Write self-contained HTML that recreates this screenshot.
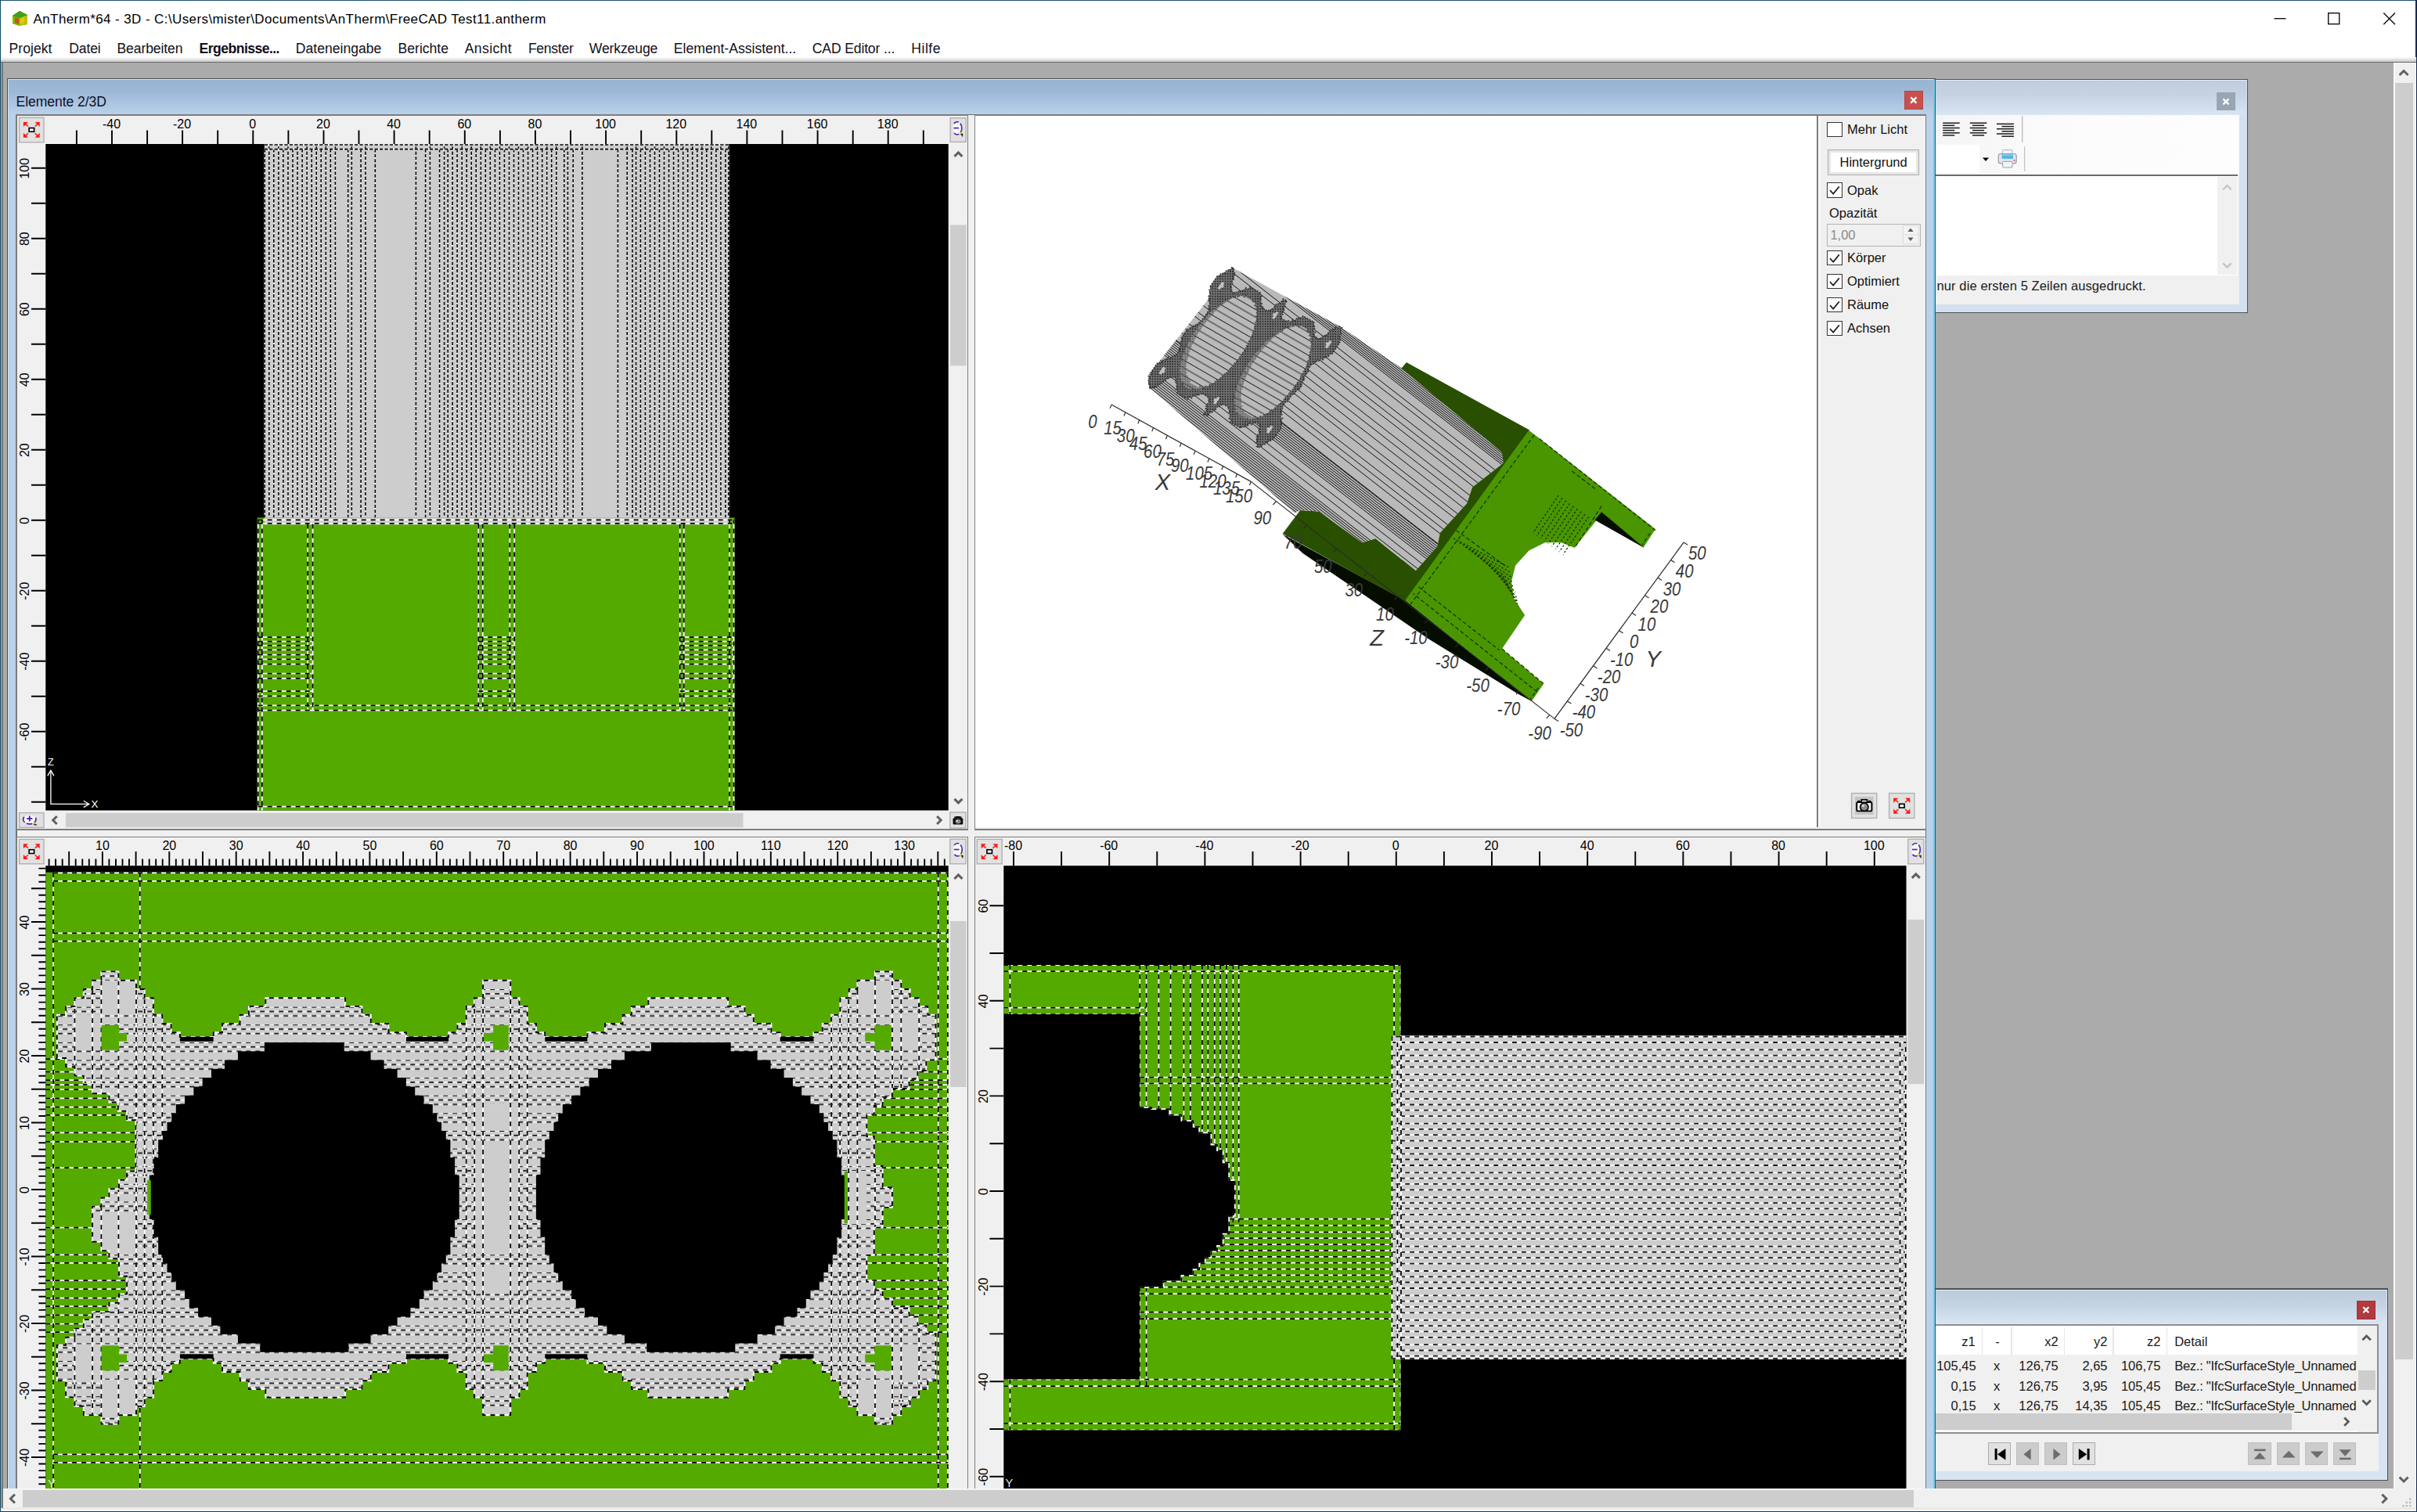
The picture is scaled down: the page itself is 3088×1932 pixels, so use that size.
<!DOCTYPE html><html><head><meta charset="utf-8"><title>AnTherm</title><style>
html,body{margin:0;padding:0;}
body{width:3088px;height:1932px;position:relative;overflow:hidden;background:#fff;font-family:"Liberation Sans",sans-serif;}
.a{position:absolute;box-sizing:border-box;}
.t{white-space:nowrap;}
svg{position:absolute;overflow:hidden;}
svg text{font-family:"Liberation Sans",sans-serif;}
.wl{stroke:#fff;stroke-width:1.6;fill:none;}
.bd{stroke:#000;stroke-width:1.6;fill:none;stroke-dasharray:4.3 2.1;}
.rl text{font-size:16px;fill:#000;text-anchor:middle;}
.tk{stroke:#000;stroke-width:1.9;fill:none;}
.ax text{font-size:23.5px;font-style:italic;fill:#3a3a3a;text-anchor:middle;}
</style></head><body>
<div class="a" style="left:0.0px;top:0.0px;width:3088.0px;height:1.0px;background:#1b5470;"></div>
<div class="a" style="left:0.0px;top:0.0px;width:1.0px;height:1932.0px;background:#0d4c6b;"></div>
<div class="a" style="left:3086.4px;top:0.0px;width:1.6px;height:1932.0px;background:#152a52;"></div>
<svg style="left:14px;top:12px" width="23" height="22" viewBox="0 0 23 22"><polygon points="2,8 11,2 21,7 21,19 11,21 2,18" fill="#4cae17"/><polygon points="2,8 11,11 11,21 2,18" fill="#7fb800"/><polygon points="11,11 21,7 21,19 11,21" fill="#b9c400"/><polygon points="5,10 10,12 10,19 5,17" fill="#c8541a"/><polygon points="12,12 17,10 17,17 12,19" fill="#e8c31a"/><polygon points="2,8 11,2 21,7 11,11" fill="#3f9e1a"/></svg>
<div class="a t ttl" style="top:13.1px;line-height:24px;font-size:17.0px;color:#000;left:42.5px;letter-spacing:0.4px;">AnTherm*64 - 3D - C:\Users\mister\Documents\AnTherm\FreeCAD Test11.antherm</div>
<svg style="left:2880px;top:0" width="208" height="46" viewBox="2880 0 208 46"><line x1="2905.5" y1="23.7" x2="2920.5" y2="23.7" stroke="#111" stroke-width="1.4"/><rect x="2974.7" y="16.7" width="14" height="14" fill="none" stroke="#111" stroke-width="1.4"/><path d="M3045.3 16.5 L3060 31.2 M3060 16.5 L3045.3 31.2" stroke="#111" stroke-width="1.5" fill="none"/></svg>
<div class="a t mn" style="top:49.8px;line-height:24px;font-size:17.6px;color:#101020;left:11.6px;letter-spacing:0px;">Projekt</div>
<div class="a t mn" style="top:49.8px;line-height:24px;font-size:17.6px;color:#101020;left:88.2px;letter-spacing:-0.14px;">Datei</div>
<div class="a t mn" style="top:49.8px;line-height:24px;font-size:17.6px;color:#101020;left:149.5px;letter-spacing:-0.12px;">Bearbeiten</div>
<div class="a t mn" style="top:49.8px;line-height:24px;font-size:17.6px;color:#101020;left:254.6px;font-weight:bold;letter-spacing:-0.55px;">Ergebnisse...</div>
<div class="a t mn" style="top:49.8px;line-height:24px;font-size:17.6px;color:#101020;left:377.8px;letter-spacing:0px;">Dateneingabe</div>
<div class="a t mn" style="top:49.8px;line-height:24px;font-size:17.6px;color:#101020;left:508.5px;letter-spacing:0px;">Berichte</div>
<div class="a t mn" style="top:49.8px;line-height:24px;font-size:17.6px;color:#101020;left:593.8px;letter-spacing:0.34px;">Ansicht</div>
<div class="a t mn" style="top:49.8px;line-height:24px;font-size:17.6px;color:#101020;left:674.9px;letter-spacing:-0.3px;">Fenster</div>
<div class="a t mn" style="top:49.8px;line-height:24px;font-size:17.6px;color:#101020;left:752.8px;letter-spacing:-0.14px;">Werkzeuge</div>
<div class="a t mn" style="top:49.8px;line-height:24px;font-size:17.6px;color:#101020;left:860.8px;letter-spacing:0px;">Element-Assistent...</div>
<div class="a t mn" style="top:49.8px;line-height:24px;font-size:17.6px;color:#101020;left:1037.8px;letter-spacing:-0.16px;">CAD Editor ...</div>
<div class="a t mn" style="top:49.8px;line-height:24px;font-size:17.6px;color:#101020;left:1164.3px;letter-spacing:0.5px;">Hilfe</div>
<div class="a" style="left:1.0px;top:73.0px;width:3086.0px;height:6.0px;background:linear-gradient(#ffffff,#c8c8c8);"></div>
<div class="a" style="left:1.0px;top:78.6px;width:3086.0px;height:1851.4px;background:#ababab;"></div>
<div class="a" style="left:1.0px;top:78.6px;width:3086.0px;height:1.8px;background:#6a6a6a;"></div>
<div class="a" style="left:2.2px;top:80.0px;width:1.6px;height:1850.0px;background:#767676;"></div>
<div class="a" style="left:1.0px;top:1928.0px;width:3086.0px;height:2.0px;background:#fdfdfd;"></div>
<div class="a" style="left:1.0px;top:1930.0px;width:3086.0px;height:2.0px;background:#3c3c3c;"></div>
<div class="a" style="left:2400.0px;top:100.6px;width:472.4px;height:299.8px;background:#505050;"></div>
<div class="a" style="left:2400.0px;top:101.8px;width:471.2px;height:297.4px;background:#d3e0ef;"></div>
<div class="a" style="left:2400.0px;top:101.8px;width:471.2px;height:1.2px;background:#e6eef7;"></div>
<div class="a" style="left:2400.0px;top:103.0px;width:470.0px;height:44.4px;background:linear-gradient(#bfcddd 0%,#c4d2e2 40%,#d9e5f2 100%);"></div>
<div class="a" style="left:2832.3px;top:117.7px;width:23.7px;height:23.6px;background:#98a5b4;"></div>
<svg style="left:2832.3px;top:117.7px" width="24" height="24" viewBox="0 0 24 24"><path d="M8.4 8.4 L15.4 15.4 M15.4 8.4 L8.4 15.4" stroke="#fff" stroke-width="2.2" fill="none"/></svg>
<div class="a" style="left:2460.0px;top:147.4px;width:400.5px;height:241.6px;background:#f0f0f0;"></div>
<div class="a" style="left:2460.0px;top:147.4px;width:400.5px;height:75.6px;background:linear-gradient(90deg,#f4f4f4 0%,#fbfbfb 40%,#fdfdfd 100%);"></div>
<div class="a" style="left:2460.0px;top:184.6px;width:69.2px;height:36.4px;background:#ffffff;"></div>
<svg style="left:2470px;top:147px" width="130" height="76" viewBox="2470 147 130 76"><line x1="2482.2" y1="157.2" x2="2503.7" y2="157.2" stroke="#1a1a1a" stroke-width="1.5"/><line x1="2482.2" y1="160.3" x2="2497.2" y2="160.3" stroke="#1a1a1a" stroke-width="1.5"/><line x1="2482.2" y1="163.5" x2="2503.7" y2="163.5" stroke="#1a1a1a" stroke-width="1.5"/><line x1="2482.2" y1="166.6" x2="2497.2" y2="166.6" stroke="#1a1a1a" stroke-width="1.5"/><line x1="2482.2" y1="169.8" x2="2503.7" y2="169.8" stroke="#1a1a1a" stroke-width="1.5"/><line x1="2482.2" y1="172.9" x2="2497.2" y2="172.9" stroke="#1a1a1a" stroke-width="1.5"/><line x1="2516.8" y1="157.2" x2="2538.3" y2="157.2" stroke="#1a1a1a" stroke-width="1.5"/><line x1="2520.0" y1="160.3" x2="2535.1" y2="160.3" stroke="#1a1a1a" stroke-width="1.5"/><line x1="2516.8" y1="163.5" x2="2538.3" y2="163.5" stroke="#1a1a1a" stroke-width="1.5"/><line x1="2520.0" y1="166.6" x2="2535.1" y2="166.6" stroke="#1a1a1a" stroke-width="1.5"/><line x1="2516.8" y1="169.8" x2="2538.3" y2="169.8" stroke="#1a1a1a" stroke-width="1.5"/><line x1="2520.0" y1="172.9" x2="2535.1" y2="172.9" stroke="#1a1a1a" stroke-width="1.5"/><line x1="2551.0" y1="158.4" x2="2572.9" y2="158.4" stroke="#1a1a1a" stroke-width="1.5"/><line x1="2557.5" y1="161.6" x2="2572.9" y2="161.6" stroke="#1a1a1a" stroke-width="1.5"/><line x1="2551.0" y1="164.7" x2="2572.9" y2="164.7" stroke="#1a1a1a" stroke-width="1.5"/><line x1="2557.5" y1="167.8" x2="2572.9" y2="167.8" stroke="#1a1a1a" stroke-width="1.5"/><line x1="2551.0" y1="171.0" x2="2572.9" y2="171.0" stroke="#1a1a1a" stroke-width="1.5"/><line x1="2557.5" y1="174.2" x2="2572.9" y2="174.2" stroke="#1a1a1a" stroke-width="1.5"/><line x1="2583.7" y1="148" x2="2583.7" y2="182" stroke="#b9b9b9" stroke-width="1.3"/><line x1="2586.6" y1="187" x2="2586.6" y2="219" stroke="#c4c4c4" stroke-width="1.3"/><polygon points="2533,201.6 2541,201.6 2537,206" fill="#000"/><rect x="2558.5" y="191.5" width="12.5" height="7" rx="1.2" fill="#f4f6f8" stroke="#a9b3bd" stroke-width="1"/><rect x="2553.2" y="196.5" width="23" height="12.5" rx="3" fill="#dfe5ea" stroke="#8e9aa6" stroke-width="1.1"/><rect x="2557.6" y="197.2" width="14.4" height="5.6" fill="#4eb4e6"/><rect x="2557.6" y="197.2" width="14.4" height="2" fill="#7fcdf0"/><rect x="2558.6" y="206.4" width="12.4" height="7.6" rx="1" fill="#f2f4f6" stroke="#9aa4ae" stroke-width="1"/><rect x="2572.6" y="204" width="2" height="1.6" fill="#e05050"/></svg>
<div class="a" style="left:2460.0px;top:222.8px;width:398.8px;height:2.2px;background:#6b6b6b;"></div>
<div class="a" style="left:2460.0px;top:225.0px;width:398.8px;height:127.0px;background:#ffffff;"></div>
<div class="a" style="left:2833.4px;top:226.4px;width:24.8px;height:124.8px;background:#f0f0f0;"></div>
<svg style="left:2833px;top:226px" width="26" height="126" viewBox="2833 226 26 126"><polyline points="2840.2000000000003,242.2 2845.4,237.0 2850.6,242.2" fill="none" stroke="#c3c3c3" stroke-width="2.2"/><polyline points="2840.2000000000003,336.4 2845.4,341.6 2850.6,336.4" fill="none" stroke="#c3c3c3" stroke-width="2.2"/></svg>
<div class="a t bw1" style="top:353.2px;line-height:24px;font-size:16.5px;color:#1a1a1a;left:2474.5px;letter-spacing:0.11px;">nur die ersten 5 Zeilen ausgedruckt.</div>
<div class="a" style="left:2400.0px;top:1646.4px;width:651.2px;height:245.6px;background:#505050;"></div>
<div class="a" style="left:2400.0px;top:1647.6px;width:650.0px;height:243.2px;background:#d9e4f2;"></div>
<div class="a" style="left:2400.0px;top:1647.6px;width:650.0px;height:1.4px;background:#e6eef7;"></div>
<div class="a" style="left:2400.0px;top:1649.0px;width:648.8px;height:43.6px;background:linear-gradient(#bccbdc 0%,#c4d2e2 40%,#dbe6f3 100%);"></div>
<div class="a" style="left:3010.5px;top:1662.4px;width:24.1px;height:24.1px;background:#b03a3e;border:1px solid #a63236;"></div>
<svg style="left:3010.5px;top:1662.4px" width="24" height="24" viewBox="0 0 24 24"><path d="M8.3 8.3 L15.3 15.3 M15.3 8.3 L8.3 15.3" stroke="#fff" stroke-width="2.2" fill="none"/></svg>
<div class="a" style="left:2460.0px;top:1692.6px;width:578.6px;height:187.0px;background:#f0f0f0;"></div>
<div class="a" style="left:2460.0px;top:1692.4px;width:578.6px;height:139.2px;background:#8f8f8f;"></div>
<div class="a" style="left:2460.0px;top:1693.8px;width:577.4px;height:136.6px;background:#ffffff;"></div>
<div class="a" style="left:2460.0px;top:1731.4px;width:551.8px;height:73.2px;background:#f0f0f0;"></div>
<div class="a" style="left:2531.7px;top:1696.0px;width:1.6px;height:34.6px;background:#e6e6e6;"></div>
<div class="a" style="left:2569.2px;top:1696.0px;width:1.6px;height:34.6px;background:#e6e6e6;"></div>
<div class="a" style="left:2636.8px;top:1696.0px;width:1.6px;height:34.6px;background:#e6e6e6;"></div>
<div class="a" style="left:2699.2px;top:1696.0px;width:1.6px;height:34.6px;background:#e6e6e6;"></div>
<div class="a" style="left:2767.6px;top:1696.0px;width:1.6px;height:34.6px;background:#e6e6e6;"></div>
<div class="a t bw2" style="top:1701.8px;line-height:24px;font-size:16.5px;color:#1a1a1a;left:1923.6px;width:600px;text-align:right;">z1</div>
<div class="a t bw2" style="top:1701.8px;line-height:24px;font-size:16.5px;color:#1a1a1a;left:2252.0px;width:600px;text-align:center;">-</div>
<div class="a t bw2" style="top:1701.8px;line-height:24px;font-size:16.5px;color:#1a1a1a;left:2029.8px;width:600px;text-align:right;">x2</div>
<div class="a t bw2" style="top:1701.8px;line-height:24px;font-size:16.5px;color:#1a1a1a;left:2092.5px;width:600px;text-align:right;">y2</div>
<div class="a t bw2" style="top:1701.8px;line-height:24px;font-size:16.5px;color:#1a1a1a;left:2160.4px;width:600px;text-align:right;">z2</div>
<div class="a t bw2" style="top:1701.8px;line-height:24px;font-size:16.5px;color:#1a1a1a;left:2778.2px;">Detail</div>
<div class="a t bw2" style="top:1733.4px;line-height:24px;font-size:16.5px;color:#1a1a1a;left:1924.6px;width:600px;text-align:right;">105,45</div>
<div class="a t bw2" style="top:1733.4px;line-height:24px;font-size:16.5px;color:#1a1a1a;left:2251.2px;width:600px;text-align:center;">x</div>
<div class="a t bw2" style="top:1733.4px;line-height:24px;font-size:16.5px;color:#1a1a1a;left:2029.8px;width:600px;text-align:right;">126,75</div>
<div class="a t bw2" style="top:1733.4px;line-height:24px;font-size:16.5px;color:#1a1a1a;left:2092.5px;width:600px;text-align:right;">2,65</div>
<div class="a t bw2" style="top:1733.4px;line-height:24px;font-size:16.5px;color:#1a1a1a;left:2160.4px;width:600px;text-align:right;">106,75</div>
<div class="a t bw2" style="top:1733.4px;line-height:24px;font-size:16.5px;color:#1a1a1a;left:2778.2px;letter-spacing:-0.25px;">Bez.: "IfcSurfaceStyle_Unnamed</div>
<div class="a t bw2" style="top:1758.6px;line-height:24px;font-size:16.5px;color:#1a1a1a;left:1924.6px;width:600px;text-align:right;">0,15</div>
<div class="a t bw2" style="top:1758.6px;line-height:24px;font-size:16.5px;color:#1a1a1a;left:2251.2px;width:600px;text-align:center;">x</div>
<div class="a t bw2" style="top:1758.6px;line-height:24px;font-size:16.5px;color:#1a1a1a;left:2029.8px;width:600px;text-align:right;">126,75</div>
<div class="a t bw2" style="top:1758.6px;line-height:24px;font-size:16.5px;color:#1a1a1a;left:2092.5px;width:600px;text-align:right;">3,95</div>
<div class="a t bw2" style="top:1758.6px;line-height:24px;font-size:16.5px;color:#1a1a1a;left:2160.4px;width:600px;text-align:right;">105,45</div>
<div class="a t bw2" style="top:1758.6px;line-height:24px;font-size:16.5px;color:#1a1a1a;left:2778.2px;letter-spacing:-0.25px;">Bez.: "IfcSurfaceStyle_Unnamed</div>
<div class="a t bw2" style="top:1783.9px;line-height:24px;font-size:16.5px;color:#1a1a1a;left:1924.6px;width:600px;text-align:right;">0,15</div>
<div class="a t bw2" style="top:1783.9px;line-height:24px;font-size:16.5px;color:#1a1a1a;left:2251.2px;width:600px;text-align:center;">x</div>
<div class="a t bw2" style="top:1783.9px;line-height:24px;font-size:16.5px;color:#1a1a1a;left:2029.8px;width:600px;text-align:right;">126,75</div>
<div class="a t bw2" style="top:1783.9px;line-height:24px;font-size:16.5px;color:#1a1a1a;left:2092.5px;width:600px;text-align:right;">14,35</div>
<div class="a t bw2" style="top:1783.9px;line-height:24px;font-size:16.5px;color:#1a1a1a;left:2160.4px;width:600px;text-align:right;">105,45</div>
<div class="a t bw2" style="top:1783.9px;line-height:24px;font-size:16.5px;color:#1a1a1a;left:2778.2px;letter-spacing:-0.25px;">Bez.: "IfcSurfaceStyle_Unnamed</div>
<div class="a" style="left:2460.0px;top:1804.6px;width:551.8px;height:23.6px;background:#f0f0f0;"></div>
<div class="a" style="left:2460.0px;top:1806.0px;width:468.0px;height:20.8px;background:#cdcdcd;"></div>
<div class="a" style="left:3011.8px;top:1693.8px;width:25.6px;height:136.6px;background:#f0f0f0;"></div>
<div class="a" style="left:3012.6px;top:1751.4px;width:22.8px;height:25.0px;background:#cdcdcd;"></div>
<svg style="left:2980px;top:1693px" width="60" height="140" viewBox="2980 1693 60 140"><polyline points="3018.4,1712.1999999999998 3023.6,1707.0 3028.7999999999997,1712.1999999999998" fill="none" stroke="#5a5a5a" stroke-width="2.8"/><polyline points="3018.4,1789.2 3023.6,1794.3999999999999 3028.7999999999997,1789.2" fill="none" stroke="#5a5a5a" stroke-width="2.8"/><polyline points="2995.2000000000003,1811.3999999999999 3000.4,1816.6 2995.2000000000003,1821.8" fill="none" stroke="#5a5a5a" stroke-width="2.8"/></svg>
<div class="a" style="left:2539.7px;top:1842.6px;width:29.6px;height:29.6px;background:#e1e1e1;border:1px solid #adadad;"></div>
<svg style="left:2539.7px;top:1842.6px" width="30" height="30" viewBox="0 0 30 30"><rect x="8.6" y="8" width="3" height="14.4" fill="#000"/><polygon points="22.4,8 22.4,22.4 12,15.2" fill="#000"/></svg>
<div class="a" style="left:2575.5px;top:1842.6px;width:29.6px;height:29.6px;background:#cccccc;border:1px solid #bfbfbf;"></div>
<svg style="left:2575.5px;top:1842.6px" width="30" height="30" viewBox="0 0 30 30"><polygon points="18.6,8 18.6,22.4 9.4,15.2" fill="#6d6d6d"/></svg>
<div class="a" style="left:2611.5px;top:1842.6px;width:29.6px;height:29.6px;background:#cccccc;border:1px solid #bfbfbf;"></div>
<svg style="left:2611.5px;top:1842.6px" width="30" height="30" viewBox="0 0 30 30"><polygon points="11.4,8 11.4,22.4 20.6,15.2" fill="#6d6d6d"/></svg>
<div class="a" style="left:2647.7px;top:1842.6px;width:29.6px;height:29.6px;background:#e1e1e1;border:1px solid #adadad;"></div>
<svg style="left:2647.7px;top:1842.6px" width="30" height="30" viewBox="0 0 30 30"><rect x="18.6" y="8" width="3" height="14.4" fill="#000"/><polygon points="7.8,8 7.8,22.4 18.2,15.2" fill="#000"/></svg>
<div class="a" style="left:2872.4px;top:1842.6px;width:29.6px;height:29.6px;background:#cccccc;border:1px solid #bfbfbf;"></div>
<svg style="left:2872.4px;top:1842.6px" width="30" height="30" viewBox="0 0 30 30"><rect x="8" y="8.6" width="14.6" height="2.6" fill="#6d6d6d"/><polygon points="7.6,21.6 22.8,21.6 15.2,13" fill="#6d6d6d"/></svg>
<div class="a" style="left:2908.6px;top:1842.6px;width:29.6px;height:29.6px;background:#cccccc;border:1px solid #bfbfbf;"></div>
<svg style="left:2908.6px;top:1842.6px" width="30" height="30" viewBox="0 0 30 30"><polygon points="6.8,19.4 23.6,19.4 15.2,10.8" fill="#6d6d6d"/></svg>
<div class="a" style="left:2944.6px;top:1842.6px;width:29.6px;height:29.6px;background:#cccccc;border:1px solid #bfbfbf;"></div>
<svg style="left:2944.6px;top:1842.6px" width="30" height="30" viewBox="0 0 30 30"><polygon points="6.8,11.4 23.6,11.4 15.2,20" fill="#6d6d6d"/></svg>
<div class="a" style="left:2980.6px;top:1842.6px;width:29.6px;height:29.6px;background:#cccccc;border:1px solid #bfbfbf;"></div>
<svg style="left:2980.6px;top:1842.6px" width="30" height="30" viewBox="0 0 30 30"><rect x="8" y="19.6" width="14.6" height="2.6" fill="#6d6d6d"/><polygon points="7.6,9.2 22.8,9.2 15.2,17.8" fill="#6d6d6d"/></svg>
<div class="a" style="left:8.6px;top:100.0px;width:2464.4px;height:1803.0px;background:#4d4d4d;"></div>
<div class="a" style="left:9.8px;top:101.2px;width:2461.8px;height:1801.8px;background:#b9d1ea;"></div>
<div class="a" style="left:9.8px;top:101.2px;width:2461.8px;height:1.4px;background:#dbe6f3;"></div>
<div class="a" style="left:9.8px;top:101.2px;width:1.2px;height:1801.8px;background:#d5e2f1;"></div>
<div class="a" style="left:2469.6px;top:101.2px;width:2.0px;height:1801.8px;background:#6ccfe9;"></div>
<div class="a" style="left:11.0px;top:102.4px;width:2458.6px;height:44.0px;background:linear-gradient(#99b4d3 0%,#9db8d7 35%,#b9d1ea 100%);"></div>
<div class="a t et" style="top:117.5px;line-height:24px;font-size:17.6px;color:#101028;left:20.6px;letter-spacing:-0.09px;">Elemente 2/3D</div>
<div class="a" style="left:2433.0px;top:115.6px;width:24.0px;height:24.0px;background:#c7504f;border:1px solid #b84544;"></div>
<svg style="left:2433px;top:115.6px" width="24" height="24" viewBox="0 0 24 24"><path d="M8.2 8.4 L15.4 15.6 M15.4 8.4 L8.2 15.6" stroke="#fff" stroke-width="2.2" fill="none"/></svg>
<div class="a" style="left:20.4px;top:146.2px;width:2440.8px;height:1756.8px;background:#6f6f6f;"></div>
<div class="a" style="left:21.6px;top:147.4px;width:2438.6px;height:1755.6px;background:#f0f0f0;"></div>
<div class="a" style="left:20.4px;top:146.2px;width:1216.8px;height:914.6px;background:#7d7d7d;"></div>
<div class="a" style="left:21.8px;top:147.6px;width:1214.0px;height:911.8px;background:#f0f0f0;"></div>
<svg style="left:21.8px;top:147.6px" width="1214.0" height="911.8000000000001" viewBox="21.8 147.6 1214.0 911.8000000000001"><rect x="58.1" y="183.6" width="1153.4" height="851.4999999999999" fill="#000"/><rect x="337.6" y="183.6" width="593.4" height="482.4" fill="#cdcdcd"/><defs><path id="dp1" d="M338.0 190.0L338.0 664.0M343.6 186.8L343.6 664.0M349.6 190.0L349.6 664.0M355.7 186.8L355.7 664.0M361.7 190.0L361.7 664.0M367.8 186.8L367.8 664.0M373.8 190.0L373.8 664.0M379.8 186.8L379.8 664.0M385.9 190.0L385.9 664.0M391.9 186.8L391.9 664.0M398.0 190.0L398.0 664.0M404.0 186.8L404.0 664.0M410.0 190.0L410.0 664.0M416.1 186.8L416.1 664.0M422.1 190.0L422.1 664.0M428.2 186.8L428.2 664.0M444.5 190.0L444.5 664.0M449.1 186.8L449.1 664.0M460.9 190.0L460.9 664.0M466.8 186.8L466.8 664.0M479.1 190.0L479.1 664.0M531.2 186.8L531.2 664.0M543.4 190.0L543.4 664.0M549.2 186.8L549.2 664.0M561.4 190.0L561.4 664.0M567.4 186.8L567.4 664.0M572.0 190.0L572.0 664.0M577.9 186.8L577.9 664.0M583.9 190.0L583.9 664.0M590.0 186.8L590.0 664.0M596.0 190.0L596.0 664.0M602.0 186.8L602.0 664.0M608.0 190.0L608.0 664.0M614.1 186.8L614.1 664.0M620.1 190.0L620.1 664.0M626.1 186.8L626.1 664.0M632.2 190.0L632.2 664.0M638.2 186.8L638.2 664.0M644.2 190.0L644.2 664.0M650.3 186.8L650.3 664.0M656.3 190.0L656.3 664.0M662.3 186.8L662.3 664.0M668.3 190.0L668.3 664.0M674.4 186.8L674.4 664.0M680.4 190.0L680.4 664.0M686.4 186.8L686.4 664.0M692.5 190.0L692.5 664.0M698.5 186.8L698.5 664.0M704.5 190.0L704.5 664.0M710.6 186.8L710.6 664.0M720.6 190.0L720.6 664.0M725.2 186.8L725.2 664.0M732.0 190.0L732.0 664.0M743.7 186.8L743.7 664.0M789.2 190.0L789.2 664.0M801.0 186.8L801.0 664.0M807.8 190.0L807.8 664.0M812.4 186.8L812.4 664.0M818.2 190.0L818.2 664.0M824.2 186.8L824.2 664.0M830.3 190.0L830.3 664.0M836.3 186.8L836.3 664.0M842.3 190.0L842.3 664.0M848.3 186.8L848.3 664.0M854.4 190.0L854.4 664.0M860.4 186.8L860.4 664.0M866.4 190.0L866.4 664.0M872.5 186.8L872.5 664.0M878.5 190.0L878.5 664.0M884.5 186.8L884.5 664.0M890.6 190.0L890.6 664.0M896.6 186.8L896.6 664.0M902.6 190.0L902.6 664.0M908.6 186.8L908.6 664.0M914.7 190.0L914.7 664.0M920.7 186.8L920.7 664.0M926.7 190.0L926.7 664.0M930.6 186.8L930.6 664.0"/></defs><use href="#dp1" stroke="#fff" stroke-width="1.6" fill="none"/><use href="#dp1" stroke="#000" stroke-width="1.6" fill="none" stroke-dasharray="4.3 2.1"/><defs><path id="dp2" d="M337.6 184.6L931.0 184.6M337.6 190.2L931.0 190.2"/></defs><use href="#dp2" stroke="#fff" stroke-width="1.6" fill="none"/><use href="#dp2" stroke="#000" stroke-width="1.6" fill="none" stroke-dasharray="4.3 2.1"/><rect x="328.5" y="661" width="609.8" height="374.0999999999999" fill="#55aa00"/><rect x="337.6" y="661" width="593.4" height="9" fill="#cdcdcd"/><defs><path id="dp3" d="M329.5 813.7L399.4 813.7M329.5 819.2L399.4 819.2M329.5 824.6L399.4 824.6M329.5 830.1L399.4 830.1M329.5 836.3L399.4 836.3M329.5 842.1L399.4 842.1M329.5 848.3L399.4 848.3M329.5 860.3L399.4 860.3M329.5 866.5L399.4 866.5M329.5 882.8L399.4 882.8M329.5 889.0L399.4 889.0M611.1 813.7L657.0 813.7M611.1 819.2L657.0 819.2M611.1 824.6L657.0 824.6M611.1 830.1L657.0 830.1M611.1 836.3L657.0 836.3M611.1 842.1L657.0 842.1M611.1 848.3L657.0 848.3M611.1 860.3L657.0 860.3M611.1 866.5L657.0 866.5M611.1 882.8L657.0 882.8M611.1 889.0L657.0 889.0M868.5 813.7L937.3 813.7M868.5 819.2L937.3 819.2M868.5 824.6L937.3 824.6M868.5 830.1L937.3 830.1M868.5 836.3L937.3 836.3M868.5 842.1L937.3 842.1M868.5 848.3L937.3 848.3M868.5 860.3L937.3 860.3M868.5 866.5L937.3 866.5M868.5 882.8L937.3 882.8M868.5 889.0L937.3 889.0M329.5 901.0L937.3 901.0M329.5 907.2L937.3 907.2M329.5 1030.2L937.3 1030.2M329.5 663.9L937.3 663.9M329.5 668.6L937.3 668.6M329.5 663.0L329.5 1035.0M334.7 663.0L334.7 1035.0M931.8 663.0L931.8 1035.0M937.3 663.0L937.3 1035.0M392.9 669.0L392.9 907.0M399.4 669.0L399.4 907.0M611.1 669.0L611.1 907.0M616.6 669.0L616.6 907.0M651.1 669.0L651.1 907.0M657.0 669.0L657.0 907.0M868.5 669.0L868.5 907.0M873.6 669.0L873.6 907.0"/></defs><use href="#dp3" stroke="#fff" stroke-width="1.75" fill="none"/><use href="#dp3" stroke="#000" stroke-width="1.75" fill="none" stroke-dasharray="6 6"/><g stroke="#fff" stroke-width="1.3" fill="none"><path d="M64.7 985 V1027 H113"/><path d="M60.6 991 L64.7 984 L68.8 991 M106.6 1022.8 L113.6 1027 L106.6 1031.2"/></g><text x="64.6" y="977.6" font-size="12.5" fill="#fff" text-anchor="middle">Z</text><text x="120.8" y="1031.2" font-size="13.5" fill="#fff" text-anchor="middle">X</text><path class="tk" d="M97.7 166V183.6M142.8 166V183.6M187.9 166V183.6M232.9 166V183.6M278.0 166V183.6M323.1 166V183.6M368.2 166V183.6M413.3 166V183.6M458.3 166V183.6M503.4 166V183.6M548.5 166V183.6M593.6 166V183.6M638.7 166V183.6M683.7 166V183.6M728.8 166V183.6M773.9 166V183.6M819.0 166V183.6M864.1 166V183.6M909.1 166V183.6M954.2 166V183.6M999.3 166V183.6M1044.4 166V183.6M1089.5 166V183.6M1134.5 166V183.6M1179.6 166V183.6M39.8 214.3H58.1M39.8 259.3H58.1M39.8 304.3H58.1M39.8 349.3H58.1M39.8 394.3H58.1M39.8 439.3H58.1M39.8 484.3H58.1M39.8 529.3H58.1M39.8 574.3H58.1M39.8 619.3H58.1M39.8 664.3H58.1M39.8 709.3H58.1M39.8 754.3H58.1M39.8 799.3H58.1M39.8 844.3H58.1M39.8 889.3H58.1M39.8 934.3H58.1M39.8 979.3H58.1M39.8 1024.3H58.1"/><g class="rl"><text x="142.3" y="164">-40</text><text x="232.4" y="164">-20</text><text x="322.6" y="164">0</text><text x="412.8" y="164">20</text><text x="502.9" y="164">40</text><text x="593.1" y="164">60</text><text x="683.2" y="164">80</text><text x="773.4" y="164">100</text><text x="863.6" y="164">120</text><text x="953.7" y="164">140</text><text x="1043.9" y="164">160</text><text x="1134.0" y="164">180</text><text transform="translate(36.9,214.8) rotate(-90)">100</text><text transform="translate(36.9,304.8) rotate(-90)">80</text><text transform="translate(36.9,394.8) rotate(-90)">60</text><text transform="translate(36.9,484.8) rotate(-90)">40</text><text transform="translate(36.9,574.8) rotate(-90)">20</text><text transform="translate(36.9,664.8) rotate(-90)">0</text><text transform="translate(36.9,754.8) rotate(-90)">-20</text><text transform="translate(36.9,844.8) rotate(-90)">-40</text><text transform="translate(36.9,934.8) rotate(-90)">-60</text></g><rect x="24.4" y="149.8" width="31.4" height="31.599999999999994" fill="#e1e1e1" stroke="#adadad" stroke-width="1.3"/><g transform="translate(24.4,149.8) scale(0.98125)"><g stroke="#ff1a1a" stroke-width="1.6" fill="#ff1a1a"><line x1="11.5" y1="11.5" x2="6" y2="6.5"/><polygon points="5.4,5.9 11.6,5.9 5.4,12.1" stroke="none"/><line x1="20.5" y1="11.5" x2="26" y2="6.5"/><polygon points="26.6,5.9 20.4,5.9 26.6,12.1" stroke="none"/><line x1="11.5" y1="20.5" x2="6" y2="25.5"/><polygon points="5.4,26.1 11.6,26.1 5.4,19.9" stroke="none"/><line x1="20.5" y1="20.5" x2="26" y2="25.5"/><polygon points="26.6,26.1 20.4,26.1 26.6,19.9" stroke="none"/></g><rect x="12.8" y="13.6" width="6.6" height="4.8" fill="#fff" stroke="#000" stroke-width="1.7"/></g><rect x="1214" y="150.4" width="20" height="30.599999999999994" fill="#e1e1e1" stroke="#adadad" stroke-width="1.3"/><g transform="translate(1222.7,163.4)"><ellipse cx="0" cy="0" rx="5.6" ry="7.9" fill="#fbfbfb"/><ellipse cx="0" cy="0" rx="5.9" ry="8.2" fill="none" stroke="#5326ad" stroke-width="1.7" stroke-dasharray="6 2.5 7 12.5 7 2.5 8"/><line x1="-4.6" y1="-0.2" x2="2.2" y2="-0.2" stroke="#5326ad" stroke-width="1.7"/><polygon points="3.4,6.2 7.4,7.2 7.0,11.4" fill="#222"/><rect x="3.4" y="5.2" width="2" height="2" fill="#e8d800"/></g><rect x="1213.9" y="287" width="20.5" height="180" fill="#cdcdcd"/><polyline points="1219.2,199.5 1224.2,194.5 1229.2,199.5" fill="none" stroke="#606060" stroke-width="3.0"/><polyline points="1219.2,1020.5 1224.2,1025.5 1229.2,1020.5" fill="none" stroke="#606060" stroke-width="3.0"/><rect x="83.7" y="1038.5" width="865.6" height="18.3" fill="#cdcdcd"/><polyline points="72.5,1042.6 67.5,1047.6 72.5,1052.6" fill="none" stroke="#606060" stroke-width="3.0"/><polyline points="1196.9,1042.6 1201.9,1047.6 1196.9,1052.6" fill="none" stroke="#606060" stroke-width="3.0"/><rect x="24.4" y="1038.2" width="31.4" height="18.799999999999955" fill="#e1e1e1" stroke="#adadad" stroke-width="1.3"/><g transform="translate(37.6,1046.6)"><ellipse cx="0" cy="0" rx="7.9" ry="5.6" fill="#fbfbfb"/><ellipse cx="0" cy="0" rx="8.2" ry="5.9" fill="none" stroke="#5326ad" stroke-width="1.8" stroke-dasharray="5 2.5 7.5 2.5 8.1 16.2 3.1 0"/><line x1="-3.6" y1="-1" x2="3.6" y2="-1" stroke="#4a1fa8" stroke-width="1.8"/><line x1="0" y1="-4.6" x2="0" y2="2.6" stroke="#4a1fa8" stroke-width="1.8"/><polygon points="5.2,4.4 10.4,7.2 5.6,7.6" fill="#222"/><rect x="5.2" y="3.6" width="2.2" height="2" fill="#e8d800"/></g><rect x="1213.6" y="1037.6" width="20.200000000000045" height="20.0" fill="#e1e1e1" stroke="#adadad" stroke-width="1.3"/><g transform="translate(1223.7,1048.6)"><rect x="-6.4" y="-3.6" width="12.8" height="8" rx="0.8" fill="#0a0a0a"/><rect x="-4.6" y="-5.6" width="2.6" height="2.4" fill="#0a0a0a"/><rect x="2" y="-5.6" width="2.6" height="2.4" fill="#0a0a0a"/><rect x="-2.4" y="-6" width="4.8" height="2.6" fill="#0a0a0a"/><ellipse cx="0.2" cy="0.6" rx="3.6" ry="2.9" fill="#8a8a8a"/><circle cx="-1.2" cy="-0.2" r="1" fill="#e8e8e8"/></g></svg>
<div class="a" style="left:1244.8px;top:146.2px;width:1216.4px;height:914.6px;background:#7d7d7d;"></div>
<div class="a" style="left:1246.2px;top:147.6px;width:1214.0px;height:911.8px;background:#f0f0f0;"></div>
<div class="a" style="left:1246.2px;top:147.6px;width:1074.4px;height:909.8px;background:#ffffff;"></div>
<div class="a" style="left:2320.6px;top:147.6px;width:2.4px;height:909.8px;background:#7d7d7d;"></div>
<div class="a" style="left:2323.0px;top:147.6px;width:1.6px;height:909.8px;background:#fafafa;"></div>
<div class="a" style="left:2334.2px;top:155.8px;width:19.4px;height:19.6px;background:#fff;border:1.5px solid #333;"></div>
<div class="a t sd" style="top:153.4px;line-height:24px;font-size:16.5px;color:#111;left:2360.0px;">Mehr Licht</div>
<div class="a" style="left:2335.0px;top:191.0px;width:117.2px;height:32.6px;background:#e6e6e6;border:1.3px solid #adadad;"></div>
<div class="a" style="left:2339.0px;top:195.0px;width:109.2px;height:24.6px;background:#ffffff;"></div>
<div class="a t sd" style="top:195.2px;line-height:24px;font-size:16.5px;color:#111;left:2093.6px;width:600px;text-align:center;">Hintergrund</div>
<div class="a" style="left:2334.2px;top:233.0px;width:19.4px;height:19.6px;background:#fff;border:1.5px solid #333;"></div>
<svg style="left:2334.2px;top:233.0px" width="20" height="20" viewBox="0 0 20 20"><path d="M4 10.2 L8.2 14.6 L15.8 5.4" fill="none" stroke="#222" stroke-width="1.7"/></svg>
<div class="a t sd" style="top:230.6px;line-height:24px;font-size:16.5px;color:#111;left:2360.0px;">Opak</div>
<div class="a t sd" style="top:259.8px;line-height:24px;font-size:16.5px;color:#111;left:2337.0px;">Opazität</div>
<div class="a" style="left:2334.0px;top:285.6px;width:120.0px;height:29.2px;background:#f0f0f0;border:1.3px solid #b4b4b4;"></div>
<div class="a t sd" style="top:287.6px;line-height:24px;font-size:16.5px;color:#8a8a8a;left:2338.4px;">1,00</div>
<div class="a" style="left:2430.6px;top:288.0px;width:21.0px;height:24.4px;background:#f3f3f3;border:1px solid #dcdcdc;"></div>
<svg style="left:2430px;top:286px" width="24" height="28" viewBox="2430 286 24 28"><polygon points="2437.4,296 2444.6,296 2441,291.6" fill="#5a5a5a"/><polygon points="2437.4,303.6 2444.6,303.6 2441,308" fill="#5a5a5a"/><line x1="2431" y1="300" x2="2451" y2="300" stroke="#dcdcdc"/></svg>
<div class="a" style="left:2334.2px;top:319.8px;width:19.4px;height:19.6px;background:#fff;border:1.5px solid #333;"></div>
<svg style="left:2334.2px;top:319.8px" width="20" height="20" viewBox="0 0 20 20"><path d="M4 10.2 L8.2 14.6 L15.8 5.4" fill="none" stroke="#222" stroke-width="1.7"/></svg>
<div class="a t sd" style="top:317.4px;line-height:24px;font-size:16.5px;color:#111;left:2360.0px;">Körper</div>
<div class="a" style="left:2334.2px;top:349.8px;width:19.4px;height:19.6px;background:#fff;border:1.5px solid #333;"></div>
<svg style="left:2334.2px;top:349.8px" width="20" height="20" viewBox="0 0 20 20"><path d="M4 10.2 L8.2 14.6 L15.8 5.4" fill="none" stroke="#222" stroke-width="1.7"/></svg>
<div class="a t sd" style="top:347.4px;line-height:24px;font-size:16.5px;color:#111;left:2360.0px;">Optimiert</div>
<div class="a" style="left:2334.2px;top:379.8px;width:19.4px;height:19.6px;background:#fff;border:1.5px solid #333;"></div>
<svg style="left:2334.2px;top:379.8px" width="20" height="20" viewBox="0 0 20 20"><path d="M4 10.2 L8.2 14.6 L15.8 5.4" fill="none" stroke="#222" stroke-width="1.7"/></svg>
<div class="a t sd" style="top:377.4px;line-height:24px;font-size:16.5px;color:#111;left:2360.0px;">Räume</div>
<div class="a" style="left:2334.2px;top:409.6px;width:19.4px;height:19.6px;background:#fff;border:1.5px solid #333;"></div>
<svg style="left:2334.2px;top:409.59999999999997px" width="20" height="20" viewBox="0 0 20 20"><path d="M4 10.2 L8.2 14.6 L15.8 5.4" fill="none" stroke="#222" stroke-width="1.7"/></svg>
<div class="a t sd" style="top:407.2px;line-height:24px;font-size:16.5px;color:#111;left:2360.0px;">Achsen</div>
<svg style="left:2360px;top:1008px" width="96" height="44" viewBox="2360 1008 96 44"><rect x="2365.6" y="1013.6" width="32.20000000000027" height="31.800000000000068" fill="#e1e1e1" stroke="#adadad" stroke-width="1.3"/><rect x="2370" y="1018" width="23.4" height="23" fill="#c4c4c4"/><g transform="translate(2381.8,1030.4) scale(1.0)"><rect x="-9.6" y="-5.4" width="19.2" height="11.4" rx="1.6" fill="#f4f4f4" stroke="#000" stroke-width="1.9"/><rect x="-3.6" y="-8.6" width="7.2" height="3.6" fill="#ddd" stroke="#000" stroke-width="1.6"/><rect x="-8.4" y="-7.6" width="3" height="2.4" fill="#000"/><rect x="5.4" y="-7.6" width="3" height="2.4" fill="#000"/><circle cx="0" cy="0.8" r="5.2" fill="#8c8c8c" stroke="#000" stroke-width="1.6"/><circle cx="-1.4" cy="-0.8" r="1.7" fill="#d8d8d8"/></g><rect x="2413.6" y="1013.6" width="32.20000000000027" height="31.800000000000068" fill="#e1e1e1" stroke="#adadad" stroke-width="1.3"/><g transform="translate(2413.8,1013.8) scale(0.99375)"><g stroke="#ff1a1a" stroke-width="1.6" fill="#ff1a1a"><line x1="11.5" y1="11.5" x2="6" y2="6.5"/><polygon points="5.4,5.9 11.6,5.9 5.4,12.1" stroke="none"/><line x1="20.5" y1="11.5" x2="26" y2="6.5"/><polygon points="26.6,5.9 20.4,5.9 26.6,12.1" stroke="none"/><line x1="11.5" y1="20.5" x2="6" y2="25.5"/><polygon points="5.4,26.1 11.6,26.1 5.4,19.9" stroke="none"/><line x1="20.5" y1="20.5" x2="26" y2="25.5"/><polygon points="26.6,26.1 20.4,26.1 26.6,19.9" stroke="none"/></g><rect x="12.8" y="13.6" width="6.6" height="4.8" fill="#fff" stroke="#000" stroke-width="1.7"/></g></svg>
<svg style="left:1246.2px;top:147.6px" width="1074.3999999999999" height="909.8000000000001" viewBox="1246.2 147.6 1074.3999999999999 909.8000000000001"><defs><pattern id="zl" patternUnits="userSpaceOnUse" width="120" height="118" patternTransform="translate(1500 400) rotate(37.42)"><rect width="120" height="118" fill="#b9b9b9"/><path d="M0 2H120M0 11H120M0 20H120M0 24H120M0 33H120M0 42H120M0 45.5H120M0 49H120M0 58H120M0 67.5H120M0 77H120M0 81H120M0 90H120M0 99H120M0 102.5H120M0 106H120M0 114H120" stroke="#1c1c1c" stroke-width="0.95"/></pattern><pattern id="zl2" patternUnits="userSpaceOnUse" width="60" height="34" patternTransform="translate(1500 400) rotate(30)"><rect width="60" height="34" fill="#b9b9b9"/><path d="M0 3H60M0 11.5H60M0 20H60M0 28.5H60" stroke="#1c1c1c" stroke-width="0.95"/></pattern><pattern id="dots" patternUnits="userSpaceOnUse" width="3.2" height="3.2"><rect width="3.2" height="3.2" fill="#707070"/><rect width="1.6" height="1.6" fill="#202020"/></pattern><pattern id="dotsL" patternUnits="userSpaceOnUse" width="20" height="20" patternTransform="scale(5)"><rect width="20" height="20" fill="#7a7a7a"/></pattern></defs><polygon points="1638.9,682.4 1795.4,766.7 1957.0,895.6 1939.8,886.4 1826.3,816.5 1664.7,706.5" fill="#050c00" /><polygon points="1638.9,681.7 1661.3,651.5 1685.3,653.2 1740.4,692.8 1757.6,687.6 1809.1,728.9 1840.1,701.3 1860.7,677.3 1795.4,767.4" fill="#294f00" /><polygon points="1790.2,470.9 1797.1,462.7 1954.3,549.0 1795.4,767.4 1785.1,725.4 1895.1,577.6" fill="#294f00" /><polygon points="1575.5,342.2 1713.0,417.4 1790.2,469.5 1919.2,577.6 1920.9,591.3 1881.3,622.3 1874.5,642.9 1840.1,680.7 1836.6,697.9 1809.1,728.9 1757.6,687.6 1740.4,692.8 1685.3,653.2 1661.3,651.5 1654.4,655.0 1469.6,495.7 1466.5,480.0" fill="#b9b9b9" /><path d="M1644.0 394.9L1647.0 396.6L1645.0 399.6L1648.1 401.3L1646.0 404.3L1647.5 405.1L1645.5 408.1L1647.0 409.0L1643.1 414.7L1644.7 415.5L1642.6 418.5L1644.2 419.4L1642.1 422.4L1643.7 423.2L1642.6 424.8L1648.6 428.0L1649.6 426.5L1651.2 427.4L1653.3 424.4L1656.4 426.1L1658.5 423.1L1660.1 423.9L1662.0 421.1L1665.0 422.7L1667.0 419.9L1681.1 427.6L1679.2 430.4L1682.1 432.1L1680.2 434.9L1681.7 435.8L1679.7 438.8L1682.8 440.5L1680.7 443.5L1683.9 445.2L1682.8 446.8L1690.4 450.9L1691.4 449.3L1693.0 450.2L1695.1 447.2L1696.6 448.1L1700.7 442.2L1702.1 443.0L1704.0 440.1L1705.6 441.0L1709.7 435.0L1714.6 437.7L1710.5 443.7L1712.1 444.5L1710.1 447.4L1711.5 448.1L1707.5 454.0L1709.0 454.9L1707.0 457.9L1708.6 458.7L1707.5 460.3L1715.0 464.4L1716.1 462.8L1719.2 464.5L1721.3 461.5L1724.4 463.3L1726.5 460.3L1728.1 461.1L1730.1 458.3L1733.0 459.9L1735.0 457.1L1749.1 464.8L1747.2 467.6L1750.2 469.3L1748.2 472.1L1749.8 473.0L1747.7 476.0L1750.8 477.7L1748.8 480.7L1750.3 481.6L1749.3 483.1L1755.2 486.4L1756.3 484.8L1757.9 485.7L1759.9 482.7L1761.5 483.5L1763.6 480.5L1765.1 481.4L1769.1 475.7L1770.6 476.6L1772.7 473.6L1774.2 474.4L1776.3 471.4L1779.4 473.1L1781.5 470.1L1784.5 471.8L1782.5 474.8L1784.0 475.6L1782.0 478.6L1783.5 479.5L1781.5 482.5L1783.1 483.4L1781.1 486.2L1782.7 487.0L1780.7 489.9L1782.1 490.7L1771.6 506.0L1769.9 505.1L1767.4 508.7L1765.9 507.9L1763.9 510.7L1762.4 509.9L1760.1 513.1L1757.1 511.5L1755.1 514.4L1753.4 513.5L1751.4 516.3L1749.9 515.5L1747.9 518.4L1746.6 517.7L1741.4 525.2L1742.7 525.9L1735.8 536.0L1737.3 536.8L1732.3 544.0L1734.0 545.0L1729.3 551.8L1727.6 550.9L1722.9 557.7L1721.4 556.9L1714.9 566.3L1713.6 565.5L1707.4 574.5L1708.7 575.3L1706.7 578.1L1708.2 579.0L1706.2 581.8L1707.9 582.8L1705.7 586.0L1708.7 587.7L1706.7 590.5L1708.3 591.4L1706.3 594.2L1707.8 595.1L1705.8 597.9L1707.5 598.9L1696.5 614.8L1695.1 614.1L1693.1 616.9L1691.5 616.1L1689.6 618.9L1688.0 618.0L1685.9 621.0L1684.3 620.1L1682.3 623.1L1680.7 622.3L1678.6 625.3L1675.6 623.6L1677.6 620.6L1674.5 618.9L1676.6 615.9L1675.1 615.1L1677.2 612.1L1675.6 611.2L1679.5 605.5L1677.9 604.7L1680.0 601.7L1678.4 600.8L1680.5 597.8L1678.9 597.0L1680.0 595.4L1674.0 592.2L1673.0 593.7L1671.4 592.8L1669.3 595.8L1666.2 594.1L1664.1 597.1L1662.5 596.3L1660.6 599.1L1657.6 597.5L1655.6 600.3L1641.5 592.6L1643.4 589.8L1640.5 588.1L1642.4 585.3L1640.9 584.4L1642.9 581.4L1639.8 579.7L1641.9 576.7L1638.7 575.0L1639.8 573.4L1632.3 569.3L1631.2 570.9L1629.6 570.0L1627.5 573.0L1626.0 572.1L1621.9 578.0L1620.5 577.2L1618.6 580.0L1617.0 579.2L1612.9 585.2L1608.0 582.5L1612.1 576.5L1610.5 575.7L1612.5 572.8L1611.1 572.1L1615.1 566.2L1613.6 565.3L1615.6 562.3L1614.1 561.5L1615.1 559.9L1607.6 555.8L1606.5 557.4L1603.4 555.6L1601.3 558.6L1598.2 556.9L1596.1 559.9L1594.5 559.1L1592.6 561.9L1589.6 560.3L1587.6 563.1L1573.5 555.4L1575.4 552.6L1572.4 550.9L1574.4 548.1L1572.8 547.2L1574.9 544.2L1571.8 542.5L1573.8 539.5L1572.3 538.6L1573.3 537.1L1567.4 533.8L1566.3 535.4L1564.7 534.5L1562.7 537.5L1561.1 536.7L1559.0 539.7L1557.5 538.8L1553.5 544.5L1552.0 543.6L1549.9 546.6L1548.4 545.8L1546.3 548.8L1543.2 547.1L1541.1 550.1L1538.1 548.4L1538.1 548.4L1540.2 545.4L1537.0 543.6L1539.1 540.6L1537.5 539.7L1539.6 536.7L1538.0 535.9L1541.9 530.2L1540.4 529.4L1548.7 517.3L1550.2 518.2L1552.1 515.5L1553.6 516.4L1555.7 513.4L1557.3 514.2L1559.4 511.2L1560.9 512.1L1562.8 509.5L1565.7 511.1L1567.8 508.1L1569.6 509.0L1571.6 506.0L1573.0 506.8L1577.2 500.8L1575.8 500.0L1579.9 494.0L1578.2 493.0L1580.0 490.4L1578.6 489.6L1580.7 486.6L1579.1 485.7L1587.4 473.7L1588.9 474.7L1591.0 471.7L1592.4 472.4L1594.5 469.4L1596.3 470.4L1598.3 467.4L1599.7 468.1L1601.8 465.1L1603.4 466.0L1615.3 448.6L1613.8 447.8L1615.8 444.8L1614.3 443.9L1616.3 440.9L1614.8 440.0L1616.8 437.0L1613.9 435.4L1615.9 432.4L1614.4 431.6L1616.4 428.6L1614.8 427.7L1616.9 424.7L1615.3 423.8L1617.4 420.8L1615.8 420.0L1626.0 405.3L1627.5 406.1L1629.5 403.3L1631.1 404.1L1633.0 401.3L1634.6 402.2L1636.7 399.2L1638.3 400.1L1640.3 397.1L1641.9 397.9L1644.0 394.9Z" fill="#b9b9b9"/><path d="M1619.0 375.8L1622.0 377.5L1620.0 380.5L1623.1 382.2L1621.0 385.2L1622.5 386.0L1620.5 389.0L1622.0 389.9L1618.1 395.5L1619.7 396.4L1617.6 399.4L1619.2 400.3L1617.1 403.3L1618.7 404.1L1617.6 405.7L1623.6 408.9L1624.6 407.4L1626.2 408.2L1628.3 405.2L1631.4 406.9L1633.5 403.9L1635.1 404.8L1637.0 401.9L1640.0 403.6L1642.0 400.8L1656.1 408.5L1654.2 411.3L1657.1 412.9L1655.2 415.8L1656.7 416.7L1654.7 419.7L1657.8 421.4L1655.7 424.4L1658.9 426.1L1657.8 427.6L1665.4 431.8L1666.4 430.2L1668.0 431.1L1670.1 428.1L1671.6 428.9L1675.7 423.1L1677.1 423.8L1679.0 421.0L1680.6 421.9L1684.7 415.9L1689.6 418.6L1685.5 424.6L1687.1 425.4L1685.1 428.2L1686.5 429.0L1682.5 434.9L1684.0 435.7L1682.0 438.7L1683.6 439.6L1682.5 441.1L1690.0 445.2L1691.1 443.7L1694.2 445.4L1696.3 442.4L1699.4 444.1L1701.5 441.1L1703.1 442.0L1705.1 439.1L1708.0 440.8L1710.0 438.0L1724.1 445.7L1722.2 448.5L1725.2 450.1L1723.2 453.0L1724.8 453.9L1722.7 456.9L1725.8 458.6L1723.8 461.6L1725.3 462.4L1724.3 464.0L1730.2 467.2L1731.3 465.7L1732.9 466.6L1734.9 463.6L1736.5 464.4L1738.6 461.4L1740.1 462.3L1744.1 456.6L1745.6 457.5L1747.7 454.5L1749.2 455.3L1751.3 452.3L1754.4 454.0L1756.5 451.0L1759.5 452.7L1757.5 455.7L1759.0 456.5L1757.0 459.5L1758.5 460.4L1756.5 463.4L1758.1 464.2L1756.1 467.1L1757.7 467.9L1755.7 470.8L1757.1 471.6L1746.6 486.9L1744.9 486.0L1742.4 489.6L1740.9 488.7L1738.9 491.6L1737.4 490.8L1735.1 494.0L1732.1 492.4L1730.1 495.3L1728.4 494.3L1726.4 497.2L1724.9 496.4L1722.9 499.3L1721.6 498.5L1716.4 506.1L1717.7 506.8L1710.8 516.9L1712.3 517.7L1707.3 524.9L1709.0 525.8L1704.3 532.7L1702.6 531.8L1697.9 538.6L1696.4 537.8L1689.9 547.1L1688.6 546.4L1682.4 555.4L1683.7 556.1L1681.7 559.0L1683.2 559.8L1681.2 562.7L1682.9 563.7L1680.7 566.9L1683.7 568.5L1681.7 571.4L1683.3 572.2L1681.3 575.1L1682.8 576.0L1680.8 578.8L1682.5 579.7L1671.5 595.7L1670.1 594.9L1668.1 597.8L1666.5 596.9L1664.6 599.7L1663.0 598.9L1660.9 601.9L1659.3 601.0L1657.3 604.0L1655.7 603.2L1653.6 606.2L1650.6 604.5L1652.6 601.5L1649.5 599.8L1651.6 596.8L1650.1 596.0L1652.2 593.0L1650.6 592.1L1654.5 586.4L1652.9 585.6L1655.0 582.6L1653.4 581.7L1655.5 578.7L1653.9 577.8L1655.0 576.3L1649.0 573.0L1648.0 574.6L1646.4 573.7L1644.3 576.7L1641.2 575.0L1639.1 578.0L1637.5 577.1L1635.6 580.0L1632.6 578.4L1630.6 581.2L1616.5 573.5L1618.4 570.6L1615.5 569.0L1617.4 566.1L1615.9 565.3L1617.9 562.3L1614.8 560.6L1616.9 557.6L1613.7 555.8L1614.8 554.3L1607.3 550.2L1606.2 551.7L1604.6 550.9L1602.5 553.9L1601.0 553.0L1596.9 558.9L1595.5 558.1L1593.6 560.9L1592.0 560.1L1587.9 566.1L1583.0 563.4L1587.1 557.4L1585.5 556.5L1587.5 553.7L1586.1 552.9L1590.1 547.1L1588.6 546.2L1590.6 543.2L1589.1 542.4L1590.1 540.8L1582.6 536.7L1581.5 538.2L1578.4 536.5L1576.3 539.5L1573.2 537.8L1571.1 540.8L1569.5 539.9L1567.6 542.8L1564.6 541.2L1562.6 544.0L1548.5 536.3L1550.4 533.4L1547.4 531.8L1549.4 528.9L1547.8 528.1L1549.9 525.1L1546.8 523.4L1548.8 520.4L1547.3 519.5L1548.3 518.0L1542.4 514.7L1541.3 516.2L1539.7 515.4L1537.7 518.4L1536.1 517.5L1534.0 520.5L1532.5 519.7L1528.5 525.4L1527.0 524.5L1524.9 527.5L1523.4 526.7L1521.3 529.7L1518.2 528.0L1516.1 531.0L1513.1 529.3L1513.1 529.2L1515.2 526.2L1512.0 524.5L1514.1 521.5L1512.5 520.6L1514.6 517.6L1513.0 516.8L1516.9 511.1L1515.4 510.2L1523.7 498.2L1525.2 499.1L1527.1 496.4L1528.6 497.3L1530.7 494.3L1532.3 495.1L1534.4 492.1L1535.9 493.0L1537.8 490.3L1540.7 491.9L1542.8 489.0L1544.6 489.9L1546.6 486.9L1548.0 487.7L1552.2 481.7L1550.8 480.9L1554.9 474.9L1553.2 473.9L1555.0 471.2L1553.6 470.5L1555.7 467.5L1554.1 466.6L1562.4 454.6L1563.9 455.5L1566.0 452.5L1567.4 453.3L1569.5 450.3L1571.3 451.2L1573.3 448.2L1574.7 449.0L1576.8 446.0L1578.4 446.9L1590.3 429.5L1588.8 428.7L1590.8 425.6L1589.3 424.8L1591.3 421.8L1589.8 420.9L1591.8 417.9L1588.9 416.3L1590.9 413.3L1589.4 412.4L1591.4 409.4L1589.8 408.6L1591.9 405.6L1590.3 404.7L1592.4 401.7L1590.8 400.8L1601.0 386.2L1602.5 387.0L1604.5 384.2L1606.1 385.0L1608.0 382.2L1609.6 383.1L1611.7 380.1L1613.3 380.9L1615.3 377.9L1616.9 378.8L1619.0 375.8Z" fill="#b9b9b9"/><path d="M1596.0 358.2L1599.0 359.9L1597.0 362.9L1600.1 364.6L1598.0 367.6L1599.5 368.4L1597.5 371.4L1599.0 372.3L1595.1 377.9L1596.7 378.8L1594.6 381.8L1596.2 382.7L1594.1 385.7L1595.7 386.5L1594.6 388.1L1600.6 391.3L1601.6 389.8L1603.2 390.6L1605.3 387.6L1608.4 389.4L1610.5 386.4L1612.1 387.2L1614.0 384.3L1617.0 386.0L1619.0 383.2L1633.1 390.9L1631.2 393.7L1634.1 395.3L1632.2 398.2L1633.7 399.1L1631.7 402.1L1634.8 403.8L1632.7 406.8L1635.9 408.5L1634.8 410.0L1642.4 414.2L1643.4 412.6L1645.0 413.5L1647.1 410.5L1648.6 411.3L1652.7 405.5L1654.1 406.2L1656.0 403.4L1657.6 404.3L1661.7 398.3L1666.6 401.0L1662.5 407.0L1664.1 407.8L1662.1 410.6L1663.5 411.4L1659.5 417.3L1661.0 418.1L1659.0 421.1L1660.6 422.0L1659.5 423.5L1667.0 427.7L1668.1 426.1L1671.2 427.8L1673.3 424.8L1676.4 426.5L1678.5 423.5L1680.1 424.4L1682.1 421.5L1685.0 423.2L1687.0 420.4L1701.1 428.1L1699.2 430.9L1702.2 432.5L1700.2 435.4L1701.8 436.3L1699.7 439.3L1702.8 441.0L1700.8 444.0L1702.3 444.8L1701.3 446.4L1707.2 449.6L1708.3 448.1L1709.9 449.0L1711.9 446.0L1713.5 446.8L1715.6 443.8L1717.1 444.7L1721.1 439.0L1722.6 439.9L1724.7 436.9L1726.2 437.7L1728.3 434.7L1731.4 436.4L1733.5 433.4L1736.5 435.1L1734.5 438.1L1736.0 438.9L1734.0 441.9L1735.5 442.8L1733.5 445.8L1735.1 446.7L1733.1 449.5L1734.7 450.3L1732.7 453.2L1734.1 454.0L1723.6 469.3L1721.9 468.4L1719.4 472.0L1717.9 471.1L1715.9 474.0L1714.4 473.2L1712.1 476.4L1709.1 474.8L1707.1 477.7L1705.4 476.7L1703.4 479.6L1701.9 478.8L1699.9 481.7L1698.6 480.9L1693.4 488.5L1694.7 489.2L1687.8 499.3L1689.3 500.1L1684.3 507.3L1686.0 508.3L1681.3 515.1L1679.6 514.2L1674.9 521.0L1673.4 520.2L1666.9 529.5L1665.6 528.8L1659.4 537.8L1660.7 538.5L1658.7 541.4L1660.2 542.2L1658.2 545.1L1659.9 546.1L1657.7 549.3L1660.7 550.9L1658.7 553.8L1660.3 554.6L1658.3 557.5L1659.8 558.4L1657.8 561.2L1659.5 562.2L1648.5 578.1L1647.1 577.3L1645.1 580.2L1643.5 579.3L1641.6 582.2L1640.0 581.3L1637.9 584.3L1636.3 583.4L1634.3 586.4L1632.7 585.6L1630.6 588.6L1627.6 586.9L1629.6 583.9L1626.5 582.2L1628.6 579.2L1627.1 578.4L1629.2 575.4L1627.6 574.5L1631.5 568.8L1629.9 568.0L1632.0 565.0L1630.4 564.1L1632.5 561.1L1630.9 560.2L1632.0 558.7L1626.0 555.4L1625.0 557.0L1623.4 556.1L1621.3 559.1L1618.2 557.4L1616.1 560.4L1614.5 559.5L1612.6 562.4L1609.6 560.8L1607.6 563.6L1593.5 555.9L1595.4 553.0L1592.5 551.4L1594.4 548.5L1592.9 547.7L1594.9 544.7L1591.8 543.0L1593.9 540.0L1590.7 538.2L1591.8 536.7L1584.3 532.6L1583.2 534.1L1581.6 533.3L1579.5 536.3L1578.0 535.4L1573.9 541.3L1572.5 540.5L1570.6 543.3L1569.0 542.5L1564.9 548.5L1560.0 545.8L1564.1 539.8L1562.5 538.9L1564.5 536.1L1563.1 535.3L1567.1 529.5L1565.6 528.6L1567.6 525.6L1566.1 524.8L1567.1 523.2L1559.6 519.1L1558.5 520.6L1555.4 518.9L1553.3 521.9L1550.2 520.2L1548.1 523.2L1546.5 522.3L1544.6 525.2L1541.6 523.6L1539.6 526.4L1525.5 518.7L1527.4 515.8L1524.4 514.2L1526.4 511.3L1524.8 510.5L1526.9 507.5L1523.8 505.8L1525.8 502.8L1524.3 501.9L1525.3 500.4L1519.4 497.1L1518.3 498.7L1516.7 497.8L1514.7 500.8L1513.1 499.9L1511.0 502.9L1509.5 502.1L1505.5 507.8L1504.0 506.9L1501.9 509.9L1500.4 509.1L1498.3 512.1L1495.2 510.4L1493.1 513.4L1490.1 511.7L1490.1 511.6L1492.2 508.6L1489.0 506.9L1491.1 503.9L1489.5 503.0L1491.6 500.0L1490.0 499.2L1493.9 493.5L1492.4 492.7L1500.7 480.6L1502.2 481.5L1504.1 478.8L1505.6 479.7L1507.7 476.7L1509.3 477.5L1511.4 474.5L1512.9 475.4L1514.8 472.7L1517.7 474.4L1519.8 471.4L1521.6 472.3L1523.6 469.3L1525.0 470.1L1529.2 464.1L1527.8 463.3L1531.9 457.3L1530.2 456.3L1532.0 453.6L1530.6 452.9L1532.7 449.9L1531.1 449.0L1539.4 437.0L1540.9 437.9L1543.0 434.9L1544.4 435.7L1546.5 432.7L1548.3 433.6L1550.3 430.6L1551.7 431.4L1553.8 428.4L1555.4 429.3L1567.3 411.9L1565.8 411.1L1567.8 408.0L1566.3 407.2L1568.3 404.2L1566.8 403.3L1568.8 400.3L1565.9 398.7L1567.9 395.7L1566.4 394.8L1568.4 391.8L1566.8 391.0L1568.9 388.0L1567.3 387.1L1569.4 384.1L1567.8 383.2L1578.0 368.6L1579.5 369.4L1581.5 366.6L1583.1 367.4L1585.0 364.6L1586.6 365.5L1588.7 362.5L1590.3 363.3L1592.3 360.3L1593.9 361.2L1596.0 358.2Z" fill="#b9b9b9"/><path d="M1582.0 347.5L1585.0 349.2L1583.0 352.2L1586.1 353.9L1584.0 356.9L1585.5 357.7L1583.5 360.7L1585.0 361.5L1581.1 367.2L1582.7 368.1L1580.6 371.1L1582.2 371.9L1580.1 374.9L1581.7 375.8L1580.6 377.3L1586.6 380.6L1587.6 379.1L1589.2 379.9L1591.3 376.9L1594.4 378.6L1596.5 375.6L1598.1 376.5L1600.0 373.6L1603.0 375.3L1605.0 372.4L1619.1 380.2L1617.2 383.0L1620.1 384.6L1618.2 387.5L1619.7 388.4L1617.7 391.4L1620.8 393.1L1618.7 396.1L1621.9 397.8L1620.8 399.3L1628.4 403.5L1629.4 401.9L1631.0 402.8L1633.1 399.8L1634.6 400.6L1638.7 394.8L1640.1 395.5L1642.0 392.7L1643.6 393.6L1647.7 387.6L1652.6 390.3L1648.5 396.3L1650.1 397.1L1648.1 399.9L1649.5 400.7L1645.5 406.6L1647.0 407.4L1645.0 410.4L1646.6 411.3L1645.5 412.8L1653.0 416.9L1654.1 415.4L1657.2 417.1L1659.3 414.1L1662.4 415.8L1664.5 412.8L1666.1 413.7L1668.1 410.8L1671.0 412.5L1673.0 409.6L1687.1 417.4L1685.2 420.2L1688.2 421.8L1686.2 424.7L1687.8 425.6L1685.7 428.6L1688.8 430.3L1686.8 433.3L1688.3 434.1L1687.3 435.7L1693.2 438.9L1694.3 437.4L1695.9 438.3L1697.9 435.3L1699.5 436.1L1701.6 433.1L1703.1 434.0L1707.1 428.3L1708.6 429.1L1710.7 426.1L1712.2 427.0L1714.3 424.0L1717.4 425.7L1719.5 422.7L1722.5 424.4L1720.5 427.4L1722.0 428.2L1720.0 431.2L1721.5 432.1L1719.5 435.1L1721.1 435.9L1719.1 438.8L1720.7 439.6L1718.7 442.5L1720.1 443.3L1709.6 458.6L1707.9 457.6L1705.4 461.3L1703.9 460.4L1701.9 463.3L1700.4 462.5L1698.1 465.7L1695.1 464.1L1693.1 467.0L1691.4 466.0L1689.4 468.9L1687.9 468.1L1685.9 471.0L1684.6 470.2L1679.4 477.8L1680.7 478.5L1673.8 488.6L1675.3 489.4L1670.3 496.6L1672.0 497.5L1667.3 504.4L1665.6 503.5L1660.9 510.3L1659.4 509.5L1652.9 518.8L1651.6 518.1L1645.4 527.1L1646.7 527.8L1644.7 530.7L1646.2 531.5L1644.2 534.4L1645.9 535.3L1643.7 538.6L1646.7 540.2L1644.7 543.1L1646.3 543.9L1644.3 546.8L1645.8 547.6L1643.8 550.5L1645.5 551.4L1634.5 567.4L1633.1 566.6L1631.1 569.5L1629.5 568.6L1627.6 571.4L1626.0 570.6L1623.9 573.6L1622.3 572.7L1620.3 575.7L1618.7 574.9L1616.6 577.9L1613.6 576.2L1615.6 573.2L1612.5 571.5L1614.6 568.5L1613.1 567.7L1615.2 564.7L1613.6 563.8L1617.5 558.1L1615.9 557.3L1618.0 554.3L1616.4 553.4L1618.5 550.4L1616.9 549.5L1618.0 548.0L1612.0 544.7L1611.0 546.3L1609.4 545.4L1607.3 548.4L1604.2 546.7L1602.1 549.7L1600.5 548.8L1598.6 551.7L1595.6 550.1L1593.6 552.9L1579.5 545.1L1581.4 542.3L1578.5 540.7L1580.4 537.8L1578.9 537.0L1580.9 534.0L1577.8 532.3L1579.9 529.3L1576.7 527.5L1577.8 526.0L1570.3 521.9L1569.2 523.4L1567.6 522.6L1565.5 525.6L1564.0 524.7L1559.9 530.6L1558.5 529.8L1556.6 532.6L1555.0 531.8L1550.9 537.8L1546.0 535.1L1550.1 529.1L1548.5 528.2L1550.5 525.4L1549.1 524.6L1553.1 518.8L1551.6 517.9L1553.6 514.9L1552.1 514.1L1553.1 512.5L1545.6 508.4L1544.5 509.9L1541.4 508.2L1539.3 511.2L1536.2 509.5L1534.1 512.5L1532.5 511.6L1530.6 514.5L1527.6 512.9L1525.6 515.7L1511.5 507.9L1513.4 505.1L1510.4 503.5L1512.4 500.6L1510.8 499.8L1512.9 496.8L1509.8 495.1L1511.8 492.1L1510.3 491.2L1511.3 489.7L1505.4 486.4L1504.3 487.9L1502.7 487.1L1500.7 490.1L1499.1 489.2L1497.0 492.2L1495.5 491.4L1491.5 497.0L1490.0 496.2L1487.9 499.2L1486.4 498.4L1484.3 501.4L1481.2 499.7L1479.1 502.7L1476.1 501.0L1476.1 500.9L1478.2 497.9L1475.0 496.2L1477.1 493.2L1475.5 492.3L1477.6 489.3L1476.0 488.5L1479.9 482.8L1478.4 481.9L1486.7 469.9L1488.2 470.8L1490.1 468.1L1491.6 469.0L1493.7 466.0L1495.3 466.8L1497.4 463.8L1498.9 464.7L1500.8 462.0L1503.7 463.6L1505.8 460.6L1507.6 461.6L1509.6 458.6L1511.0 459.4L1515.2 453.3L1513.8 452.6L1517.9 446.6L1516.2 445.6L1518.0 442.9L1516.6 442.2L1518.7 439.2L1517.1 438.3L1525.4 426.3L1526.9 427.2L1529.0 424.2L1530.4 425.0L1532.5 422.0L1534.3 422.9L1536.3 419.9L1537.7 420.7L1539.8 417.7L1541.4 418.6L1553.3 401.2L1551.8 400.4L1553.8 397.3L1552.3 396.5L1554.3 393.5L1552.8 392.6L1554.8 389.6L1551.9 388.0L1553.9 385.0L1552.4 384.1L1554.4 381.1L1552.8 380.3L1554.9 377.3L1553.3 376.4L1555.4 373.4L1553.8 372.5L1564.0 357.9L1565.5 358.7L1567.5 355.8L1569.1 356.7L1571.0 353.9L1572.6 354.8L1574.7 351.8L1576.3 352.6L1578.3 349.6L1579.9 350.5L1582.0 347.5Z" fill="#b9b9b9"/><defs><clipPath id="bclip"><path d="M1575.5 342.2L1713.0 417.4L1790.2 469.5L1919.2 577.6L1920.9 591.3L1881.3 622.3L1874.5 642.9L1840.1 680.7L1836.6 697.9L1809.1 728.9L1757.6 687.6L1740.4 692.8L1685.3 653.2L1661.3 651.5L1654.4 655.0L1469.6 495.7L1466.5 480.0ZM1644.0 394.9L1647.0 396.6L1645.0 399.6L1648.1 401.3L1646.0 404.3L1647.5 405.1L1645.5 408.1L1647.0 409.0L1643.1 414.7L1644.7 415.5L1642.6 418.5L1644.2 419.4L1642.1 422.4L1643.7 423.2L1642.6 424.8L1648.6 428.0L1649.6 426.5L1651.2 427.4L1653.3 424.4L1656.4 426.1L1658.5 423.1L1660.1 423.9L1662.0 421.1L1665.0 422.7L1667.0 419.9L1681.1 427.6L1679.2 430.4L1682.1 432.1L1680.2 434.9L1681.7 435.8L1679.7 438.8L1682.8 440.5L1680.7 443.5L1683.9 445.2L1682.8 446.8L1690.4 450.9L1691.4 449.3L1693.0 450.2L1695.1 447.2L1696.6 448.1L1700.7 442.2L1702.1 443.0L1704.0 440.1L1705.6 441.0L1709.7 435.0L1714.6 437.7L1710.5 443.7L1712.1 444.5L1710.1 447.4L1711.5 448.1L1707.5 454.0L1709.0 454.9L1707.0 457.9L1708.6 458.7L1707.5 460.3L1715.0 464.4L1716.1 462.8L1719.2 464.5L1721.3 461.5L1724.4 463.3L1726.5 460.3L1728.1 461.1L1730.1 458.3L1733.0 459.9L1735.0 457.1L1749.1 464.8L1747.2 467.6L1750.2 469.3L1748.2 472.1L1749.8 473.0L1747.7 476.0L1750.8 477.7L1748.8 480.7L1750.3 481.6L1749.3 483.1L1755.2 486.4L1756.3 484.8L1757.9 485.7L1759.9 482.7L1761.5 483.5L1763.6 480.5L1765.1 481.4L1769.1 475.7L1770.6 476.6L1772.7 473.6L1774.2 474.4L1776.3 471.4L1779.4 473.1L1781.5 470.1L1784.5 471.8L1782.5 474.8L1784.0 475.6L1782.0 478.6L1783.5 479.5L1781.5 482.5L1783.1 483.4L1781.1 486.2L1782.7 487.0L1780.7 489.9L1782.1 490.7L1771.6 506.0L1769.9 505.1L1767.4 508.7L1765.9 507.9L1763.9 510.7L1762.4 509.9L1760.1 513.1L1757.1 511.5L1755.1 514.4L1753.4 513.5L1751.4 516.3L1749.9 515.5L1747.9 518.4L1746.6 517.7L1741.4 525.2L1742.7 525.9L1735.8 536.0L1737.3 536.8L1732.3 544.0L1734.0 545.0L1729.3 551.8L1727.6 550.9L1722.9 557.7L1721.4 556.9L1714.9 566.3L1713.6 565.5L1707.4 574.5L1708.7 575.3L1706.7 578.1L1708.2 579.0L1706.2 581.8L1707.9 582.8L1705.7 586.0L1708.7 587.7L1706.7 590.5L1708.3 591.4L1706.3 594.2L1707.8 595.1L1705.8 597.9L1707.5 598.9L1696.5 614.8L1695.1 614.1L1693.1 616.9L1691.5 616.1L1689.6 618.9L1688.0 618.0L1685.9 621.0L1684.3 620.1L1682.3 623.1L1680.7 622.3L1678.6 625.3L1675.6 623.6L1677.6 620.6L1674.5 618.9L1676.6 615.9L1675.1 615.1L1677.2 612.1L1675.6 611.2L1679.5 605.5L1677.9 604.7L1680.0 601.7L1678.4 600.8L1680.5 597.8L1678.9 597.0L1680.0 595.4L1674.0 592.2L1673.0 593.7L1671.4 592.8L1669.3 595.8L1666.2 594.1L1664.1 597.1L1662.5 596.3L1660.6 599.1L1657.6 597.5L1655.6 600.3L1641.5 592.6L1643.4 589.8L1640.5 588.1L1642.4 585.3L1640.9 584.4L1642.9 581.4L1639.8 579.7L1641.9 576.7L1638.7 575.0L1639.8 573.4L1632.3 569.3L1631.2 570.9L1629.6 570.0L1627.5 573.0L1626.0 572.1L1621.9 578.0L1620.5 577.2L1618.6 580.0L1617.0 579.2L1612.9 585.2L1608.0 582.5L1612.1 576.5L1610.5 575.7L1612.5 572.8L1611.1 572.1L1615.1 566.2L1613.6 565.3L1615.6 562.3L1614.1 561.5L1615.1 559.9L1607.6 555.8L1606.5 557.4L1603.4 555.6L1601.3 558.6L1598.2 556.9L1596.1 559.9L1594.5 559.1L1592.6 561.9L1589.6 560.3L1587.6 563.1L1573.5 555.4L1575.4 552.6L1572.4 550.9L1574.4 548.1L1572.8 547.2L1574.9 544.2L1571.8 542.5L1573.8 539.5L1572.3 538.6L1573.3 537.1L1567.4 533.8L1566.3 535.4L1564.7 534.5L1562.7 537.5L1561.1 536.7L1559.0 539.7L1557.5 538.8L1553.5 544.5L1552.0 543.6L1549.9 546.6L1548.4 545.8L1546.3 548.8L1543.2 547.1L1541.1 550.1L1538.1 548.4L1538.1 548.4L1540.2 545.4L1537.0 543.6L1539.1 540.6L1537.5 539.7L1539.6 536.7L1538.0 535.9L1541.9 530.2L1540.4 529.4L1548.7 517.3L1550.2 518.2L1552.1 515.5L1553.6 516.4L1555.7 513.4L1557.3 514.2L1559.4 511.2L1560.9 512.1L1562.8 509.5L1565.7 511.1L1567.8 508.1L1569.6 509.0L1571.6 506.0L1573.0 506.8L1577.2 500.8L1575.8 500.0L1579.9 494.0L1578.2 493.0L1580.0 490.4L1578.6 489.6L1580.7 486.6L1579.1 485.7L1587.4 473.7L1588.9 474.7L1591.0 471.7L1592.4 472.4L1594.5 469.4L1596.3 470.4L1598.3 467.4L1599.7 468.1L1601.8 465.1L1603.4 466.0L1615.3 448.6L1613.8 447.8L1615.8 444.8L1614.3 443.9L1616.3 440.9L1614.8 440.0L1616.8 437.0L1613.9 435.4L1615.9 432.4L1614.4 431.6L1616.4 428.6L1614.8 427.7L1616.9 424.7L1615.3 423.8L1617.4 420.8L1615.8 420.0L1626.0 405.3L1627.5 406.1L1629.5 403.3L1631.1 404.1L1633.0 401.3L1634.6 402.2L1636.7 399.2L1638.3 400.1L1640.3 397.1L1641.9 397.9L1644.0 394.9ZM1619.0 375.8L1622.0 377.5L1620.0 380.5L1623.1 382.2L1621.0 385.2L1622.5 386.0L1620.5 389.0L1622.0 389.9L1618.1 395.5L1619.7 396.4L1617.6 399.4L1619.2 400.3L1617.1 403.3L1618.7 404.1L1617.6 405.7L1623.6 408.9L1624.6 407.4L1626.2 408.2L1628.3 405.2L1631.4 406.9L1633.5 403.9L1635.1 404.8L1637.0 401.9L1640.0 403.6L1642.0 400.8L1656.1 408.5L1654.2 411.3L1657.1 412.9L1655.2 415.8L1656.7 416.7L1654.7 419.7L1657.8 421.4L1655.7 424.4L1658.9 426.1L1657.8 427.6L1665.4 431.8L1666.4 430.2L1668.0 431.1L1670.1 428.1L1671.6 428.9L1675.7 423.1L1677.1 423.8L1679.0 421.0L1680.6 421.9L1684.7 415.9L1689.6 418.6L1685.5 424.6L1687.1 425.4L1685.1 428.2L1686.5 429.0L1682.5 434.9L1684.0 435.7L1682.0 438.7L1683.6 439.6L1682.5 441.1L1690.0 445.2L1691.1 443.7L1694.2 445.4L1696.3 442.4L1699.4 444.1L1701.5 441.1L1703.1 442.0L1705.1 439.1L1708.0 440.8L1710.0 438.0L1724.1 445.7L1722.2 448.5L1725.2 450.1L1723.2 453.0L1724.8 453.9L1722.7 456.9L1725.8 458.6L1723.8 461.6L1725.3 462.4L1724.3 464.0L1730.2 467.2L1731.3 465.7L1732.9 466.6L1734.9 463.6L1736.5 464.4L1738.6 461.4L1740.1 462.3L1744.1 456.6L1745.6 457.5L1747.7 454.5L1749.2 455.3L1751.3 452.3L1754.4 454.0L1756.5 451.0L1759.5 452.7L1757.5 455.7L1759.0 456.5L1757.0 459.5L1758.5 460.4L1756.5 463.4L1758.1 464.2L1756.1 467.1L1757.7 467.9L1755.7 470.8L1757.1 471.6L1746.6 486.9L1744.9 486.0L1742.4 489.6L1740.9 488.7L1738.9 491.6L1737.4 490.8L1735.1 494.0L1732.1 492.4L1730.1 495.3L1728.4 494.3L1726.4 497.2L1724.9 496.4L1722.9 499.3L1721.6 498.5L1716.4 506.1L1717.7 506.8L1710.8 516.9L1712.3 517.7L1707.3 524.9L1709.0 525.8L1704.3 532.7L1702.6 531.8L1697.9 538.6L1696.4 537.8L1689.9 547.1L1688.6 546.4L1682.4 555.4L1683.7 556.1L1681.7 559.0L1683.2 559.8L1681.2 562.7L1682.9 563.7L1680.7 566.9L1683.7 568.5L1681.7 571.4L1683.3 572.2L1681.3 575.1L1682.8 576.0L1680.8 578.8L1682.5 579.7L1671.5 595.7L1670.1 594.9L1668.1 597.8L1666.5 596.9L1664.6 599.7L1663.0 598.9L1660.9 601.9L1659.3 601.0L1657.3 604.0L1655.7 603.2L1653.6 606.2L1650.6 604.5L1652.6 601.5L1649.5 599.8L1651.6 596.8L1650.1 596.0L1652.2 593.0L1650.6 592.1L1654.5 586.4L1652.9 585.6L1655.0 582.6L1653.4 581.7L1655.5 578.7L1653.9 577.8L1655.0 576.3L1649.0 573.0L1648.0 574.6L1646.4 573.7L1644.3 576.7L1641.2 575.0L1639.1 578.0L1637.5 577.1L1635.6 580.0L1632.6 578.4L1630.6 581.2L1616.5 573.5L1618.4 570.6L1615.5 569.0L1617.4 566.1L1615.9 565.3L1617.9 562.3L1614.8 560.6L1616.9 557.6L1613.7 555.8L1614.8 554.3L1607.3 550.2L1606.2 551.7L1604.6 550.9L1602.5 553.9L1601.0 553.0L1596.9 558.9L1595.5 558.1L1593.6 560.9L1592.0 560.1L1587.9 566.1L1583.0 563.4L1587.1 557.4L1585.5 556.5L1587.5 553.7L1586.1 552.9L1590.1 547.1L1588.6 546.2L1590.6 543.2L1589.1 542.4L1590.1 540.8L1582.6 536.7L1581.5 538.2L1578.4 536.5L1576.3 539.5L1573.2 537.8L1571.1 540.8L1569.5 539.9L1567.6 542.8L1564.6 541.2L1562.6 544.0L1548.5 536.3L1550.4 533.4L1547.4 531.8L1549.4 528.9L1547.8 528.1L1549.9 525.1L1546.8 523.4L1548.8 520.4L1547.3 519.5L1548.3 518.0L1542.4 514.7L1541.3 516.2L1539.7 515.4L1537.7 518.4L1536.1 517.5L1534.0 520.5L1532.5 519.7L1528.5 525.4L1527.0 524.5L1524.9 527.5L1523.4 526.7L1521.3 529.7L1518.2 528.0L1516.1 531.0L1513.1 529.3L1513.1 529.2L1515.2 526.2L1512.0 524.5L1514.1 521.5L1512.5 520.6L1514.6 517.6L1513.0 516.8L1516.9 511.1L1515.4 510.2L1523.7 498.2L1525.2 499.1L1527.1 496.4L1528.6 497.3L1530.7 494.3L1532.3 495.1L1534.4 492.1L1535.9 493.0L1537.8 490.3L1540.7 491.9L1542.8 489.0L1544.6 489.9L1546.6 486.9L1548.0 487.7L1552.2 481.7L1550.8 480.9L1554.9 474.9L1553.2 473.9L1555.0 471.2L1553.6 470.5L1555.7 467.5L1554.1 466.6L1562.4 454.6L1563.9 455.5L1566.0 452.5L1567.4 453.3L1569.5 450.3L1571.3 451.2L1573.3 448.2L1574.7 449.0L1576.8 446.0L1578.4 446.9L1590.3 429.5L1588.8 428.7L1590.8 425.6L1589.3 424.8L1591.3 421.8L1589.8 420.9L1591.8 417.9L1588.9 416.3L1590.9 413.3L1589.4 412.4L1591.4 409.4L1589.8 408.6L1591.9 405.6L1590.3 404.7L1592.4 401.7L1590.8 400.8L1601.0 386.2L1602.5 387.0L1604.5 384.2L1606.1 385.0L1608.0 382.2L1609.6 383.1L1611.7 380.1L1613.3 380.9L1615.3 377.9L1616.9 378.8L1619.0 375.8ZM1596.0 358.2L1599.0 359.9L1597.0 362.9L1600.1 364.6L1598.0 367.6L1599.5 368.4L1597.5 371.4L1599.0 372.3L1595.1 377.9L1596.7 378.8L1594.6 381.8L1596.2 382.7L1594.1 385.7L1595.7 386.5L1594.6 388.1L1600.6 391.3L1601.6 389.8L1603.2 390.6L1605.3 387.6L1608.4 389.4L1610.5 386.4L1612.1 387.2L1614.0 384.3L1617.0 386.0L1619.0 383.2L1633.1 390.9L1631.2 393.7L1634.1 395.3L1632.2 398.2L1633.7 399.1L1631.7 402.1L1634.8 403.8L1632.7 406.8L1635.9 408.5L1634.8 410.0L1642.4 414.2L1643.4 412.6L1645.0 413.5L1647.1 410.5L1648.6 411.3L1652.7 405.5L1654.1 406.2L1656.0 403.4L1657.6 404.3L1661.7 398.3L1666.6 401.0L1662.5 407.0L1664.1 407.8L1662.1 410.6L1663.5 411.4L1659.5 417.3L1661.0 418.1L1659.0 421.1L1660.6 422.0L1659.5 423.5L1667.0 427.7L1668.1 426.1L1671.2 427.8L1673.3 424.8L1676.4 426.5L1678.5 423.5L1680.1 424.4L1682.1 421.5L1685.0 423.2L1687.0 420.4L1701.1 428.1L1699.2 430.9L1702.2 432.5L1700.2 435.4L1701.8 436.3L1699.7 439.3L1702.8 441.0L1700.8 444.0L1702.3 444.8L1701.3 446.4L1707.2 449.6L1708.3 448.1L1709.9 449.0L1711.9 446.0L1713.5 446.8L1715.6 443.8L1717.1 444.7L1721.1 439.0L1722.6 439.9L1724.7 436.9L1726.2 437.7L1728.3 434.7L1731.4 436.4L1733.5 433.4L1736.5 435.1L1734.5 438.1L1736.0 438.9L1734.0 441.9L1735.5 442.8L1733.5 445.8L1735.1 446.7L1733.1 449.5L1734.7 450.3L1732.7 453.2L1734.1 454.0L1723.6 469.3L1721.9 468.4L1719.4 472.0L1717.9 471.1L1715.9 474.0L1714.4 473.2L1712.1 476.4L1709.1 474.8L1707.1 477.7L1705.4 476.7L1703.4 479.6L1701.9 478.8L1699.9 481.7L1698.6 480.9L1693.4 488.5L1694.7 489.2L1687.8 499.3L1689.3 500.1L1684.3 507.3L1686.0 508.3L1681.3 515.1L1679.6 514.2L1674.9 521.0L1673.4 520.2L1666.9 529.5L1665.6 528.8L1659.4 537.8L1660.7 538.5L1658.7 541.4L1660.2 542.2L1658.2 545.1L1659.9 546.1L1657.7 549.3L1660.7 550.9L1658.7 553.8L1660.3 554.6L1658.3 557.5L1659.8 558.4L1657.8 561.2L1659.5 562.2L1648.5 578.1L1647.1 577.3L1645.1 580.2L1643.5 579.3L1641.6 582.2L1640.0 581.3L1637.9 584.3L1636.3 583.4L1634.3 586.4L1632.7 585.6L1630.6 588.6L1627.6 586.9L1629.6 583.9L1626.5 582.2L1628.6 579.2L1627.1 578.4L1629.2 575.4L1627.6 574.5L1631.5 568.8L1629.9 568.0L1632.0 565.0L1630.4 564.1L1632.5 561.1L1630.9 560.2L1632.0 558.7L1626.0 555.4L1625.0 557.0L1623.4 556.1L1621.3 559.1L1618.2 557.4L1616.1 560.4L1614.5 559.5L1612.6 562.4L1609.6 560.8L1607.6 563.6L1593.5 555.9L1595.4 553.0L1592.5 551.4L1594.4 548.5L1592.9 547.7L1594.9 544.7L1591.8 543.0L1593.9 540.0L1590.7 538.2L1591.8 536.7L1584.3 532.6L1583.2 534.1L1581.6 533.3L1579.5 536.3L1578.0 535.4L1573.9 541.3L1572.5 540.5L1570.6 543.3L1569.0 542.5L1564.9 548.5L1560.0 545.8L1564.1 539.8L1562.5 538.9L1564.5 536.1L1563.1 535.3L1567.1 529.5L1565.6 528.6L1567.6 525.6L1566.1 524.8L1567.1 523.2L1559.6 519.1L1558.5 520.6L1555.4 518.9L1553.3 521.9L1550.2 520.2L1548.1 523.2L1546.5 522.3L1544.6 525.2L1541.6 523.6L1539.6 526.4L1525.5 518.7L1527.4 515.8L1524.4 514.2L1526.4 511.3L1524.8 510.5L1526.9 507.5L1523.8 505.8L1525.8 502.8L1524.3 501.9L1525.3 500.4L1519.4 497.1L1518.3 498.7L1516.7 497.8L1514.7 500.8L1513.1 499.9L1511.0 502.9L1509.5 502.1L1505.5 507.8L1504.0 506.9L1501.9 509.9L1500.4 509.1L1498.3 512.1L1495.2 510.4L1493.1 513.4L1490.1 511.7L1490.1 511.6L1492.2 508.6L1489.0 506.9L1491.1 503.9L1489.5 503.0L1491.6 500.0L1490.0 499.2L1493.9 493.5L1492.4 492.7L1500.7 480.6L1502.2 481.5L1504.1 478.8L1505.6 479.7L1507.7 476.7L1509.3 477.5L1511.4 474.5L1512.9 475.4L1514.8 472.7L1517.7 474.4L1519.8 471.4L1521.6 472.3L1523.6 469.3L1525.0 470.1L1529.2 464.1L1527.8 463.3L1531.9 457.3L1530.2 456.3L1532.0 453.6L1530.6 452.9L1532.7 449.9L1531.1 449.0L1539.4 437.0L1540.9 437.9L1543.0 434.9L1544.4 435.7L1546.5 432.7L1548.3 433.6L1550.3 430.6L1551.7 431.4L1553.8 428.4L1555.4 429.3L1567.3 411.9L1565.8 411.1L1567.8 408.0L1566.3 407.2L1568.3 404.2L1566.8 403.3L1568.8 400.3L1565.9 398.7L1567.9 395.7L1566.4 394.8L1568.4 391.8L1566.8 391.0L1568.9 388.0L1567.3 387.1L1569.4 384.1L1567.8 383.2L1578.0 368.6L1579.5 369.4L1581.5 366.6L1583.1 367.4L1585.0 364.6L1586.6 365.5L1588.7 362.5L1590.3 363.3L1592.3 360.3L1593.9 361.2L1596.0 358.2ZM1582.0 347.5L1585.0 349.2L1583.0 352.2L1586.1 353.9L1584.0 356.9L1585.5 357.7L1583.5 360.7L1585.0 361.5L1581.1 367.2L1582.7 368.1L1580.6 371.1L1582.2 371.9L1580.1 374.9L1581.7 375.8L1580.6 377.3L1586.6 380.6L1587.6 379.1L1589.2 379.9L1591.3 376.9L1594.4 378.6L1596.5 375.6L1598.1 376.5L1600.0 373.6L1603.0 375.3L1605.0 372.4L1619.1 380.2L1617.2 383.0L1620.1 384.6L1618.2 387.5L1619.7 388.4L1617.7 391.4L1620.8 393.1L1618.7 396.1L1621.9 397.8L1620.8 399.3L1628.4 403.5L1629.4 401.9L1631.0 402.8L1633.1 399.8L1634.6 400.6L1638.7 394.8L1640.1 395.5L1642.0 392.7L1643.6 393.6L1647.7 387.6L1652.6 390.3L1648.5 396.3L1650.1 397.1L1648.1 399.9L1649.5 400.7L1645.5 406.6L1647.0 407.4L1645.0 410.4L1646.6 411.3L1645.5 412.8L1653.0 416.9L1654.1 415.4L1657.2 417.1L1659.3 414.1L1662.4 415.8L1664.5 412.8L1666.1 413.7L1668.1 410.8L1671.0 412.5L1673.0 409.6L1687.1 417.4L1685.2 420.2L1688.2 421.8L1686.2 424.7L1687.8 425.6L1685.7 428.6L1688.8 430.3L1686.8 433.3L1688.3 434.1L1687.3 435.7L1693.2 438.9L1694.3 437.4L1695.9 438.3L1697.9 435.3L1699.5 436.1L1701.6 433.1L1703.1 434.0L1707.1 428.3L1708.6 429.1L1710.7 426.1L1712.2 427.0L1714.3 424.0L1717.4 425.7L1719.5 422.7L1722.5 424.4L1720.5 427.4L1722.0 428.2L1720.0 431.2L1721.5 432.1L1719.5 435.1L1721.1 435.9L1719.1 438.8L1720.7 439.6L1718.7 442.5L1720.1 443.3L1709.6 458.6L1707.9 457.6L1705.4 461.3L1703.9 460.4L1701.9 463.3L1700.4 462.5L1698.1 465.7L1695.1 464.1L1693.1 467.0L1691.4 466.0L1689.4 468.9L1687.9 468.1L1685.9 471.0L1684.6 470.2L1679.4 477.8L1680.7 478.5L1673.8 488.6L1675.3 489.4L1670.3 496.6L1672.0 497.5L1667.3 504.4L1665.6 503.5L1660.9 510.3L1659.4 509.5L1652.9 518.8L1651.6 518.1L1645.4 527.1L1646.7 527.8L1644.7 530.7L1646.2 531.5L1644.2 534.4L1645.9 535.3L1643.7 538.6L1646.7 540.2L1644.7 543.1L1646.3 543.9L1644.3 546.8L1645.8 547.6L1643.8 550.5L1645.5 551.4L1634.5 567.4L1633.1 566.6L1631.1 569.5L1629.5 568.6L1627.6 571.4L1626.0 570.6L1623.9 573.6L1622.3 572.7L1620.3 575.7L1618.7 574.9L1616.6 577.9L1613.6 576.2L1615.6 573.2L1612.5 571.5L1614.6 568.5L1613.1 567.7L1615.2 564.7L1613.6 563.8L1617.5 558.1L1615.9 557.3L1618.0 554.3L1616.4 553.4L1618.5 550.4L1616.9 549.5L1618.0 548.0L1612.0 544.7L1611.0 546.3L1609.4 545.4L1607.3 548.4L1604.2 546.7L1602.1 549.7L1600.5 548.8L1598.6 551.7L1595.6 550.1L1593.6 552.9L1579.5 545.1L1581.4 542.3L1578.5 540.7L1580.4 537.8L1578.9 537.0L1580.9 534.0L1577.8 532.3L1579.9 529.3L1576.7 527.5L1577.8 526.0L1570.3 521.9L1569.2 523.4L1567.6 522.6L1565.5 525.6L1564.0 524.7L1559.9 530.6L1558.5 529.8L1556.6 532.6L1555.0 531.8L1550.9 537.8L1546.0 535.1L1550.1 529.1L1548.5 528.2L1550.5 525.4L1549.1 524.6L1553.1 518.8L1551.6 517.9L1553.6 514.9L1552.1 514.1L1553.1 512.5L1545.6 508.4L1544.5 509.9L1541.4 508.2L1539.3 511.2L1536.2 509.5L1534.1 512.5L1532.5 511.6L1530.6 514.5L1527.6 512.9L1525.6 515.7L1511.5 507.9L1513.4 505.1L1510.4 503.5L1512.4 500.6L1510.8 499.8L1512.9 496.8L1509.8 495.1L1511.8 492.1L1510.3 491.2L1511.3 489.7L1505.4 486.4L1504.3 487.9L1502.7 487.1L1500.7 490.1L1499.1 489.2L1497.0 492.2L1495.5 491.4L1491.5 497.0L1490.0 496.2L1487.9 499.2L1486.4 498.4L1484.3 501.4L1481.2 499.7L1479.1 502.7L1476.1 501.0L1476.1 500.9L1478.2 497.9L1475.0 496.2L1477.1 493.2L1475.5 492.3L1477.6 489.3L1476.0 488.5L1479.9 482.8L1478.4 481.9L1486.7 469.9L1488.2 470.8L1490.1 468.1L1491.6 469.0L1493.7 466.0L1495.3 466.8L1497.4 463.8L1498.9 464.7L1500.8 462.0L1503.7 463.6L1505.8 460.6L1507.6 461.6L1509.6 458.6L1511.0 459.4L1515.2 453.3L1513.8 452.6L1517.9 446.6L1516.2 445.6L1518.0 442.9L1516.6 442.2L1518.7 439.2L1517.1 438.3L1525.4 426.3L1526.9 427.2L1529.0 424.2L1530.4 425.0L1532.5 422.0L1534.3 422.9L1536.3 419.9L1537.7 420.7L1539.8 417.7L1541.4 418.6L1553.3 401.2L1551.8 400.4L1553.8 397.3L1552.3 396.5L1554.3 393.5L1552.8 392.6L1554.8 389.6L1551.9 388.0L1553.9 385.0L1552.4 384.1L1554.4 381.1L1552.8 380.3L1554.9 377.3L1553.3 376.4L1555.4 373.4L1553.8 372.5L1564.0 357.9L1565.5 358.7L1567.5 355.8L1569.1 356.7L1571.0 353.9L1572.6 354.8L1574.7 351.8L1576.3 352.6L1578.3 349.6L1579.9 350.5L1582.0 347.5ZM1574.0 341.4L1577.0 343.0L1575.0 346.0L1578.1 347.8L1576.0 350.8L1577.5 351.6L1575.5 354.6L1577.0 355.4L1573.1 361.1L1574.7 362.0L1572.6 365.0L1574.2 365.8L1572.1 368.8L1573.7 369.7L1572.6 371.2L1578.6 374.5L1579.6 372.9L1581.2 373.8L1583.3 370.8L1586.4 372.5L1588.5 369.5L1590.1 370.4L1592.0 367.5L1595.0 369.1L1597.0 366.3L1611.1 374.1L1609.2 376.9L1612.1 378.5L1610.2 381.4L1611.7 382.2L1609.7 385.2L1612.8 387.0L1610.7 390.0L1613.9 391.7L1612.8 393.2L1620.4 397.3L1621.4 395.8L1623.0 396.7L1625.1 393.7L1626.6 394.5L1630.7 388.6L1632.1 389.4L1634.0 386.6L1635.6 387.5L1639.7 381.5L1644.6 384.1L1640.5 390.1L1642.1 391.0L1640.1 393.8L1641.5 394.6L1637.5 400.4L1639.0 401.3L1637.0 404.3L1638.6 405.2L1637.5 406.7L1645.0 410.8L1646.1 409.3L1649.2 411.0L1651.3 408.0L1654.4 409.7L1656.5 406.7L1658.1 407.6L1660.1 404.7L1663.0 406.3L1665.0 403.5L1679.1 411.3L1677.2 414.1L1680.2 415.7L1678.2 418.6L1679.8 419.4L1677.7 422.4L1680.8 424.2L1678.8 427.2L1680.3 428.0L1679.3 429.6L1685.2 432.8L1686.3 431.3L1687.9 432.1L1689.9 429.1L1691.5 430.0L1693.6 427.0L1695.1 427.9L1699.1 422.2L1700.6 423.0L1702.7 420.0L1704.2 420.8L1706.3 417.8L1709.4 419.6L1711.5 416.6L1714.5 418.2L1712.5 421.2L1714.0 422.1L1712.0 425.1L1713.5 426.0L1711.5 429.0L1713.1 429.8L1711.1 432.6L1712.7 433.5L1710.7 436.4L1712.1 437.1L1701.6 452.5L1699.9 451.5L1697.4 455.1L1695.9 454.3L1693.9 457.2L1692.4 456.4L1690.1 459.6L1687.1 457.9L1685.1 460.8L1683.4 459.9L1681.4 462.8L1679.9 461.9L1677.9 464.8L1676.6 464.1L1671.4 471.7L1672.7 472.4L1665.8 482.5L1667.3 483.3L1662.3 490.5L1664.0 491.4L1659.3 498.3L1657.6 497.3L1652.9 504.2L1651.4 503.3L1644.9 512.7L1643.6 512.0L1637.4 521.0L1638.7 521.7L1636.7 524.6L1638.2 525.4L1636.2 528.3L1637.9 529.2L1635.7 532.5L1638.7 534.1L1636.7 537.0L1638.3 537.8L1636.3 540.7L1637.8 541.5L1635.8 544.4L1637.5 545.3L1626.5 561.3L1625.1 560.5L1623.1 563.4L1621.5 562.5L1619.6 565.3L1618.0 564.5L1615.9 567.5L1614.3 566.6L1612.3 569.6L1610.7 568.7L1608.6 571.7L1605.6 570.1L1607.6 567.1L1604.5 565.3L1606.6 562.3L1605.1 561.5L1607.2 558.5L1605.6 557.7L1609.5 552.0L1607.9 551.1L1610.0 548.1L1608.4 547.3L1610.5 544.3L1608.9 543.4L1610.0 541.9L1604.0 538.6L1603.0 540.2L1601.4 539.3L1599.3 542.3L1596.2 540.6L1594.1 543.6L1592.5 542.7L1590.6 545.6L1587.6 544.0L1585.6 546.8L1571.5 539.0L1573.4 536.2L1570.5 534.6L1572.4 531.7L1570.9 530.9L1572.9 527.9L1569.8 526.1L1571.9 523.1L1568.7 521.4L1569.8 519.9L1562.3 515.8L1561.2 517.3L1559.6 516.4L1557.5 519.4L1556.0 518.6L1551.9 524.5L1550.5 523.7L1548.6 526.5L1547.0 525.6L1542.9 531.6L1538.0 529.0L1542.1 523.0L1540.5 522.1L1542.5 519.3L1541.1 518.5L1545.1 512.7L1543.6 511.8L1545.6 508.8L1544.1 507.9L1545.1 506.4L1537.6 502.3L1536.5 503.8L1533.4 502.1L1531.3 505.1L1528.2 503.4L1526.1 506.4L1524.5 505.5L1522.6 508.4L1519.6 506.8L1517.6 509.6L1503.5 501.8L1505.4 499.0L1502.4 497.4L1504.4 494.5L1502.8 493.7L1504.9 490.7L1501.8 488.9L1503.8 485.9L1502.3 485.1L1503.3 483.5L1497.4 480.3L1496.3 481.8L1494.7 481.0L1492.7 484.0L1491.1 483.1L1489.0 486.1L1487.5 485.2L1483.5 490.9L1482.0 490.1L1479.9 493.1L1478.4 492.3L1476.3 495.3L1473.2 493.5L1471.1 496.5L1468.1 494.9L1468.1 494.8L1470.2 491.8L1467.0 490.1L1469.1 487.1L1467.5 486.2L1469.6 483.2L1468.0 482.3L1471.9 476.7L1470.4 475.8L1478.7 463.8L1480.2 464.7L1482.1 462.0L1483.6 462.9L1485.7 459.8L1487.3 460.7L1489.4 457.7L1490.9 458.6L1492.8 455.9L1495.7 457.5L1497.8 454.5L1499.6 455.5L1501.6 452.5L1503.0 453.3L1507.2 447.2L1505.8 446.5L1509.9 440.5L1508.2 439.5L1510.0 436.8L1508.6 436.1L1510.7 433.1L1509.1 432.2L1517.4 420.2L1518.9 421.1L1521.0 418.1L1522.4 418.9L1524.5 415.8L1526.3 416.8L1528.3 413.8L1529.7 414.6L1531.8 411.6L1533.4 412.4L1545.3 395.1L1543.8 394.2L1545.8 391.2L1544.3 390.3L1546.3 387.3L1544.8 386.5L1546.8 383.5L1543.9 381.9L1545.9 378.9L1544.4 378.0L1546.4 375.0L1544.8 374.1L1546.9 371.1L1545.3 370.3L1547.4 367.3L1545.8 366.4L1556.0 351.7L1557.5 352.6L1559.5 349.7L1561.1 350.6L1563.0 347.8L1564.6 348.6L1566.7 345.6L1568.3 346.5L1570.3 343.5L1571.9 344.4L1574.0 341.4Z"/></clipPath></defs><path d="M1456.0 210.0L1977.4 615.3M1454.6 211.9L1976.0 617.1M1453.2 213.7L1974.6 618.9M1451.7 215.5L1973.1 620.7M1450.3 217.3L1971.7 622.5M1448.9 219.1L1970.3 624.4M1447.5 220.9L1968.9 626.2M1446.1 222.8L1967.5 628.0M1444.7 224.6L1966.1 629.8M1438.1 233.0L1959.5 638.3M1434.0 238.3L1955.4 643.6M1426.5 248.0L1947.9 653.2M1421.8 254.0L1943.2 659.3M1417.4 259.7L1938.8 665.0M1410.2 269.0L1931.6 674.2M1405.1 275.5L1926.5 680.7M1399.5 282.7L1920.9 688.0M1392.9 291.2L1914.3 696.4M1388.8 296.5L1910.2 701.7M1381.3 306.1L1902.7 711.3M1376.6 312.2L1898.0 717.4M1372.2 317.9L1893.6 723.1M1365.0 327.1L1886.4 732.4M1364.5 327.8L1885.9 733.0M1362.9 329.8L1884.3 735.0M1361.3 331.9L1882.7 737.1M1359.7 333.9L1881.1 739.2M1358.1 336.0L1879.5 741.2M1356.5 338.0L1877.9 743.3M1354.9 340.1L1876.3 745.3M1353.3 342.1L1874.7 747.4M1351.7 344.2L1873.1 749.4M1350.1 346.2L1871.5 751.5M1344.9 353.0L1866.3 758.2M1339.7 359.7L1861.1 764.9M1334.5 366.4L1855.9 771.6M1332.8 368.5L1854.2 773.8M1331.2 370.6L1852.6 775.9M1329.5 372.8L1850.9 778.0M1327.8 374.9L1849.2 780.2M1326.2 377.0L1847.6 782.3M1324.5 379.2L1845.9 784.4M1322.9 381.3L1844.3 786.6M1321.2 383.4L1842.6 788.7M1319.6 385.6L1841.0 790.8M1317.9 387.7L1839.3 793.0M1316.2 389.8L1837.6 795.1M1314.6 392.0L1836.0 797.2" stroke="#101010" stroke-width="1" fill="none" clip-path="url(#bclip)"/><path d="M1574.0 341.4L1577.0 343.0L1575.0 346.0L1578.1 347.8L1576.0 350.8L1577.5 351.6L1575.5 354.6L1577.0 355.4L1573.1 361.1L1574.7 362.0L1572.6 365.0L1574.2 365.8L1572.1 368.8L1573.7 369.7L1572.6 371.2L1578.6 374.5L1579.6 372.9L1581.2 373.8L1583.3 370.8L1586.4 372.5L1588.5 369.5L1590.1 370.4L1592.0 367.5L1595.0 369.1L1597.0 366.3L1611.1 374.1L1609.2 376.9L1612.1 378.5L1610.2 381.4L1611.7 382.2L1609.7 385.2L1612.8 387.0L1610.7 390.0L1613.9 391.7L1612.8 393.2L1620.4 397.3L1621.4 395.8L1623.0 396.7L1625.1 393.7L1626.6 394.5L1630.7 388.6L1632.1 389.4L1634.0 386.6L1635.6 387.5L1639.7 381.5L1644.6 384.1L1640.5 390.1L1642.1 391.0L1640.1 393.8L1641.5 394.6L1637.5 400.4L1639.0 401.3L1637.0 404.3L1638.6 405.2L1637.5 406.7L1645.0 410.8L1646.1 409.3L1649.2 411.0L1651.3 408.0L1654.4 409.7L1656.5 406.7L1658.1 407.6L1660.1 404.7L1663.0 406.3L1665.0 403.5L1679.1 411.3L1677.2 414.1L1680.2 415.7L1678.2 418.6L1679.8 419.4L1677.7 422.4L1680.8 424.2L1678.8 427.2L1680.3 428.0L1679.3 429.6L1685.2 432.8L1686.3 431.3L1687.9 432.1L1689.9 429.1L1691.5 430.0L1693.6 427.0L1695.1 427.9L1699.1 422.2L1700.6 423.0L1702.7 420.0L1704.2 420.8L1706.3 417.8L1709.4 419.6L1711.5 416.6L1714.5 418.2L1712.5 421.2L1714.0 422.1L1712.0 425.1L1713.5 426.0L1711.5 429.0L1713.1 429.8L1711.1 432.6L1712.7 433.5L1710.7 436.4L1712.1 437.1L1701.6 452.5L1699.9 451.5L1697.4 455.1L1695.9 454.3L1693.9 457.2L1692.4 456.4L1690.1 459.6L1687.1 457.9L1685.1 460.8L1683.4 459.9L1681.4 462.8L1679.9 461.9L1677.9 464.8L1676.6 464.1L1671.4 471.7L1672.7 472.4L1665.8 482.5L1667.3 483.3L1662.3 490.5L1664.0 491.4L1659.3 498.3L1657.6 497.3L1652.9 504.2L1651.4 503.3L1644.9 512.7L1643.6 512.0L1637.4 521.0L1638.7 521.7L1636.7 524.6L1638.2 525.4L1636.2 528.3L1637.9 529.2L1635.7 532.5L1638.7 534.1L1636.7 537.0L1638.3 537.8L1636.3 540.7L1637.8 541.5L1635.8 544.4L1637.5 545.3L1626.5 561.3L1625.1 560.5L1623.1 563.4L1621.5 562.5L1619.6 565.3L1618.0 564.5L1615.9 567.5L1614.3 566.6L1612.3 569.6L1610.7 568.7L1608.6 571.7L1605.6 570.1L1607.6 567.1L1604.5 565.3L1606.6 562.3L1605.1 561.5L1607.2 558.5L1605.6 557.7L1609.5 552.0L1607.9 551.1L1610.0 548.1L1608.4 547.3L1610.5 544.3L1608.9 543.4L1610.0 541.9L1604.0 538.6L1603.0 540.2L1601.4 539.3L1599.3 542.3L1596.2 540.6L1594.1 543.6L1592.5 542.7L1590.6 545.6L1587.6 544.0L1585.6 546.8L1571.5 539.0L1573.4 536.2L1570.5 534.6L1572.4 531.7L1570.9 530.9L1572.9 527.9L1569.8 526.1L1571.9 523.1L1568.7 521.4L1569.8 519.9L1562.3 515.8L1561.2 517.3L1559.6 516.4L1557.5 519.4L1556.0 518.6L1551.9 524.5L1550.5 523.7L1548.6 526.5L1547.0 525.6L1542.9 531.6L1538.0 529.0L1542.1 523.0L1540.5 522.1L1542.5 519.3L1541.1 518.5L1545.1 512.7L1543.6 511.8L1545.6 508.8L1544.1 507.9L1545.1 506.4L1537.6 502.3L1536.5 503.8L1533.4 502.1L1531.3 505.1L1528.2 503.4L1526.1 506.4L1524.5 505.5L1522.6 508.4L1519.6 506.8L1517.6 509.6L1503.5 501.8L1505.4 499.0L1502.4 497.4L1504.4 494.5L1502.8 493.7L1504.9 490.7L1501.8 488.9L1503.8 485.9L1502.3 485.1L1503.3 483.5L1497.4 480.3L1496.3 481.8L1494.7 481.0L1492.7 484.0L1491.1 483.1L1489.0 486.1L1487.5 485.2L1483.5 490.9L1482.0 490.1L1479.9 493.1L1478.4 492.3L1476.3 495.3L1473.2 493.5L1471.1 496.5L1468.1 494.9L1468.1 494.8L1470.2 491.8L1467.0 490.1L1469.1 487.1L1467.5 486.2L1469.6 483.2L1468.0 482.3L1471.9 476.7L1470.4 475.8L1478.7 463.8L1480.2 464.7L1482.1 462.0L1483.6 462.9L1485.7 459.8L1487.3 460.7L1489.4 457.7L1490.9 458.6L1492.8 455.9L1495.7 457.5L1497.8 454.5L1499.6 455.5L1501.6 452.5L1503.0 453.3L1507.2 447.2L1505.8 446.5L1509.9 440.5L1508.2 439.5L1510.0 436.8L1508.6 436.1L1510.7 433.1L1509.1 432.2L1517.4 420.2L1518.9 421.1L1521.0 418.1L1522.4 418.9L1524.5 415.8L1526.3 416.8L1528.3 413.8L1529.7 414.6L1531.8 411.6L1533.4 412.4L1545.3 395.1L1543.8 394.2L1545.8 391.2L1544.3 390.3L1546.3 387.3L1544.8 386.5L1546.8 383.5L1543.9 381.9L1545.9 378.9L1544.4 378.0L1546.4 375.0L1544.8 374.1L1546.9 371.1L1545.3 370.3L1547.4 367.3L1545.8 366.4L1556.0 351.7L1557.5 352.6L1559.5 349.7L1561.1 350.6L1563.0 347.8L1564.6 348.6L1566.7 345.6L1568.3 346.5L1570.3 343.5L1571.9 344.4L1574.0 341.4ZM1601.3 382.1L1599.7 384.4L1605.2 387.4L1603.1 390.4L1606.3 392.1L1604.2 395.1L1607.4 396.8L1605.3 399.8L1606.9 400.7L1604.8 403.7L1607.2 405.0L1605.1 408.0L1605.9 408.4L1603.8 411.4L1605.4 412.3L1603.3 415.3L1604.1 415.7L1602.0 418.7L1603.6 419.6L1601.5 422.6L1602.3 423.0L1600.2 426.0L1601.0 426.5L1598.9 429.5L1599.7 429.9L1597.7 432.9L1597.7 432.9L1595.6 435.9L1596.4 436.3L1594.3 439.3L1594.3 439.3L1592.2 442.3L1593.0 442.8L1591.0 445.8L1591.0 445.8L1588.9 448.8L1588.9 448.8L1586.8 451.8L1586.8 451.8L1584.7 454.8L1584.7 454.8L1582.7 457.8L1582.7 457.8L1580.6 460.8L1580.6 460.8L1578.5 463.8L1577.7 463.3L1575.7 466.4L1575.7 466.4L1573.6 469.4L1572.8 468.9L1570.7 471.9L1570.7 471.9L1568.7 474.9L1567.9 474.5L1565.8 477.5L1565.0 477.1L1562.9 480.1L1562.2 479.6L1560.1 482.6L1559.3 482.2L1557.2 485.2L1555.7 484.4L1553.6 487.4L1552.8 486.9L1550.7 489.9L1549.2 489.1L1547.1 492.1L1545.5 491.2L1543.4 494.2L1541.1 492.9L1539.0 495.9L1536.6 494.6L1534.6 497.6L1531.4 495.9L1529.4 498.9L1523.9 495.9L1522.0 498.6L1511.0 492.5L1512.8 489.9L1507.3 486.9L1509.4 483.9L1506.3 482.2L1508.3 479.2L1506.0 477.9L1508.0 474.9L1505.7 473.6L1507.8 470.6L1506.2 469.7L1508.3 466.7L1506.7 465.8L1508.8 462.8L1508.0 462.4L1510.0 459.4L1508.5 458.5L1510.5 455.5L1509.8 455.1L1511.8 452.1L1511.0 451.7L1513.1 448.7L1512.3 448.3L1514.4 445.2L1513.6 444.8L1515.7 441.8L1515.7 441.8L1517.7 438.8L1517.0 438.4L1519.0 435.4L1519.0 435.4L1521.1 432.4L1520.3 431.9L1522.4 428.9L1522.4 428.9L1524.5 425.9L1524.5 425.9L1526.5 422.9L1526.5 422.9L1528.6 419.9L1528.6 419.9L1530.7 416.9L1530.7 416.9L1532.7 413.9L1532.7 413.9L1534.8 410.9L1535.6 411.4L1537.7 408.4L1537.7 408.4L1539.7 405.4L1540.5 405.8L1542.6 402.8L1542.6 402.8L1544.7 399.8L1545.5 400.2L1547.5 397.2L1548.3 397.6L1550.4 394.6L1551.2 395.1L1553.3 392.1L1554.8 392.9L1556.9 389.9L1557.7 390.3L1559.8 387.3L1561.3 388.2L1563.4 385.2L1564.2 385.6L1566.3 382.6L1568.6 383.9L1570.7 380.9L1572.3 381.8L1574.3 378.8L1577.5 380.5L1579.5 377.5L1582.7 379.2L1584.8 376.2L1590.3 379.2L1591.9 376.9ZM1671.1 420.3L1669.5 422.6L1675.0 425.6L1673.0 428.6L1676.1 430.3L1674.0 433.3L1677.2 435.0L1675.1 438.0L1676.7 438.9L1674.6 441.9L1677.0 443.2L1674.9 446.2L1675.7 446.6L1673.6 449.6L1675.2 450.5L1673.1 453.5L1673.9 453.9L1671.8 456.9L1673.4 457.8L1671.3 460.8L1672.1 461.2L1670.1 464.2L1670.8 464.6L1668.8 467.6L1669.6 468.1L1667.5 471.1L1667.5 471.1L1665.4 474.1L1666.2 474.5L1664.1 477.5L1664.1 477.5L1662.1 480.5L1662.8 480.9L1660.8 484.0L1660.8 484.0L1658.7 487.0L1658.7 487.0L1656.6 490.0L1656.6 490.0L1654.6 493.0L1654.6 493.0L1652.5 496.0L1652.5 496.0L1650.4 499.0L1650.4 499.0L1648.3 502.0L1647.6 501.5L1645.5 504.5L1645.5 504.5L1643.4 507.5L1642.6 507.1L1640.6 510.1L1640.6 510.1L1638.5 513.1L1637.7 512.7L1635.6 515.7L1634.8 515.3L1632.8 518.3L1632.0 517.8L1629.9 520.8L1629.1 520.4L1627.1 523.4L1625.5 522.5L1623.4 525.5L1622.6 525.1L1620.6 528.1L1619.0 527.3L1616.9 530.3L1615.3 529.4L1613.3 532.4L1610.9 531.1L1608.8 534.1L1606.5 532.8L1604.4 535.8L1601.3 534.1L1599.2 537.1L1593.7 534.1L1591.8 536.8L1580.8 530.7L1582.7 528.1L1577.2 525.1L1579.2 522.1L1576.1 520.3L1578.2 517.3L1575.8 516.1L1577.9 513.0L1575.5 511.8L1577.6 508.8L1576.0 507.9L1578.1 504.9L1576.5 504.0L1578.6 501.0L1577.8 500.6L1579.9 497.6L1578.3 496.7L1580.4 493.7L1579.6 493.3L1581.6 490.3L1580.9 489.9L1582.9 486.9L1582.1 486.4L1584.2 483.4L1583.4 483.0L1585.5 480.0L1585.5 480.0L1587.6 477.0L1586.8 476.6L1588.9 473.6L1588.9 473.6L1590.9 470.6L1590.1 470.1L1592.2 467.1L1592.2 467.1L1594.3 464.1L1594.3 464.1L1596.4 461.1L1596.4 461.1L1598.4 458.1L1598.4 458.1L1600.5 455.1L1600.5 455.1L1602.6 452.1L1602.6 452.1L1604.6 449.1L1605.4 449.5L1607.5 446.5L1607.5 446.5L1609.6 443.5L1610.4 444.0L1612.4 441.0L1612.4 441.0L1614.5 438.0L1615.3 438.4L1617.4 435.4L1618.1 435.8L1620.2 432.8L1621.0 433.3L1623.1 430.2L1624.6 431.1L1626.7 428.1L1627.5 428.5L1629.6 425.5L1631.1 426.4L1633.2 423.4L1634.0 423.8L1636.1 420.8L1638.4 422.1L1640.5 419.1L1642.1 420.0L1644.2 417.0L1647.3 418.7L1649.4 415.7L1652.5 417.4L1654.6 414.4L1660.1 417.4L1661.7 415.1Z" fill="url(#dots)" fill-rule="evenodd"/><path d="M1574.0 341.4L1577.0 343.0L1575.0 346.0L1578.1 347.8L1576.0 350.8L1577.5 351.6L1575.5 354.6L1577.0 355.4L1573.1 361.1L1574.7 362.0L1572.6 365.0L1574.2 365.8L1572.1 368.8L1573.7 369.7L1572.6 371.2L1578.6 374.5L1579.6 372.9L1581.2 373.8L1583.3 370.8L1586.4 372.5L1588.5 369.5L1590.1 370.4L1592.0 367.5L1595.0 369.1L1597.0 366.3L1611.1 374.1L1609.2 376.9L1612.1 378.5L1610.2 381.4L1611.7 382.2L1609.7 385.2L1612.8 387.0L1610.7 390.0L1613.9 391.7L1612.8 393.2L1620.4 397.3L1621.4 395.8L1623.0 396.7L1625.1 393.7L1626.6 394.5L1630.7 388.6L1632.1 389.4L1634.0 386.6L1635.6 387.5L1639.7 381.5L1644.6 384.1L1640.5 390.1L1642.1 391.0L1640.1 393.8L1641.5 394.6L1637.5 400.4L1639.0 401.3L1637.0 404.3L1638.6 405.2L1637.5 406.7L1645.0 410.8L1646.1 409.3L1649.2 411.0L1651.3 408.0L1654.4 409.7L1656.5 406.7L1658.1 407.6L1660.1 404.7L1663.0 406.3L1665.0 403.5L1679.1 411.3L1677.2 414.1L1680.2 415.7L1678.2 418.6L1679.8 419.4L1677.7 422.4L1680.8 424.2L1678.8 427.2L1680.3 428.0L1679.3 429.6L1685.2 432.8L1686.3 431.3L1687.9 432.1L1689.9 429.1L1691.5 430.0L1693.6 427.0L1695.1 427.9L1699.1 422.2L1700.6 423.0L1702.7 420.0L1704.2 420.8L1706.3 417.8L1709.4 419.6L1711.5 416.6L1714.5 418.2L1712.5 421.2L1714.0 422.1L1712.0 425.1L1713.5 426.0L1711.5 429.0L1713.1 429.8L1711.1 432.6L1712.7 433.5L1710.7 436.4L1712.1 437.1L1701.6 452.5L1699.9 451.5L1697.4 455.1L1695.9 454.3L1693.9 457.2L1692.4 456.4L1690.1 459.6L1687.1 457.9L1685.1 460.8L1683.4 459.9L1681.4 462.8L1679.9 461.9L1677.9 464.8L1676.6 464.1L1671.4 471.7L1672.7 472.4L1665.8 482.5L1667.3 483.3L1662.3 490.5L1664.0 491.4L1659.3 498.3L1657.6 497.3L1652.9 504.2L1651.4 503.3L1644.9 512.7L1643.6 512.0L1637.4 521.0L1638.7 521.7L1636.7 524.6L1638.2 525.4L1636.2 528.3L1637.9 529.2L1635.7 532.5L1638.7 534.1L1636.7 537.0L1638.3 537.8L1636.3 540.7L1637.8 541.5L1635.8 544.4L1637.5 545.3L1626.5 561.3L1625.1 560.5L1623.1 563.4L1621.5 562.5L1619.6 565.3L1618.0 564.5L1615.9 567.5L1614.3 566.6L1612.3 569.6L1610.7 568.7L1608.6 571.7L1605.6 570.1L1607.6 567.1L1604.5 565.3L1606.6 562.3L1605.1 561.5L1607.2 558.5L1605.6 557.7L1609.5 552.0L1607.9 551.1L1610.0 548.1L1608.4 547.3L1610.5 544.3L1608.9 543.4L1610.0 541.9L1604.0 538.6L1603.0 540.2L1601.4 539.3L1599.3 542.3L1596.2 540.6L1594.1 543.6L1592.5 542.7L1590.6 545.6L1587.6 544.0L1585.6 546.8L1571.5 539.0L1573.4 536.2L1570.5 534.6L1572.4 531.7L1570.9 530.9L1572.9 527.9L1569.8 526.1L1571.9 523.1L1568.7 521.4L1569.8 519.9L1562.3 515.8L1561.2 517.3L1559.6 516.4L1557.5 519.4L1556.0 518.6L1551.9 524.5L1550.5 523.7L1548.6 526.5L1547.0 525.6L1542.9 531.6L1538.0 529.0L1542.1 523.0L1540.5 522.1L1542.5 519.3L1541.1 518.5L1545.1 512.7L1543.6 511.8L1545.6 508.8L1544.1 507.9L1545.1 506.4L1537.6 502.3L1536.5 503.8L1533.4 502.1L1531.3 505.1L1528.2 503.4L1526.1 506.4L1524.5 505.5L1522.6 508.4L1519.6 506.8L1517.6 509.6L1503.5 501.8L1505.4 499.0L1502.4 497.4L1504.4 494.5L1502.8 493.7L1504.9 490.7L1501.8 488.9L1503.8 485.9L1502.3 485.1L1503.3 483.5L1497.4 480.3L1496.3 481.8L1494.7 481.0L1492.7 484.0L1491.1 483.1L1489.0 486.1L1487.5 485.2L1483.5 490.9L1482.0 490.1L1479.9 493.1L1478.4 492.3L1476.3 495.3L1473.2 493.5L1471.1 496.5L1468.1 494.9L1468.1 494.8L1470.2 491.8L1467.0 490.1L1469.1 487.1L1467.5 486.2L1469.6 483.2L1468.0 482.3L1471.9 476.7L1470.4 475.8L1478.7 463.8L1480.2 464.7L1482.1 462.0L1483.6 462.9L1485.7 459.8L1487.3 460.7L1489.4 457.7L1490.9 458.6L1492.8 455.9L1495.7 457.5L1497.8 454.5L1499.6 455.5L1501.6 452.5L1503.0 453.3L1507.2 447.2L1505.8 446.5L1509.9 440.5L1508.2 439.5L1510.0 436.8L1508.6 436.1L1510.7 433.1L1509.1 432.2L1517.4 420.2L1518.9 421.1L1521.0 418.1L1522.4 418.9L1524.5 415.8L1526.3 416.8L1528.3 413.8L1529.7 414.6L1531.8 411.6L1533.4 412.4L1545.3 395.1L1543.8 394.2L1545.8 391.2L1544.3 390.3L1546.3 387.3L1544.8 386.5L1546.8 383.5L1543.9 381.9L1545.9 378.9L1544.4 378.0L1546.4 375.0L1544.8 374.1L1546.9 371.1L1545.3 370.3L1547.4 367.3L1545.8 366.4L1556.0 351.7L1557.5 352.6L1559.5 349.7L1561.1 350.6L1563.0 347.8L1564.6 348.6L1566.7 345.6L1568.3 346.5L1570.3 343.5L1571.9 344.4L1574.0 341.4Z" fill="none" stroke="#333" stroke-width="1.6" stroke-dasharray="2 1.6"/><path d="M1601.3 382.1L1599.7 384.4L1605.2 387.4L1603.1 390.4L1606.3 392.1L1604.2 395.1L1607.4 396.8L1605.3 399.8L1606.9 400.7L1604.8 403.7L1607.2 405.0L1605.1 408.0L1605.9 408.4L1603.8 411.4L1605.4 412.3L1603.3 415.3L1604.1 415.7L1602.0 418.7L1603.6 419.6L1601.5 422.6L1602.3 423.0L1600.2 426.0L1601.0 426.5L1598.9 429.5L1599.7 429.9L1597.7 432.9L1597.7 432.9L1595.6 435.9L1596.4 436.3L1594.3 439.3L1594.3 439.3L1592.2 442.3L1593.0 442.8L1591.0 445.8L1591.0 445.8L1588.9 448.8L1588.9 448.8L1586.8 451.8L1586.8 451.8L1584.7 454.8L1584.7 454.8L1582.7 457.8L1582.7 457.8L1580.6 460.8L1580.6 460.8L1578.5 463.8L1577.7 463.3L1575.7 466.4L1575.7 466.4L1573.6 469.4L1572.8 468.9L1570.7 471.9L1570.7 471.9L1568.7 474.9L1567.9 474.5L1565.8 477.5L1565.0 477.1L1562.9 480.1L1562.2 479.6L1560.1 482.6L1559.3 482.2L1557.2 485.2L1555.7 484.4L1553.6 487.4L1552.8 486.9L1550.7 489.9L1549.2 489.1L1547.1 492.1L1545.5 491.2L1543.4 494.2L1541.1 492.9L1539.0 495.9L1536.6 494.6L1534.6 497.6L1531.4 495.9L1529.4 498.9L1523.9 495.9L1522.0 498.6L1511.0 492.5L1512.8 489.9L1507.3 486.9L1509.4 483.9L1506.3 482.2L1508.3 479.2L1506.0 477.9L1508.0 474.9L1505.7 473.6L1507.8 470.6L1506.2 469.7L1508.3 466.7L1506.7 465.8L1508.8 462.8L1508.0 462.4L1510.0 459.4L1508.5 458.5L1510.5 455.5L1509.8 455.1L1511.8 452.1L1511.0 451.7L1513.1 448.7L1512.3 448.3L1514.4 445.2L1513.6 444.8L1515.7 441.8L1515.7 441.8L1517.7 438.8L1517.0 438.4L1519.0 435.4L1519.0 435.4L1521.1 432.4L1520.3 431.9L1522.4 428.9L1522.4 428.9L1524.5 425.9L1524.5 425.9L1526.5 422.9L1526.5 422.9L1528.6 419.9L1528.6 419.9L1530.7 416.9L1530.7 416.9L1532.7 413.9L1532.7 413.9L1534.8 410.9L1535.6 411.4L1537.7 408.4L1537.7 408.4L1539.7 405.4L1540.5 405.8L1542.6 402.8L1542.6 402.8L1544.7 399.8L1545.5 400.2L1547.5 397.2L1548.3 397.6L1550.4 394.6L1551.2 395.1L1553.3 392.1L1554.8 392.9L1556.9 389.9L1557.7 390.3L1559.8 387.3L1561.3 388.2L1563.4 385.2L1564.2 385.6L1566.3 382.6L1568.6 383.9L1570.7 380.9L1572.3 381.8L1574.3 378.8L1577.5 380.5L1579.5 377.5L1582.7 379.2L1584.8 376.2L1590.3 379.2L1591.9 376.9ZM1671.1 420.3L1669.5 422.6L1675.0 425.6L1673.0 428.6L1676.1 430.3L1674.0 433.3L1677.2 435.0L1675.1 438.0L1676.7 438.9L1674.6 441.9L1677.0 443.2L1674.9 446.2L1675.7 446.6L1673.6 449.6L1675.2 450.5L1673.1 453.5L1673.9 453.9L1671.8 456.9L1673.4 457.8L1671.3 460.8L1672.1 461.2L1670.1 464.2L1670.8 464.6L1668.8 467.6L1669.6 468.1L1667.5 471.1L1667.5 471.1L1665.4 474.1L1666.2 474.5L1664.1 477.5L1664.1 477.5L1662.1 480.5L1662.8 480.9L1660.8 484.0L1660.8 484.0L1658.7 487.0L1658.7 487.0L1656.6 490.0L1656.6 490.0L1654.6 493.0L1654.6 493.0L1652.5 496.0L1652.5 496.0L1650.4 499.0L1650.4 499.0L1648.3 502.0L1647.6 501.5L1645.5 504.5L1645.5 504.5L1643.4 507.5L1642.6 507.1L1640.6 510.1L1640.6 510.1L1638.5 513.1L1637.7 512.7L1635.6 515.7L1634.8 515.3L1632.8 518.3L1632.0 517.8L1629.9 520.8L1629.1 520.4L1627.1 523.4L1625.5 522.5L1623.4 525.5L1622.6 525.1L1620.6 528.1L1619.0 527.3L1616.9 530.3L1615.3 529.4L1613.3 532.4L1610.9 531.1L1608.8 534.1L1606.5 532.8L1604.4 535.8L1601.3 534.1L1599.2 537.1L1593.7 534.1L1591.8 536.8L1580.8 530.7L1582.7 528.1L1577.2 525.1L1579.2 522.1L1576.1 520.3L1578.2 517.3L1575.8 516.1L1577.9 513.0L1575.5 511.8L1577.6 508.8L1576.0 507.9L1578.1 504.9L1576.5 504.0L1578.6 501.0L1577.8 500.6L1579.9 497.6L1578.3 496.7L1580.4 493.7L1579.6 493.3L1581.6 490.3L1580.9 489.9L1582.9 486.9L1582.1 486.4L1584.2 483.4L1583.4 483.0L1585.5 480.0L1585.5 480.0L1587.6 477.0L1586.8 476.6L1588.9 473.6L1588.9 473.6L1590.9 470.6L1590.1 470.1L1592.2 467.1L1592.2 467.1L1594.3 464.1L1594.3 464.1L1596.4 461.1L1596.4 461.1L1598.4 458.1L1598.4 458.1L1600.5 455.1L1600.5 455.1L1602.6 452.1L1602.6 452.1L1604.6 449.1L1605.4 449.5L1607.5 446.5L1607.5 446.5L1609.6 443.5L1610.4 444.0L1612.4 441.0L1612.4 441.0L1614.5 438.0L1615.3 438.4L1617.4 435.4L1618.1 435.8L1620.2 432.8L1621.0 433.3L1623.1 430.2L1624.6 431.1L1626.7 428.1L1627.5 428.5L1629.6 425.5L1631.1 426.4L1633.2 423.4L1634.0 423.8L1636.1 420.8L1638.4 422.1L1640.5 419.1L1642.1 420.0L1644.2 417.0L1647.3 418.7L1649.4 415.7L1652.5 417.4L1654.6 414.4L1660.1 417.4L1661.7 415.1Z" fill="url(#zl2)"/><path d="M1601.3 382.1L1599.7 384.4L1605.2 387.4L1603.1 390.4L1606.3 392.1L1604.2 395.1L1607.4 396.8L1605.3 399.8L1606.9 400.7L1604.8 403.7L1607.2 405.0L1605.1 408.0L1605.9 408.4L1603.8 411.4L1605.4 412.3L1603.3 415.3L1604.1 415.7L1602.0 418.7L1603.6 419.6L1601.5 422.6L1602.3 423.0L1600.2 426.0L1601.0 426.5L1598.9 429.5L1599.7 429.9L1597.7 432.9L1597.7 432.9L1595.6 435.9L1596.4 436.3L1594.3 439.3L1594.3 439.3L1592.2 442.3L1593.0 442.8L1591.0 445.8L1591.0 445.8L1588.9 448.8L1588.9 448.8L1586.8 451.8L1586.8 451.8L1584.7 454.8L1584.7 454.8L1582.7 457.8L1582.7 457.8L1580.6 460.8L1580.6 460.8L1578.5 463.8L1577.7 463.3L1575.7 466.4L1575.7 466.4L1573.6 469.4L1572.8 468.9L1570.7 471.9L1570.7 471.9L1568.7 474.9L1567.9 474.5L1565.8 477.5L1565.0 477.1L1562.9 480.1L1562.2 479.6L1560.1 482.6L1559.3 482.2L1557.2 485.2L1555.7 484.4L1553.6 487.4L1552.8 486.9L1550.7 489.9L1549.2 489.1L1547.1 492.1L1545.5 491.2L1543.4 494.2L1541.1 492.9L1539.0 495.9L1536.6 494.6L1534.6 497.6L1531.4 495.9L1529.4 498.9L1523.9 495.9L1522.0 498.6L1511.0 492.5L1512.8 489.9L1507.3 486.9L1509.4 483.9L1506.3 482.2L1508.3 479.2L1506.0 477.9L1508.0 474.9L1505.7 473.6L1507.8 470.6L1506.2 469.7L1508.3 466.7L1506.7 465.8L1508.8 462.8L1508.0 462.4L1510.0 459.4L1508.5 458.5L1510.5 455.5L1509.8 455.1L1511.8 452.1L1511.0 451.7L1513.1 448.7L1512.3 448.3L1514.4 445.2L1513.6 444.8L1515.7 441.8L1515.7 441.8L1517.7 438.8L1517.0 438.4L1519.0 435.4L1519.0 435.4L1521.1 432.4L1520.3 431.9L1522.4 428.9L1522.4 428.9L1524.5 425.9L1524.5 425.9L1526.5 422.9L1526.5 422.9L1528.6 419.9L1528.6 419.9L1530.7 416.9L1530.7 416.9L1532.7 413.9L1532.7 413.9L1534.8 410.9L1535.6 411.4L1537.7 408.4L1537.7 408.4L1539.7 405.4L1540.5 405.8L1542.6 402.8L1542.6 402.8L1544.7 399.8L1545.5 400.2L1547.5 397.2L1548.3 397.6L1550.4 394.6L1551.2 395.1L1553.3 392.1L1554.8 392.9L1556.9 389.9L1557.7 390.3L1559.8 387.3L1561.3 388.2L1563.4 385.2L1564.2 385.6L1566.3 382.6L1568.6 383.9L1570.7 380.9L1572.3 381.8L1574.3 378.8L1577.5 380.5L1579.5 377.5L1582.7 379.2L1584.8 376.2L1590.3 379.2L1591.9 376.9ZM1671.1 420.3L1669.5 422.6L1675.0 425.6L1673.0 428.6L1676.1 430.3L1674.0 433.3L1677.2 435.0L1675.1 438.0L1676.7 438.9L1674.6 441.9L1677.0 443.2L1674.9 446.2L1675.7 446.6L1673.6 449.6L1675.2 450.5L1673.1 453.5L1673.9 453.9L1671.8 456.9L1673.4 457.8L1671.3 460.8L1672.1 461.2L1670.1 464.2L1670.8 464.6L1668.8 467.6L1669.6 468.1L1667.5 471.1L1667.5 471.1L1665.4 474.1L1666.2 474.5L1664.1 477.5L1664.1 477.5L1662.1 480.5L1662.8 480.9L1660.8 484.0L1660.8 484.0L1658.7 487.0L1658.7 487.0L1656.6 490.0L1656.6 490.0L1654.6 493.0L1654.6 493.0L1652.5 496.0L1652.5 496.0L1650.4 499.0L1650.4 499.0L1648.3 502.0L1647.6 501.5L1645.5 504.5L1645.5 504.5L1643.4 507.5L1642.6 507.1L1640.6 510.1L1640.6 510.1L1638.5 513.1L1637.7 512.7L1635.6 515.7L1634.8 515.3L1632.8 518.3L1632.0 517.8L1629.9 520.8L1629.1 520.4L1627.1 523.4L1625.5 522.5L1623.4 525.5L1622.6 525.1L1620.6 528.1L1619.0 527.3L1616.9 530.3L1615.3 529.4L1613.3 532.4L1610.9 531.1L1608.8 534.1L1606.5 532.8L1604.4 535.8L1601.3 534.1L1599.2 537.1L1593.7 534.1L1591.8 536.8L1580.8 530.7L1582.7 528.1L1577.2 525.1L1579.2 522.1L1576.1 520.3L1578.2 517.3L1575.8 516.1L1577.9 513.0L1575.5 511.8L1577.6 508.8L1576.0 507.9L1578.1 504.9L1576.5 504.0L1578.6 501.0L1577.8 500.6L1579.9 497.6L1578.3 496.7L1580.4 493.7L1579.6 493.3L1581.6 490.3L1580.9 489.9L1582.9 486.9L1582.1 486.4L1584.2 483.4L1583.4 483.0L1585.5 480.0L1585.5 480.0L1587.6 477.0L1586.8 476.6L1588.9 473.6L1588.9 473.6L1590.9 470.6L1590.1 470.1L1592.2 467.1L1592.2 467.1L1594.3 464.1L1594.3 464.1L1596.4 461.1L1596.4 461.1L1598.4 458.1L1598.4 458.1L1600.5 455.1L1600.5 455.1L1602.6 452.1L1602.6 452.1L1604.6 449.1L1605.4 449.5L1607.5 446.5L1607.5 446.5L1609.6 443.5L1610.4 444.0L1612.4 441.0L1612.4 441.0L1614.5 438.0L1615.3 438.4L1617.4 435.4L1618.1 435.8L1620.2 432.8L1621.0 433.3L1623.1 430.2L1624.6 431.1L1626.7 428.1L1627.5 428.5L1629.6 425.5L1631.1 426.4L1633.2 423.4L1634.0 423.8L1636.1 420.8L1638.4 422.1L1640.5 419.1L1642.1 420.0L1644.2 417.0L1647.3 418.7L1649.4 415.7L1652.5 417.4L1654.6 414.4L1660.1 417.4L1661.7 415.1Z" fill="none" stroke="#444" stroke-width="1.4" stroke-dasharray="2 1.6"/><defs><clipPath id="hclip"><path d="M1601.3 382.1L1599.7 384.4L1605.2 387.4L1603.1 390.4L1606.3 392.1L1604.2 395.1L1607.4 396.8L1605.3 399.8L1606.9 400.7L1604.8 403.7L1607.2 405.0L1605.1 408.0L1605.9 408.4L1603.8 411.4L1605.4 412.3L1603.3 415.3L1604.1 415.7L1602.0 418.7L1603.6 419.6L1601.5 422.6L1602.3 423.0L1600.2 426.0L1601.0 426.5L1598.9 429.5L1599.7 429.9L1597.7 432.9L1597.7 432.9L1595.6 435.9L1596.4 436.3L1594.3 439.3L1594.3 439.3L1592.2 442.3L1593.0 442.8L1591.0 445.8L1591.0 445.8L1588.9 448.8L1588.9 448.8L1586.8 451.8L1586.8 451.8L1584.7 454.8L1584.7 454.8L1582.7 457.8L1582.7 457.8L1580.6 460.8L1580.6 460.8L1578.5 463.8L1577.7 463.3L1575.7 466.4L1575.7 466.4L1573.6 469.4L1572.8 468.9L1570.7 471.9L1570.7 471.9L1568.7 474.9L1567.9 474.5L1565.8 477.5L1565.0 477.1L1562.9 480.1L1562.2 479.6L1560.1 482.6L1559.3 482.2L1557.2 485.2L1555.7 484.4L1553.6 487.4L1552.8 486.9L1550.7 489.9L1549.2 489.1L1547.1 492.1L1545.5 491.2L1543.4 494.2L1541.1 492.9L1539.0 495.9L1536.6 494.6L1534.6 497.6L1531.4 495.9L1529.4 498.9L1523.9 495.9L1522.0 498.6L1511.0 492.5L1512.8 489.9L1507.3 486.9L1509.4 483.9L1506.3 482.2L1508.3 479.2L1506.0 477.9L1508.0 474.9L1505.7 473.6L1507.8 470.6L1506.2 469.7L1508.3 466.7L1506.7 465.8L1508.8 462.8L1508.0 462.4L1510.0 459.4L1508.5 458.5L1510.5 455.5L1509.8 455.1L1511.8 452.1L1511.0 451.7L1513.1 448.7L1512.3 448.3L1514.4 445.2L1513.6 444.8L1515.7 441.8L1515.7 441.8L1517.7 438.8L1517.0 438.4L1519.0 435.4L1519.0 435.4L1521.1 432.4L1520.3 431.9L1522.4 428.9L1522.4 428.9L1524.5 425.9L1524.5 425.9L1526.5 422.9L1526.5 422.9L1528.6 419.9L1528.6 419.9L1530.7 416.9L1530.7 416.9L1532.7 413.9L1532.7 413.9L1534.8 410.9L1535.6 411.4L1537.7 408.4L1537.7 408.4L1539.7 405.4L1540.5 405.8L1542.6 402.8L1542.6 402.8L1544.7 399.8L1545.5 400.2L1547.5 397.2L1548.3 397.6L1550.4 394.6L1551.2 395.1L1553.3 392.1L1554.8 392.9L1556.9 389.9L1557.7 390.3L1559.8 387.3L1561.3 388.2L1563.4 385.2L1564.2 385.6L1566.3 382.6L1568.6 383.9L1570.7 380.9L1572.3 381.8L1574.3 378.8L1577.5 380.5L1579.5 377.5L1582.7 379.2L1584.8 376.2L1590.3 379.2L1591.9 376.9ZM1671.1 420.3L1669.5 422.6L1675.0 425.6L1673.0 428.6L1676.1 430.3L1674.0 433.3L1677.2 435.0L1675.1 438.0L1676.7 438.9L1674.6 441.9L1677.0 443.2L1674.9 446.2L1675.7 446.6L1673.6 449.6L1675.2 450.5L1673.1 453.5L1673.9 453.9L1671.8 456.9L1673.4 457.8L1671.3 460.8L1672.1 461.2L1670.1 464.2L1670.8 464.6L1668.8 467.6L1669.6 468.1L1667.5 471.1L1667.5 471.1L1665.4 474.1L1666.2 474.5L1664.1 477.5L1664.1 477.5L1662.1 480.5L1662.8 480.9L1660.8 484.0L1660.8 484.0L1658.7 487.0L1658.7 487.0L1656.6 490.0L1656.6 490.0L1654.6 493.0L1654.6 493.0L1652.5 496.0L1652.5 496.0L1650.4 499.0L1650.4 499.0L1648.3 502.0L1647.6 501.5L1645.5 504.5L1645.5 504.5L1643.4 507.5L1642.6 507.1L1640.6 510.1L1640.6 510.1L1638.5 513.1L1637.7 512.7L1635.6 515.7L1634.8 515.3L1632.8 518.3L1632.0 517.8L1629.9 520.8L1629.1 520.4L1627.1 523.4L1625.5 522.5L1623.4 525.5L1622.6 525.1L1620.6 528.1L1619.0 527.3L1616.9 530.3L1615.3 529.4L1613.3 532.4L1610.9 531.1L1608.8 534.1L1606.5 532.8L1604.4 535.8L1601.3 534.1L1599.2 537.1L1593.7 534.1L1591.8 536.8L1580.8 530.7L1582.7 528.1L1577.2 525.1L1579.2 522.1L1576.1 520.3L1578.2 517.3L1575.8 516.1L1577.9 513.0L1575.5 511.8L1577.6 508.8L1576.0 507.9L1578.1 504.9L1576.5 504.0L1578.6 501.0L1577.8 500.6L1579.9 497.6L1578.3 496.7L1580.4 493.7L1579.6 493.3L1581.6 490.3L1580.9 489.9L1582.9 486.9L1582.1 486.4L1584.2 483.4L1583.4 483.0L1585.5 480.0L1585.5 480.0L1587.6 477.0L1586.8 476.6L1588.9 473.6L1588.9 473.6L1590.9 470.6L1590.1 470.1L1592.2 467.1L1592.2 467.1L1594.3 464.1L1594.3 464.1L1596.4 461.1L1596.4 461.1L1598.4 458.1L1598.4 458.1L1600.5 455.1L1600.5 455.1L1602.6 452.1L1602.6 452.1L1604.6 449.1L1605.4 449.5L1607.5 446.5L1607.5 446.5L1609.6 443.5L1610.4 444.0L1612.4 441.0L1612.4 441.0L1614.5 438.0L1615.3 438.4L1617.4 435.4L1618.1 435.8L1620.2 432.8L1621.0 433.3L1623.1 430.2L1624.6 431.1L1626.7 428.1L1627.5 428.5L1629.6 425.5L1631.1 426.4L1633.2 423.4L1634.0 423.8L1636.1 420.8L1638.4 422.1L1640.5 419.1L1642.1 420.0L1644.2 417.0L1647.3 418.7L1649.4 415.7L1652.5 417.4L1654.6 414.4L1660.1 417.4L1661.7 415.1Z"/></clipPath><mask id="cres"><rect x="1246" y="147" width="1075" height="910" fill="#fff"/><path d="M1610.3 378.1L1608.7 380.4L1614.2 383.4L1612.1 386.4L1615.3 388.1L1613.2 391.1L1616.4 392.8L1614.3 395.8L1615.9 396.7L1613.8 399.7L1616.2 401.0L1614.1 404.0L1614.9 404.4L1612.8 407.4L1614.4 408.3L1612.3 411.3L1613.1 411.7L1611.0 414.7L1612.6 415.6L1610.5 418.6L1611.3 419.0L1609.2 422.0L1610.0 422.5L1607.9 425.5L1608.7 425.9L1606.7 428.9L1606.7 428.9L1604.6 431.9L1605.4 432.3L1603.3 435.3L1603.3 435.3L1601.2 438.3L1602.0 438.8L1600.0 441.8L1600.0 441.8L1597.9 444.8L1597.9 444.8L1595.8 447.8L1595.8 447.8L1593.7 450.8L1593.7 450.8L1591.7 453.8L1591.7 453.8L1589.6 456.8L1589.6 456.8L1587.5 459.8L1586.7 459.3L1584.7 462.4L1584.7 462.4L1582.6 465.4L1581.8 464.9L1579.7 467.9L1579.7 467.9L1577.7 470.9L1576.9 470.5L1574.8 473.5L1574.0 473.1L1571.9 476.1L1571.2 475.6L1569.1 478.6L1568.3 478.2L1566.2 481.2L1564.7 480.4L1562.6 483.4L1561.8 482.9L1559.7 485.9L1558.2 485.1L1556.1 488.1L1554.5 487.2L1552.4 490.2L1550.1 488.9L1548.0 491.9L1545.6 490.6L1543.6 493.6L1540.4 491.9L1538.4 494.9L1532.9 491.9L1531.0 494.6L1520.0 488.5L1521.8 485.9L1516.3 482.9L1518.4 479.9L1515.3 478.2L1517.3 475.2L1515.0 473.9L1517.0 470.9L1514.7 469.6L1516.8 466.6L1515.2 465.7L1517.3 462.7L1515.7 461.8L1517.8 458.8L1517.0 458.4L1519.0 455.4L1517.5 454.5L1519.5 451.5L1518.8 451.1L1520.8 448.1L1520.0 447.7L1522.1 444.7L1521.3 444.3L1523.4 441.2L1522.6 440.8L1524.7 437.8L1524.7 437.8L1526.7 434.8L1526.0 434.4L1528.0 431.4L1528.0 431.4L1530.1 428.4L1529.3 427.9L1531.4 424.9L1531.4 424.9L1533.5 421.9L1533.5 421.9L1535.5 418.9L1535.5 418.9L1537.6 415.9L1537.6 415.9L1539.7 412.9L1539.7 412.9L1541.7 409.9L1541.7 409.9L1543.8 406.9L1544.6 407.4L1546.7 404.4L1546.7 404.4L1548.7 401.4L1549.5 401.8L1551.6 398.8L1551.6 398.8L1553.7 395.8L1554.5 396.2L1556.5 393.2L1557.3 393.6L1559.4 390.6L1560.2 391.1L1562.3 388.1L1563.8 388.9L1565.9 385.9L1566.7 386.3L1568.8 383.3L1570.3 384.2L1572.4 381.2L1573.2 381.6L1575.3 378.6L1577.6 379.9L1579.7 376.9L1581.3 377.8L1583.3 374.8L1586.5 376.5L1588.5 373.5L1591.7 375.2L1593.8 372.2L1599.3 375.2L1600.9 372.9ZM1680.1 416.3L1678.5 418.6L1684.0 421.6L1682.0 424.6L1685.1 426.3L1683.0 429.3L1686.2 431.0L1684.1 434.0L1685.7 434.9L1683.6 437.9L1686.0 439.2L1683.9 442.2L1684.7 442.6L1682.6 445.6L1684.2 446.5L1682.1 449.5L1682.9 449.9L1680.8 452.9L1682.4 453.8L1680.3 456.8L1681.1 457.2L1679.1 460.2L1679.8 460.6L1677.8 463.6L1678.6 464.1L1676.5 467.1L1676.5 467.1L1674.4 470.1L1675.2 470.5L1673.1 473.5L1673.1 473.5L1671.1 476.5L1671.8 476.9L1669.8 480.0L1669.8 480.0L1667.7 483.0L1667.7 483.0L1665.6 486.0L1665.6 486.0L1663.6 489.0L1663.6 489.0L1661.5 492.0L1661.5 492.0L1659.4 495.0L1659.4 495.0L1657.3 498.0L1656.6 497.5L1654.5 500.5L1654.5 500.5L1652.4 503.5L1651.6 503.1L1649.6 506.1L1649.6 506.1L1647.5 509.1L1646.7 508.7L1644.6 511.7L1643.8 511.3L1641.8 514.3L1641.0 513.8L1638.9 516.8L1638.1 516.4L1636.1 519.4L1634.5 518.5L1632.4 521.5L1631.6 521.1L1629.6 524.1L1628.0 523.3L1625.9 526.3L1624.3 525.4L1622.3 528.4L1619.9 527.1L1617.8 530.1L1615.5 528.8L1613.4 531.8L1610.3 530.1L1608.2 533.1L1602.7 530.1L1600.8 532.8L1589.8 526.7L1591.7 524.1L1586.2 521.1L1588.2 518.1L1585.1 516.3L1587.2 513.3L1584.8 512.1L1586.9 509.0L1584.5 507.8L1586.6 504.8L1585.0 503.9L1587.1 500.9L1585.5 500.0L1587.6 497.0L1586.8 496.6L1588.9 493.6L1587.3 492.7L1589.4 489.7L1588.6 489.3L1590.6 486.3L1589.9 485.9L1591.9 482.9L1591.1 482.4L1593.2 479.4L1592.4 479.0L1594.5 476.0L1594.5 476.0L1596.6 473.0L1595.8 472.6L1597.9 469.6L1597.9 469.6L1599.9 466.6L1599.1 466.1L1601.2 463.1L1601.2 463.1L1603.3 460.1L1603.3 460.1L1605.4 457.1L1605.4 457.1L1607.4 454.1L1607.4 454.1L1609.5 451.1L1609.5 451.1L1611.6 448.1L1611.6 448.1L1613.6 445.1L1614.4 445.5L1616.5 442.5L1616.5 442.5L1618.6 439.5L1619.4 440.0L1621.4 437.0L1621.4 437.0L1623.5 434.0L1624.3 434.4L1626.4 431.4L1627.1 431.8L1629.2 428.8L1630.0 429.3L1632.1 426.2L1633.6 427.1L1635.7 424.1L1636.5 424.5L1638.6 421.5L1640.1 422.4L1642.2 419.4L1643.0 419.8L1645.1 416.8L1647.4 418.1L1649.5 415.1L1651.1 416.0L1653.2 413.0L1656.3 414.7L1658.4 411.7L1661.5 413.4L1663.6 410.4L1669.1 413.4L1670.7 411.1Z" fill="#000"/></mask></defs><g clip-path="url(#hclip)"><path d="M1601.3 382.1L1599.7 384.4L1605.2 387.4L1603.1 390.4L1606.3 392.1L1604.2 395.1L1607.4 396.8L1605.3 399.8L1606.9 400.7L1604.8 403.7L1607.2 405.0L1605.1 408.0L1605.9 408.4L1603.8 411.4L1605.4 412.3L1603.3 415.3L1604.1 415.7L1602.0 418.7L1603.6 419.6L1601.5 422.6L1602.3 423.0L1600.2 426.0L1601.0 426.5L1598.9 429.5L1599.7 429.9L1597.7 432.9L1597.7 432.9L1595.6 435.9L1596.4 436.3L1594.3 439.3L1594.3 439.3L1592.2 442.3L1593.0 442.8L1591.0 445.8L1591.0 445.8L1588.9 448.8L1588.9 448.8L1586.8 451.8L1586.8 451.8L1584.7 454.8L1584.7 454.8L1582.7 457.8L1582.7 457.8L1580.6 460.8L1580.6 460.8L1578.5 463.8L1577.7 463.3L1575.7 466.4L1575.7 466.4L1573.6 469.4L1572.8 468.9L1570.7 471.9L1570.7 471.9L1568.7 474.9L1567.9 474.5L1565.8 477.5L1565.0 477.1L1562.9 480.1L1562.2 479.6L1560.1 482.6L1559.3 482.2L1557.2 485.2L1555.7 484.4L1553.6 487.4L1552.8 486.9L1550.7 489.9L1549.2 489.1L1547.1 492.1L1545.5 491.2L1543.4 494.2L1541.1 492.9L1539.0 495.9L1536.6 494.6L1534.6 497.6L1531.4 495.9L1529.4 498.9L1523.9 495.9L1522.0 498.6L1511.0 492.5L1512.8 489.9L1507.3 486.9L1509.4 483.9L1506.3 482.2L1508.3 479.2L1506.0 477.9L1508.0 474.9L1505.7 473.6L1507.8 470.6L1506.2 469.7L1508.3 466.7L1506.7 465.8L1508.8 462.8L1508.0 462.4L1510.0 459.4L1508.5 458.5L1510.5 455.5L1509.8 455.1L1511.8 452.1L1511.0 451.7L1513.1 448.7L1512.3 448.3L1514.4 445.2L1513.6 444.8L1515.7 441.8L1515.7 441.8L1517.7 438.8L1517.0 438.4L1519.0 435.4L1519.0 435.4L1521.1 432.4L1520.3 431.9L1522.4 428.9L1522.4 428.9L1524.5 425.9L1524.5 425.9L1526.5 422.9L1526.5 422.9L1528.6 419.9L1528.6 419.9L1530.7 416.9L1530.7 416.9L1532.7 413.9L1532.7 413.9L1534.8 410.9L1535.6 411.4L1537.7 408.4L1537.7 408.4L1539.7 405.4L1540.5 405.8L1542.6 402.8L1542.6 402.8L1544.7 399.8L1545.5 400.2L1547.5 397.2L1548.3 397.6L1550.4 394.6L1551.2 395.1L1553.3 392.1L1554.8 392.9L1556.9 389.9L1557.7 390.3L1559.8 387.3L1561.3 388.2L1563.4 385.2L1564.2 385.6L1566.3 382.6L1568.6 383.9L1570.7 380.9L1572.3 381.8L1574.3 378.8L1577.5 380.5L1579.5 377.5L1582.7 379.2L1584.8 376.2L1590.3 379.2L1591.9 376.9ZM1671.1 420.3L1669.5 422.6L1675.0 425.6L1673.0 428.6L1676.1 430.3L1674.0 433.3L1677.2 435.0L1675.1 438.0L1676.7 438.9L1674.6 441.9L1677.0 443.2L1674.9 446.2L1675.7 446.6L1673.6 449.6L1675.2 450.5L1673.1 453.5L1673.9 453.9L1671.8 456.9L1673.4 457.8L1671.3 460.8L1672.1 461.2L1670.1 464.2L1670.8 464.6L1668.8 467.6L1669.6 468.1L1667.5 471.1L1667.5 471.1L1665.4 474.1L1666.2 474.5L1664.1 477.5L1664.1 477.5L1662.1 480.5L1662.8 480.9L1660.8 484.0L1660.8 484.0L1658.7 487.0L1658.7 487.0L1656.6 490.0L1656.6 490.0L1654.6 493.0L1654.6 493.0L1652.5 496.0L1652.5 496.0L1650.4 499.0L1650.4 499.0L1648.3 502.0L1647.6 501.5L1645.5 504.5L1645.5 504.5L1643.4 507.5L1642.6 507.1L1640.6 510.1L1640.6 510.1L1638.5 513.1L1637.7 512.7L1635.6 515.7L1634.8 515.3L1632.8 518.3L1632.0 517.8L1629.9 520.8L1629.1 520.4L1627.1 523.4L1625.5 522.5L1623.4 525.5L1622.6 525.1L1620.6 528.1L1619.0 527.3L1616.9 530.3L1615.3 529.4L1613.3 532.4L1610.9 531.1L1608.8 534.1L1606.5 532.8L1604.4 535.8L1601.3 534.1L1599.2 537.1L1593.7 534.1L1591.8 536.8L1580.8 530.7L1582.7 528.1L1577.2 525.1L1579.2 522.1L1576.1 520.3L1578.2 517.3L1575.8 516.1L1577.9 513.0L1575.5 511.8L1577.6 508.8L1576.0 507.9L1578.1 504.9L1576.5 504.0L1578.6 501.0L1577.8 500.6L1579.9 497.6L1578.3 496.7L1580.4 493.7L1579.6 493.3L1581.6 490.3L1580.9 489.9L1582.9 486.9L1582.1 486.4L1584.2 483.4L1583.4 483.0L1585.5 480.0L1585.5 480.0L1587.6 477.0L1586.8 476.6L1588.9 473.6L1588.9 473.6L1590.9 470.6L1590.1 470.1L1592.2 467.1L1592.2 467.1L1594.3 464.1L1594.3 464.1L1596.4 461.1L1596.4 461.1L1598.4 458.1L1598.4 458.1L1600.5 455.1L1600.5 455.1L1602.6 452.1L1602.6 452.1L1604.6 449.1L1605.4 449.5L1607.5 446.5L1607.5 446.5L1609.6 443.5L1610.4 444.0L1612.4 441.0L1612.4 441.0L1614.5 438.0L1615.3 438.4L1617.4 435.4L1618.1 435.8L1620.2 432.8L1621.0 433.3L1623.1 430.2L1624.6 431.1L1626.7 428.1L1627.5 428.5L1629.6 425.5L1631.1 426.4L1633.2 423.4L1634.0 423.8L1636.1 420.8L1638.4 422.1L1640.5 419.1L1642.1 420.0L1644.2 417.0L1647.3 418.7L1649.4 415.7L1652.5 417.4L1654.6 414.4L1660.1 417.4L1661.7 415.1Z" fill="url(#dots)" mask="url(#cres)" opacity="0.6"/></g><path d="M1561.4 359.5L1564.6 361.2L1558.7 369.7L1555.6 368.0ZM1562.7 363.9L1564.1 364.7L1562.2 367.5L1560.8 366.8ZM1486.4 468.2L1489.6 470.0L1483.7 478.4L1480.6 476.7ZM1487.6 472.9L1489.0 473.7L1487.0 476.5L1485.6 475.7ZM1631.1 397.6L1633.8 399.1L1628.0 407.6L1625.2 406.1ZM1627.5 399.4L1629.2 400.3L1627.3 403.1L1625.5 402.2ZM1556.1 506.3L1558.8 507.8L1553.0 516.3L1550.2 514.8ZM1552.3 508.3L1554.1 509.3L1552.1 512.1L1550.4 511.1ZM1698.9 434.7L1701.8 436.3L1696.0 444.8L1693.0 443.1ZM1695.3 436.5L1697.0 437.4L1695.1 440.2L1693.4 439.3ZM1623.9 543.4L1626.8 545.0L1621.0 553.5L1618.0 551.9ZM1620.1 545.4L1621.8 546.3L1619.9 549.2L1618.2 548.2Z" fill="#c4c4c4"/><polygon points="1953.6,549.4 2115.2,675.6 2099.7,699.6 2046.4,656.0 2012.0,699.6 1994.8,692.8 1974.2,692.8 1953.6,703.1 1936.4,722.0 1931.2,742.6 1934.6,765.0 1948.4,785.6 1919.2,828.6 1972.5,873.3 1957.0,895.6 1795.4,766.7" fill="#499600" /><polygon points="2037.8,664.2 2046.4,653.9 2099.7,698.6 2096.3,697.2" fill="#050c00" /><path d="M1960.4 555.2L1802.3 771.8M1967.3 560.4L2115.2 677.3M2008.6 601.6L2037.8 624.0M1860.7 677.3L1922.6 722.0M1812.6 749.5L1915.7 830.3M1919.2 828.6L1972.5 873.3M1963.9 883.6L1805.7 758.1M2046.4 646.3L2012.0 699.6M2108.3 680.7L2098.0 696.2M1965.6 878.4L1955.3 893.2" stroke="#163000" stroke-width="1.2" fill="none" stroke-dasharray="5 3"/><path d="M1991.4 632.6L1958.7 680.7M1996.2 636.0L1963.5 684.2M2001.0 639.4L1968.3 687.6M2005.8 642.9L1973.2 691.0M2010.6 646.3L1978.0 694.5M2015.5 649.8L1982.8 697.9M2020.3 653.2L1987.6 701.3M2025.1 656.6L1992.4 704.8M2029.9 660.1L1997.2 708.2M1857.3 687.6L1929.5 725.4M1864.8 693.1L1930.9 731.6M1872.4 698.6L1932.2 737.8M1880.0 704.1L1933.6 744.0M1887.5 709.6L1935.0 750.2M1895.1 715.1L1936.4 756.4M1902.7 720.6L1937.7 762.6M1910.2 726.1L1939.1 768.7M1917.8 731.6L1940.5 774.9" stroke="#163000" stroke-width="1.3" fill="none" stroke-dasharray="2.4 2.4"/><g stroke="#2b2b2b" stroke-width="1.2" fill="none"><path d="M1420.2 516.7L1598.5 615.0M1420.2 516.7l-1.8 4.6M1438.0 526.5l-1.8 4.6M1455.9 536.4l-1.8 4.6M1473.7 546.2l-1.8 4.6M1491.5 556.0l-1.8 4.6M1509.3 565.9l-1.8 4.6M1527.2 575.7l-1.8 4.6M1545.0 585.5l-1.8 4.6M1562.8 595.3l-1.8 4.6M1580.7 605.2l-1.8 4.6M1598.5 615.0l-1.8 4.6M1598.5 615.0L1986.2 918.0M1630.6 640.2l-4 4.4M1669.5 670.5l-4 4.4M1708.0 700.5l-4 4.4M1747.0 731.0l-4 4.4M1786.0 761.5l-4 4.4M1824.5 791.5l-4 4.4M1863.5 822.0l-4 4.4M1902.0 852.0l-4 4.4M1941.0 882.5l-4 4.4M1980.0 913.0l-4 4.4M1986.2 918.0L2151.3 692.7M1986.2 918.0l5 3.2M2002.7 895.5l5 3.2M2019.2 872.9l5 3.2M2035.7 850.4l5 3.2M2052.2 827.9l5 3.2M2068.8 805.4l5 3.2M2085.3 782.8l5 3.2M2101.8 760.3l5 3.2M2118.3 737.8l5 3.2M2134.8 715.2l5 3.2M2151.3 692.7l5 3.2"/></g><g class="ax"><text transform="translate(1396.2 546.2) scale(0.87 1)">0</text><text transform="translate(1421.7 554.9) scale(0.87 1)">15</text><text transform="translate(1438.4 565.1) scale(0.87 1)">30</text><text transform="translate(1454.4 574.6) scale(0.87 1)">45</text><text transform="translate(1472.6 584.7) scale(0.87 1)">60</text><text transform="translate(1489.3 594.2) scale(0.87 1)">75</text><text transform="translate(1507.5 602.9) scale(0.87 1)">90</text><text transform="translate(1532.3 613.1) scale(0.87 1)">105</text><text transform="translate(1549.7 622.6) scale(0.87 1)">120</text><text transform="translate(1567.2 631.3) scale(0.87 1)">135</text><text transform="translate(1583.2 641.5) scale(0.87 1)">150</text><text transform="translate(1613.0 669.9) scale(0.87 1)">90</text><text transform="translate(1652.3 700.4) scale(0.87 1)">70</text><text transform="translate(1690.5 731.3) scale(0.87 1)">50</text><text transform="translate(1730.0 761.8) scale(0.87 1)">30</text><text transform="translate(1769.6 792.2) scale(0.87 1)">10</text><text transform="translate(1809.1 822.7) scale(0.87 1)">-10</text><text transform="translate(1848.7 853.2) scale(0.87 1)">-30</text><text transform="translate(1888.2 883.6) scale(0.87 1)">-50</text><text transform="translate(1927.8 914.1) scale(0.87 1)">-70</text><text transform="translate(1967.3 944.6) scale(0.87 1)">-90</text><text transform="translate(2168.5 715.1) scale(0.87 1)">50</text><text transform="translate(2152.4 737.7) scale(0.87 1)">40</text><text transform="translate(2136.3 760.2) scale(0.87 1)">30</text><text transform="translate(2120.2 782.7) scale(0.87 1)">20</text><text transform="translate(2104.1 805.2) scale(0.87 1)">10</text><text transform="translate(2088.0 827.8) scale(0.87 1)">0</text><text transform="translate(2071.9 850.3) scale(0.87 1)">-10</text><text transform="translate(2055.8 872.8) scale(0.87 1)">-20</text><text transform="translate(2039.7 895.3) scale(0.87 1)">-30</text><text transform="translate(2023.6 917.9) scale(0.87 1)">-40</text><text transform="translate(2007.6 940.4) scale(0.87 1)">-50</text><text x="1485.7" y="626" style="font-size:29px">X</text><text x="1759.3" y="824.5" style="font-size:29px">Z</text><text x="2112.4" y="852.1" style="font-size:29px">Y</text></g></svg>
<div class="a" style="left:20.4px;top:1068.6px;width:1216.8px;height:834.4px;background:#7d7d7d;"></div>
<div class="a" style="left:21.8px;top:1070.0px;width:1214.0px;height:833.0px;background:#f0f0f0;"></div>
<svg style="left:21.8px;top:1070px" width="1214.0" height="833" viewBox="21.8 1070 1214.0 833"><rect x="58.1" y="1106.2" width="1153.4" height="796.8" fill="#000"/><rect x="58.1" y="1114.6" width="1153.4" height="788.4000000000001" fill="#55aa00"/><defs><path id="dp4" d="M67.9 1115.4L1211.0 1115.4M67.9 1125.9L1211.0 1125.9M67.9 1192.3L1211.0 1192.3M67.9 1202.7L1211.0 1202.7M67.9 1858.3L1211.0 1858.3M67.9 1868.9L1211.0 1868.9M67.9 1115.0L67.9 1903.0M178.6 1115.0L178.6 1903.0M1198.5 1115.0L1198.5 1903.0M1210.6 1115.0L1210.6 1903.0M58.1 1353.0L200.0 1353.0M1090.0 1353.0L1211.0 1353.0M58.1 1369.5L200.0 1369.5M1090.0 1369.5L1211.0 1369.5M58.1 1380.2L200.0 1380.2M1090.0 1380.2L1211.0 1380.2M58.1 1386.0L200.0 1386.0M1090.0 1386.0L1211.0 1386.0M58.1 1392.0L200.0 1392.0M1090.0 1392.0L1211.0 1392.0M58.1 1403.4L200.0 1403.4M1090.0 1403.4L1211.0 1403.4M58.1 1414.6L200.0 1414.6M1090.0 1414.6L1211.0 1414.6M58.1 1424.9L200.0 1424.9M1090.0 1424.9L1211.0 1424.9M58.1 1447.4L200.0 1447.4M1090.0 1447.4L1211.0 1447.4M58.1 1458.8L200.0 1458.8M1090.0 1458.8L1211.0 1458.8M58.1 1492.2L200.0 1492.2M1090.0 1492.2L1211.0 1492.2M58.1 1568.6L200.0 1568.6M1090.0 1568.6L1211.0 1568.6M58.1 1603.3L200.0 1603.3M1090.0 1603.3L1211.0 1603.3M58.1 1613.8L200.0 1613.8M1090.0 1613.8L1211.0 1613.8M58.1 1636.1L200.0 1636.1M1090.0 1636.1L1211.0 1636.1M58.1 1647.2L200.0 1647.2M1090.0 1647.2L1211.0 1647.2M58.1 1658.6L200.0 1658.6M1090.0 1658.6L1211.0 1658.6M58.1 1669.0L200.0 1669.0M1090.0 1669.0L1211.0 1669.0M58.1 1680.4L200.0 1680.4M1090.0 1680.4L1211.0 1680.4M58.1 1691.6L200.0 1691.6M1090.0 1691.6L1211.0 1691.6M58.1 1702.0L200.0 1702.0M1090.0 1702.0L1211.0 1702.0"/></defs><use href="#dp4" stroke="#fff" stroke-width="1.75" fill="none"/><use href="#dp4" stroke="#000" stroke-width="1.75" fill="none" stroke-dasharray="6 6"/><defs><pattern id="fpat" patternUnits="userSpaceOnUse" x="50" y="1241.4" width="12" height="22.62"><rect width="12" height="22.62" fill="#cdcdcd"/><path d="M0 0.1H12M0 5.75H12M0 11.41H12" stroke="#f6f6f6" stroke-width="1.8"/><path d="M0 0.1h6M6 5.75h6M0 11.41h6" stroke="#111" stroke-width="1.8"/></pattern><clipPath id="fclip"><path d="M129.2 1241.4L151.2 1241.4L151.2 1252.7L173.8 1252.7L173.8 1264L184.5 1264L184.5 1275.3L195.8 1275.3L195.8 1296.7L207.1 1296.7L207.1 1308L218.4 1308L218.4 1319.3L229.7 1319.3L229.7 1325.1L272.5 1325.1L272.5 1319.3L283.8 1319.3L283.8 1308L306.4 1308L306.4 1296.7L317.7 1296.7L317.7 1285.9L339.1 1285.9L339.1 1275.3L440.9 1275.3L440.9 1285.9L462.3 1285.9L462.3 1296.7L473.6 1296.7L473.6 1308L496.2 1308L496.2 1319.3L518.8 1319.3L518.8 1325.1L572.9 1325.1L572.9 1319.3L584.2 1319.3L584.2 1308L595.5 1308L595.5 1285.9L605.6 1285.9L605.6 1275.3L616.9 1275.3L616.9 1252.7L652.1 1252.7L652.1 1275.3L663.4 1275.3L663.4 1285.9L673.5 1285.9L673.5 1308L684.8 1308L684.8 1319.3L696.1 1319.3L696.1 1325.1L750.2 1325.1L750.2 1319.3L772.8 1319.3L772.8 1308L795.4 1308L795.4 1296.7L806.7 1296.7L806.7 1285.9L828.1 1285.9L828.1 1275.3L929.9 1275.3L929.9 1285.9L951.3 1285.9L951.3 1296.7L962.6 1296.7L962.6 1308L985.2 1308L985.2 1319.3L996.5 1319.3L996.5 1325.1L1039.3 1325.1L1039.3 1319.3L1050.6 1319.3L1050.6 1308L1061.9 1308L1061.9 1296.7L1073.2 1296.7L1073.2 1275.3L1084.5 1275.3L1084.5 1264L1095.2 1264L1095.2 1252.7L1117.8 1252.7L1117.8 1241.4L1139.8 1241.4L1139.8 1252.7L1151.1 1252.7L1151.1 1264L1162.4 1264L1162.4 1275.3L1173.8 1275.3L1173.8 1285.9L1185.1 1285.9L1185.1 1296.7L1195.3 1296.7L1195.3 1354.4L1183.1 1354.4L1183.1 1368.0L1172.2 1368.0L1172.2 1378.8L1161.4 1378.8L1161.4 1391.0L1139.7 1391.0L1139.7 1401.9L1127.5 1401.9L1127.5 1412.7L1116.6 1412.7L1116.6 1423.6L1107.1 1423.6L1107.1 1452.0L1116.6 1452.0L1116.6 1490.0L1127.5 1490.0L1127.5 1517.1L1139.7 1517.1L1139.7 1542.9L1127.5 1542.9L1127.5 1568.6L1116.6 1568.6L1116.6 1603.9L1107.1 1603.9L1107.1 1637.8L1116.6 1637.8L1116.6 1648.6L1127.5 1648.6L1127.5 1659.5L1139.7 1659.5L1139.7 1671.7L1161.4 1671.7L1161.4 1682.5L1172.2 1682.5L1172.2 1693.4L1183.1 1693.4L1183.1 1704.2L1195.3 1704.2L1195.3 1764.3L1185.1 1764.3L1185.1 1775.1L1173.8 1775.1L1173.8 1785.7L1162.4 1785.7L1162.4 1797L1151.1 1797L1151.1 1808.3L1139.8 1808.3L1139.8 1819.6L1117.8 1819.6L1117.8 1808.3L1095.2 1808.3L1095.2 1797.0L1084.5 1797.0L1084.5 1785.7L1073.2 1785.7L1073.2 1764.3L1061.9 1764.3L1061.9 1753.0L1050.6 1753.0L1050.6 1741.7L1039.3 1741.7L1039.3 1735.9L996.5 1735.9L996.5 1741.7L985.2 1741.7L985.2 1753.0L962.6 1753.0L962.6 1764.3L951.3 1764.3L951.3 1775.1L929.9 1775.1L929.9 1785.7L828.1 1785.7L828.1 1775.1L806.7 1775.1L806.7 1764.3L795.4 1764.3L795.4 1753.0L772.8 1753.0L772.8 1741.7L750.2 1741.7L750.2 1735.9L696.1 1735.9L696.1 1741.7L684.8 1741.7L684.8 1753.0L673.5 1753.0L673.5 1775.1L663.4 1775.1L663.4 1785.7L652.1 1785.7L652.1 1808.3L616.9 1808.3L616.9 1785.7L605.6 1785.7L605.6 1775.1L595.5 1775.1L595.5 1753.0L584.2 1753.0L584.2 1741.7L572.9 1741.7L572.9 1735.9L518.8 1735.9L518.8 1741.7L496.2 1741.7L496.2 1753.0L473.6 1753.0L473.6 1764.3L462.3 1764.3L462.3 1775.1L440.9 1775.1L440.9 1785.7L339.1 1785.7L339.1 1775.1L317.7 1775.1L317.7 1764.3L306.4 1764.3L306.4 1753.0L283.8 1753.0L283.8 1741.7L272.5 1741.7L272.5 1735.9L229.7 1735.9L229.7 1741.7L218.4 1741.7L218.4 1753.0L207.1 1753.0L207.1 1764.3L195.8 1764.3L195.8 1785.7L184.5 1785.7L184.5 1797.0L173.8 1797.0L173.8 1808.3L151.2 1808.3L151.2 1819.6L129.2 1819.6L129.2 1819.4L129.2 1808.1L106.6 1808.1L106.6 1796.7L95.2 1796.7L95.2 1785.4L83.9 1785.4L83.9 1764.1L72.6 1764.1L72.6 1718.8L83.9 1718.8L83.9 1708.8L95.2 1708.8L95.2 1697.4L106.6 1697.4L106.6 1686.1L117.9 1686.1L117.9 1676.1L139.2 1676.1L139.2 1664.8L151.8 1664.8L151.8 1653.5L161.9 1653.5L161.9 1630.8L151.8 1630.8L151.8 1608.2L139.2 1608.2L139.2 1598.1L129.2 1598.1L129.2 1586.8L117.9 1586.8L117.9 1541.6L129.2 1541.8L129.2 1530.5L139.2 1530.5L139.2 1519.1L151.8 1519.1L151.8 1507.8L161.9 1507.8L161.9 1496.5L173.2 1496.5L173.2 1431.2L161.9 1431.2L161.9 1419.8L150.6 1419.8L150.6 1408.5L139.2 1408.5L139.2 1397.2L117.9 1397.2L117.9 1385.9L106.6 1385.9L106.6 1374.6L95.2 1374.6L95.2 1363.3L83.9 1363.3L83.9 1352.0L72.6 1352.0L72.6 1296.7L83.9 1296.7L83.9 1285.9L95.2 1285.9L95.2 1275.3L106.6 1275.3L106.6 1264.0L117.9 1264.0L117.9 1252.7L129.2 1252.7L129.2 1241.4Z"/></clipPath></defs><path d="M129.2 1241.4L151.2 1241.4L151.2 1252.7L173.8 1252.7L173.8 1264L184.5 1264L184.5 1275.3L195.8 1275.3L195.8 1296.7L207.1 1296.7L207.1 1308L218.4 1308L218.4 1319.3L229.7 1319.3L229.7 1325.1L272.5 1325.1L272.5 1319.3L283.8 1319.3L283.8 1308L306.4 1308L306.4 1296.7L317.7 1296.7L317.7 1285.9L339.1 1285.9L339.1 1275.3L440.9 1275.3L440.9 1285.9L462.3 1285.9L462.3 1296.7L473.6 1296.7L473.6 1308L496.2 1308L496.2 1319.3L518.8 1319.3L518.8 1325.1L572.9 1325.1L572.9 1319.3L584.2 1319.3L584.2 1308L595.5 1308L595.5 1285.9L605.6 1285.9L605.6 1275.3L616.9 1275.3L616.9 1252.7L652.1 1252.7L652.1 1275.3L663.4 1275.3L663.4 1285.9L673.5 1285.9L673.5 1308L684.8 1308L684.8 1319.3L696.1 1319.3L696.1 1325.1L750.2 1325.1L750.2 1319.3L772.8 1319.3L772.8 1308L795.4 1308L795.4 1296.7L806.7 1296.7L806.7 1285.9L828.1 1285.9L828.1 1275.3L929.9 1275.3L929.9 1285.9L951.3 1285.9L951.3 1296.7L962.6 1296.7L962.6 1308L985.2 1308L985.2 1319.3L996.5 1319.3L996.5 1325.1L1039.3 1325.1L1039.3 1319.3L1050.6 1319.3L1050.6 1308L1061.9 1308L1061.9 1296.7L1073.2 1296.7L1073.2 1275.3L1084.5 1275.3L1084.5 1264L1095.2 1264L1095.2 1252.7L1117.8 1252.7L1117.8 1241.4L1139.8 1241.4L1139.8 1252.7L1151.1 1252.7L1151.1 1264L1162.4 1264L1162.4 1275.3L1173.8 1275.3L1173.8 1285.9L1185.1 1285.9L1185.1 1296.7L1195.3 1296.7L1195.3 1354.4L1183.1 1354.4L1183.1 1368.0L1172.2 1368.0L1172.2 1378.8L1161.4 1378.8L1161.4 1391.0L1139.7 1391.0L1139.7 1401.9L1127.5 1401.9L1127.5 1412.7L1116.6 1412.7L1116.6 1423.6L1107.1 1423.6L1107.1 1452.0L1116.6 1452.0L1116.6 1490.0L1127.5 1490.0L1127.5 1517.1L1139.7 1517.1L1139.7 1542.9L1127.5 1542.9L1127.5 1568.6L1116.6 1568.6L1116.6 1603.9L1107.1 1603.9L1107.1 1637.8L1116.6 1637.8L1116.6 1648.6L1127.5 1648.6L1127.5 1659.5L1139.7 1659.5L1139.7 1671.7L1161.4 1671.7L1161.4 1682.5L1172.2 1682.5L1172.2 1693.4L1183.1 1693.4L1183.1 1704.2L1195.3 1704.2L1195.3 1764.3L1185.1 1764.3L1185.1 1775.1L1173.8 1775.1L1173.8 1785.7L1162.4 1785.7L1162.4 1797L1151.1 1797L1151.1 1808.3L1139.8 1808.3L1139.8 1819.6L1117.8 1819.6L1117.8 1808.3L1095.2 1808.3L1095.2 1797.0L1084.5 1797.0L1084.5 1785.7L1073.2 1785.7L1073.2 1764.3L1061.9 1764.3L1061.9 1753.0L1050.6 1753.0L1050.6 1741.7L1039.3 1741.7L1039.3 1735.9L996.5 1735.9L996.5 1741.7L985.2 1741.7L985.2 1753.0L962.6 1753.0L962.6 1764.3L951.3 1764.3L951.3 1775.1L929.9 1775.1L929.9 1785.7L828.1 1785.7L828.1 1775.1L806.7 1775.1L806.7 1764.3L795.4 1764.3L795.4 1753.0L772.8 1753.0L772.8 1741.7L750.2 1741.7L750.2 1735.9L696.1 1735.9L696.1 1741.7L684.8 1741.7L684.8 1753.0L673.5 1753.0L673.5 1775.1L663.4 1775.1L663.4 1785.7L652.1 1785.7L652.1 1808.3L616.9 1808.3L616.9 1785.7L605.6 1785.7L605.6 1775.1L595.5 1775.1L595.5 1753.0L584.2 1753.0L584.2 1741.7L572.9 1741.7L572.9 1735.9L518.8 1735.9L518.8 1741.7L496.2 1741.7L496.2 1753.0L473.6 1753.0L473.6 1764.3L462.3 1764.3L462.3 1775.1L440.9 1775.1L440.9 1785.7L339.1 1785.7L339.1 1775.1L317.7 1775.1L317.7 1764.3L306.4 1764.3L306.4 1753.0L283.8 1753.0L283.8 1741.7L272.5 1741.7L272.5 1735.9L229.7 1735.9L229.7 1741.7L218.4 1741.7L218.4 1753.0L207.1 1753.0L207.1 1764.3L195.8 1764.3L195.8 1785.7L184.5 1785.7L184.5 1797.0L173.8 1797.0L173.8 1808.3L151.2 1808.3L151.2 1819.6L129.2 1819.6L129.2 1819.4L129.2 1808.1L106.6 1808.1L106.6 1796.7L95.2 1796.7L95.2 1785.4L83.9 1785.4L83.9 1764.1L72.6 1764.1L72.6 1718.8L83.9 1718.8L83.9 1708.8L95.2 1708.8L95.2 1697.4L106.6 1697.4L106.6 1686.1L117.9 1686.1L117.9 1676.1L139.2 1676.1L139.2 1664.8L151.8 1664.8L151.8 1653.5L161.9 1653.5L161.9 1630.8L151.8 1630.8L151.8 1608.2L139.2 1608.2L139.2 1598.1L129.2 1598.1L129.2 1586.8L117.9 1586.8L117.9 1541.6L129.2 1541.8L129.2 1530.5L139.2 1530.5L139.2 1519.1L151.8 1519.1L151.8 1507.8L161.9 1507.8L161.9 1496.5L173.2 1496.5L173.2 1431.2L161.9 1431.2L161.9 1419.8L150.6 1419.8L150.6 1408.5L139.2 1408.5L139.2 1397.2L117.9 1397.2L117.9 1385.9L106.6 1385.9L106.6 1374.6L95.2 1374.6L95.2 1363.3L83.9 1363.3L83.9 1352.0L72.6 1352.0L72.6 1296.7L83.9 1296.7L83.9 1285.9L95.2 1285.9L95.2 1275.3L106.6 1275.3L106.6 1264.0L117.9 1264.0L117.9 1252.7L129.2 1252.7L129.2 1241.4Z" fill="url(#fpat)"/><path d="M95.2 1296.7H129.2V1341.9H95.2ZM95.2 1719H129.2V1764.3H95.2ZM1140 1296.7H1174V1341.9H1140ZM1140 1719H1174V1764.3H1140ZM129.2 1252.7H173.8V1296.7H129.2ZM129.2 1764.3H173.8V1808.3H129.2ZM1095.2 1252.7H1139.8V1296.7H1095.2ZM1095.2 1764.3H1139.8V1808.3H1095.2ZM606 1462H663V1598H606ZM606 1410H663V1440H606ZM606 1620H663V1650H606ZM117.9 1553H173.8V1598H117.9ZM1062 1496H1107V1564H1062ZM350 1276H430V1285.5H350ZM350 1775.5H430V1785.5H350ZM840 1276H920V1285.5H840ZM840 1775.5H920V1785.5H840Z" fill="#cdcdcd" clip-path="url(#fclip)"/><g clip-path="url(#fclip)"><defs><path id="dp5" d="M95.2 1241.0L95.2 1820.0M117.9 1241.0L117.9 1820.0M129.2 1241.0L129.2 1820.0M151.2 1241.0L151.2 1820.0M173.8 1241.0L173.8 1820.0M184.5 1241.0L184.5 1820.0M195.8 1241.0L195.8 1820.0M207.1 1241.0L207.1 1820.0M595.5 1241.0L595.5 1820.0M606.0 1241.0L606.0 1820.0M616.9 1241.0L616.9 1820.0M652.0 1241.0L652.0 1820.0M663.0 1241.0L663.0 1820.0M673.5 1241.0L673.5 1820.0M1062.0 1241.0L1062.0 1820.0M1073.0 1241.0L1073.0 1820.0M1084.0 1241.0L1084.0 1820.0M1095.2 1241.0L1095.2 1820.0M1117.8 1241.0L1117.8 1820.0M1139.8 1241.0L1139.8 1820.0M1151.1 1241.0L1151.1 1820.0M1174.0 1241.0L1174.0 1820.0"/></defs><use href="#dp5" stroke="#fff" stroke-width="1.75" fill="none"/><use href="#dp5" stroke="#000" stroke-width="1.75" fill="none" stroke-dasharray="6 6"/></g><path d="M129.2 1241.4L151.2 1241.4L151.2 1252.7L173.8 1252.7L173.8 1264L184.5 1264L184.5 1275.3L195.8 1275.3L195.8 1296.7L207.1 1296.7L207.1 1308L218.4 1308L218.4 1319.3L229.7 1319.3L229.7 1325.1L272.5 1325.1L272.5 1319.3L283.8 1319.3L283.8 1308L306.4 1308L306.4 1296.7L317.7 1296.7L317.7 1285.9L339.1 1285.9L339.1 1275.3L440.9 1275.3L440.9 1285.9L462.3 1285.9L462.3 1296.7L473.6 1296.7L473.6 1308L496.2 1308L496.2 1319.3L518.8 1319.3L518.8 1325.1L572.9 1325.1L572.9 1319.3L584.2 1319.3L584.2 1308L595.5 1308L595.5 1285.9L605.6 1285.9L605.6 1275.3L616.9 1275.3L616.9 1252.7L652.1 1252.7L652.1 1275.3L663.4 1275.3L663.4 1285.9L673.5 1285.9L673.5 1308L684.8 1308L684.8 1319.3L696.1 1319.3L696.1 1325.1L750.2 1325.1L750.2 1319.3L772.8 1319.3L772.8 1308L795.4 1308L795.4 1296.7L806.7 1296.7L806.7 1285.9L828.1 1285.9L828.1 1275.3L929.9 1275.3L929.9 1285.9L951.3 1285.9L951.3 1296.7L962.6 1296.7L962.6 1308L985.2 1308L985.2 1319.3L996.5 1319.3L996.5 1325.1L1039.3 1325.1L1039.3 1319.3L1050.6 1319.3L1050.6 1308L1061.9 1308L1061.9 1296.7L1073.2 1296.7L1073.2 1275.3L1084.5 1275.3L1084.5 1264L1095.2 1264L1095.2 1252.7L1117.8 1252.7L1117.8 1241.4L1139.8 1241.4L1139.8 1252.7L1151.1 1252.7L1151.1 1264L1162.4 1264L1162.4 1275.3L1173.8 1275.3L1173.8 1285.9L1185.1 1285.9L1185.1 1296.7L1195.3 1296.7L1195.3 1354.4L1183.1 1354.4L1183.1 1368.0L1172.2 1368.0L1172.2 1378.8L1161.4 1378.8L1161.4 1391.0L1139.7 1391.0L1139.7 1401.9L1127.5 1401.9L1127.5 1412.7L1116.6 1412.7L1116.6 1423.6L1107.1 1423.6L1107.1 1452.0L1116.6 1452.0L1116.6 1490.0L1127.5 1490.0L1127.5 1517.1L1139.7 1517.1L1139.7 1542.9L1127.5 1542.9L1127.5 1568.6L1116.6 1568.6L1116.6 1603.9L1107.1 1603.9L1107.1 1637.8L1116.6 1637.8L1116.6 1648.6L1127.5 1648.6L1127.5 1659.5L1139.7 1659.5L1139.7 1671.7L1161.4 1671.7L1161.4 1682.5L1172.2 1682.5L1172.2 1693.4L1183.1 1693.4L1183.1 1704.2L1195.3 1704.2L1195.3 1764.3L1185.1 1764.3L1185.1 1775.1L1173.8 1775.1L1173.8 1785.7L1162.4 1785.7L1162.4 1797L1151.1 1797L1151.1 1808.3L1139.8 1808.3L1139.8 1819.6L1117.8 1819.6L1117.8 1808.3L1095.2 1808.3L1095.2 1797.0L1084.5 1797.0L1084.5 1785.7L1073.2 1785.7L1073.2 1764.3L1061.9 1764.3L1061.9 1753.0L1050.6 1753.0L1050.6 1741.7L1039.3 1741.7L1039.3 1735.9L996.5 1735.9L996.5 1741.7L985.2 1741.7L985.2 1753.0L962.6 1753.0L962.6 1764.3L951.3 1764.3L951.3 1775.1L929.9 1775.1L929.9 1785.7L828.1 1785.7L828.1 1775.1L806.7 1775.1L806.7 1764.3L795.4 1764.3L795.4 1753.0L772.8 1753.0L772.8 1741.7L750.2 1741.7L750.2 1735.9L696.1 1735.9L696.1 1741.7L684.8 1741.7L684.8 1753.0L673.5 1753.0L673.5 1775.1L663.4 1775.1L663.4 1785.7L652.1 1785.7L652.1 1808.3L616.9 1808.3L616.9 1785.7L605.6 1785.7L605.6 1775.1L595.5 1775.1L595.5 1753.0L584.2 1753.0L584.2 1741.7L572.9 1741.7L572.9 1735.9L518.8 1735.9L518.8 1741.7L496.2 1741.7L496.2 1753.0L473.6 1753.0L473.6 1764.3L462.3 1764.3L462.3 1775.1L440.9 1775.1L440.9 1785.7L339.1 1785.7L339.1 1775.1L317.7 1775.1L317.7 1764.3L306.4 1764.3L306.4 1753.0L283.8 1753.0L283.8 1741.7L272.5 1741.7L272.5 1735.9L229.7 1735.9L229.7 1741.7L218.4 1741.7L218.4 1753.0L207.1 1753.0L207.1 1764.3L195.8 1764.3L195.8 1785.7L184.5 1785.7L184.5 1797.0L173.8 1797.0L173.8 1808.3L151.2 1808.3L151.2 1819.6L129.2 1819.6L129.2 1819.4L129.2 1808.1L106.6 1808.1L106.6 1796.7L95.2 1796.7L95.2 1785.4L83.9 1785.4L83.9 1764.1L72.6 1764.1L72.6 1718.8L83.9 1718.8L83.9 1708.8L95.2 1708.8L95.2 1697.4L106.6 1697.4L106.6 1686.1L117.9 1686.1L117.9 1676.1L139.2 1676.1L139.2 1664.8L151.8 1664.8L151.8 1653.5L161.9 1653.5L161.9 1630.8L151.8 1630.8L151.8 1608.2L139.2 1608.2L139.2 1598.1L129.2 1598.1L129.2 1586.8L117.9 1586.8L117.9 1541.6L129.2 1541.8L129.2 1530.5L139.2 1530.5L139.2 1519.1L151.8 1519.1L151.8 1507.8L161.9 1507.8L161.9 1496.5L173.2 1496.5L173.2 1431.2L161.9 1431.2L161.9 1419.8L150.6 1419.8L150.6 1408.5L139.2 1408.5L139.2 1397.2L117.9 1397.2L117.9 1385.9L106.6 1385.9L106.6 1374.6L95.2 1374.6L95.2 1363.3L83.9 1363.3L83.9 1352.0L72.6 1352.0L72.6 1296.7L83.9 1296.7L83.9 1285.9L95.2 1285.9L95.2 1275.3L106.6 1275.3L106.6 1264.0L117.9 1264.0L117.9 1252.7L129.2 1252.7L129.2 1241.4Z" fill="none" stroke="#fff" stroke-width="1.9"/><path d="M129.2 1241.4L151.2 1241.4L151.2 1252.7L173.8 1252.7L173.8 1264L184.5 1264L184.5 1275.3L195.8 1275.3L195.8 1296.7L207.1 1296.7L207.1 1308L218.4 1308L218.4 1319.3L229.7 1319.3L229.7 1325.1L272.5 1325.1L272.5 1319.3L283.8 1319.3L283.8 1308L306.4 1308L306.4 1296.7L317.7 1296.7L317.7 1285.9L339.1 1285.9L339.1 1275.3L440.9 1275.3L440.9 1285.9L462.3 1285.9L462.3 1296.7L473.6 1296.7L473.6 1308L496.2 1308L496.2 1319.3L518.8 1319.3L518.8 1325.1L572.9 1325.1L572.9 1319.3L584.2 1319.3L584.2 1308L595.5 1308L595.5 1285.9L605.6 1285.9L605.6 1275.3L616.9 1275.3L616.9 1252.7L652.1 1252.7L652.1 1275.3L663.4 1275.3L663.4 1285.9L673.5 1285.9L673.5 1308L684.8 1308L684.8 1319.3L696.1 1319.3L696.1 1325.1L750.2 1325.1L750.2 1319.3L772.8 1319.3L772.8 1308L795.4 1308L795.4 1296.7L806.7 1296.7L806.7 1285.9L828.1 1285.9L828.1 1275.3L929.9 1275.3L929.9 1285.9L951.3 1285.9L951.3 1296.7L962.6 1296.7L962.6 1308L985.2 1308L985.2 1319.3L996.5 1319.3L996.5 1325.1L1039.3 1325.1L1039.3 1319.3L1050.6 1319.3L1050.6 1308L1061.9 1308L1061.9 1296.7L1073.2 1296.7L1073.2 1275.3L1084.5 1275.3L1084.5 1264L1095.2 1264L1095.2 1252.7L1117.8 1252.7L1117.8 1241.4L1139.8 1241.4L1139.8 1252.7L1151.1 1252.7L1151.1 1264L1162.4 1264L1162.4 1275.3L1173.8 1275.3L1173.8 1285.9L1185.1 1285.9L1185.1 1296.7L1195.3 1296.7L1195.3 1354.4L1183.1 1354.4L1183.1 1368.0L1172.2 1368.0L1172.2 1378.8L1161.4 1378.8L1161.4 1391.0L1139.7 1391.0L1139.7 1401.9L1127.5 1401.9L1127.5 1412.7L1116.6 1412.7L1116.6 1423.6L1107.1 1423.6L1107.1 1452.0L1116.6 1452.0L1116.6 1490.0L1127.5 1490.0L1127.5 1517.1L1139.7 1517.1L1139.7 1542.9L1127.5 1542.9L1127.5 1568.6L1116.6 1568.6L1116.6 1603.9L1107.1 1603.9L1107.1 1637.8L1116.6 1637.8L1116.6 1648.6L1127.5 1648.6L1127.5 1659.5L1139.7 1659.5L1139.7 1671.7L1161.4 1671.7L1161.4 1682.5L1172.2 1682.5L1172.2 1693.4L1183.1 1693.4L1183.1 1704.2L1195.3 1704.2L1195.3 1764.3L1185.1 1764.3L1185.1 1775.1L1173.8 1775.1L1173.8 1785.7L1162.4 1785.7L1162.4 1797L1151.1 1797L1151.1 1808.3L1139.8 1808.3L1139.8 1819.6L1117.8 1819.6L1117.8 1808.3L1095.2 1808.3L1095.2 1797.0L1084.5 1797.0L1084.5 1785.7L1073.2 1785.7L1073.2 1764.3L1061.9 1764.3L1061.9 1753.0L1050.6 1753.0L1050.6 1741.7L1039.3 1741.7L1039.3 1735.9L996.5 1735.9L996.5 1741.7L985.2 1741.7L985.2 1753.0L962.6 1753.0L962.6 1764.3L951.3 1764.3L951.3 1775.1L929.9 1775.1L929.9 1785.7L828.1 1785.7L828.1 1775.1L806.7 1775.1L806.7 1764.3L795.4 1764.3L795.4 1753.0L772.8 1753.0L772.8 1741.7L750.2 1741.7L750.2 1735.9L696.1 1735.9L696.1 1741.7L684.8 1741.7L684.8 1753.0L673.5 1753.0L673.5 1775.1L663.4 1775.1L663.4 1785.7L652.1 1785.7L652.1 1808.3L616.9 1808.3L616.9 1785.7L605.6 1785.7L605.6 1775.1L595.5 1775.1L595.5 1753.0L584.2 1753.0L584.2 1741.7L572.9 1741.7L572.9 1735.9L518.8 1735.9L518.8 1741.7L496.2 1741.7L496.2 1753.0L473.6 1753.0L473.6 1764.3L462.3 1764.3L462.3 1775.1L440.9 1775.1L440.9 1785.7L339.1 1785.7L339.1 1775.1L317.7 1775.1L317.7 1764.3L306.4 1764.3L306.4 1753.0L283.8 1753.0L283.8 1741.7L272.5 1741.7L272.5 1735.9L229.7 1735.9L229.7 1741.7L218.4 1741.7L218.4 1753.0L207.1 1753.0L207.1 1764.3L195.8 1764.3L195.8 1785.7L184.5 1785.7L184.5 1797.0L173.8 1797.0L173.8 1808.3L151.2 1808.3L151.2 1819.6L129.2 1819.6L129.2 1819.4L129.2 1808.1L106.6 1808.1L106.6 1796.7L95.2 1796.7L95.2 1785.4L83.9 1785.4L83.9 1764.1L72.6 1764.1L72.6 1718.8L83.9 1718.8L83.9 1708.8L95.2 1708.8L95.2 1697.4L106.6 1697.4L106.6 1686.1L117.9 1686.1L117.9 1676.1L139.2 1676.1L139.2 1664.8L151.8 1664.8L151.8 1653.5L161.9 1653.5L161.9 1630.8L151.8 1630.8L151.8 1608.2L139.2 1608.2L139.2 1598.1L129.2 1598.1L129.2 1586.8L117.9 1586.8L117.9 1541.6L129.2 1541.8L129.2 1530.5L139.2 1530.5L139.2 1519.1L151.8 1519.1L151.8 1507.8L161.9 1507.8L161.9 1496.5L173.2 1496.5L173.2 1431.2L161.9 1431.2L161.9 1419.8L150.6 1419.8L150.6 1408.5L139.2 1408.5L139.2 1397.2L117.9 1397.2L117.9 1385.9L106.6 1385.9L106.6 1374.6L95.2 1374.6L95.2 1363.3L83.9 1363.3L83.9 1352.0L72.6 1352.0L72.6 1296.7L83.9 1296.7L83.9 1285.9L95.2 1285.9L95.2 1275.3L106.6 1275.3L106.6 1264.0L117.9 1264.0L117.9 1252.7L129.2 1252.7L129.2 1241.4Z" fill="none" stroke="#000" stroke-width="1.9" stroke-dasharray="6 6"/><path d="M229.7 1325.1H272.5V1330.8H229.7ZM229.7 1730.2H272.5V1735.9H229.7ZM996.5 1325.1H1039.3V1330.8H996.5ZM996.5 1730.2H1039.3V1735.9H996.5ZM518.8 1325.1H572.9V1330.8H518.8ZM518.8 1730.2H572.9V1735.9H518.8ZM696.1 1325.1H750.2V1330.8H696.1ZM696.1 1730.2H750.2V1735.9H696.1Z" fill="#000"/><path d="M129.2 1309.8H151.8V1341.7H129.2ZM151.8 1320.0H161.9V1330.6H151.8ZM129.2 1719.3H151.8V1751.2H129.2ZM151.8 1730.4H161.9V1741.0H151.8ZM629.9 1309.8H649.5V1341.7H629.9ZM617.5 1320.0H629.9V1330.6H617.5ZM629.9 1719.3H649.5V1751.2H629.9ZM617.5 1730.4H629.9V1741.0H617.5ZM1117.2 1309.8H1138.6V1341.7H1117.2ZM1105.0 1320.0H1117.2V1330.6H1105.0ZM1117.2 1719.3H1138.6V1751.2H1117.2ZM1105.0 1730.4H1117.2V1741.0H1105.0Z" fill="#55aa00"/><path d="M337.7 1331.9H439.5V1343.2H337.7ZM303.8 1343.2H473.4V1354.5H303.8ZM286.8 1354.5H490.4V1365.8H286.8ZM269.8 1365.8H507.4V1377.1H269.8ZM258.5 1377.1H518.7V1388.4H258.5ZM247.2 1388.4H530.0V1399.7H247.2ZM235.9 1399.7H541.3V1411.0H235.9ZM224.6 1411.1H552.6V1422.4H224.6ZM219.0 1422.4H558.2V1433.7H219.0ZM213.3 1433.7H563.9V1445.0H213.3ZM207.6 1445.0H569.6V1456.3H207.6ZM202.0 1456.3H575.2V1467.6H202.0ZM202.0 1467.6H575.2V1478.9H202.0ZM196.3 1478.9H580.9V1490.2H196.3ZM196.3 1490.2H580.9V1501.5H196.3ZM190.7 1501.5H586.5V1512.8H190.7ZM190.7 1512.8H586.5V1524.2H190.7ZM190.7 1524.2H586.5V1535.5H190.7ZM190.7 1535.5H586.5V1546.8H190.7ZM190.7 1546.8H586.5V1558.1H190.7ZM196.3 1558.1H580.9V1569.4H196.3ZM196.3 1569.4H580.9V1580.7H196.3ZM202.0 1580.7H575.2V1592.0H202.0ZM202.0 1592.0H575.2V1603.3H202.0ZM207.6 1603.3H569.6V1614.6H207.6ZM213.3 1614.6H563.9V1625.9H213.3ZM219.0 1625.9H558.2V1637.2H219.0ZM224.6 1637.2H552.6V1648.6H224.6ZM235.9 1648.6H541.3V1659.9H235.9ZM241.6 1659.9H535.6V1671.2H241.6ZM252.9 1671.2H524.3V1682.5H252.9ZM269.8 1682.5H507.4V1693.8H269.8ZM281.2 1693.8H496.0V1705.1H281.2ZM303.8 1705.1H473.4V1716.4H303.8ZM332.1 1716.4H445.2V1727.7H332.1ZM831.7 1331.9H933.5V1343.2H831.7ZM797.8 1343.2H967.4V1354.5H797.8ZM780.8 1354.5H984.4V1365.8H780.8ZM763.8 1365.8H1001.4V1377.1H763.8ZM752.5 1377.1H1012.7V1388.4H752.5ZM741.2 1388.4H1024.0V1399.7H741.2ZM729.9 1399.7H1035.3V1411.0H729.9ZM718.6 1411.1H1046.6V1422.4H718.6ZM713.0 1422.4H1052.2V1433.7H713.0ZM707.3 1433.7H1057.9V1445.0H707.3ZM701.6 1445.0H1063.6V1456.3H701.6ZM696.0 1456.3H1069.2V1467.6H696.0ZM696.0 1467.6H1069.2V1478.9H696.0ZM690.3 1478.9H1074.9V1490.2H690.3ZM690.3 1490.2H1074.9V1501.5H690.3ZM684.7 1501.5H1080.5V1512.8H684.7ZM684.7 1512.8H1080.5V1524.2H684.7ZM684.7 1524.2H1080.5V1535.5H684.7ZM684.7 1535.5H1080.5V1546.8H684.7ZM684.7 1546.8H1080.5V1558.1H684.7ZM690.3 1558.1H1074.9V1569.4H690.3ZM690.3 1569.4H1074.9V1580.7H690.3ZM696.0 1580.7H1069.2V1592.0H696.0ZM696.0 1592.0H1069.2V1603.3H696.0ZM701.6 1603.3H1063.6V1614.6H701.6ZM707.3 1614.6H1057.9V1625.9H707.3ZM713.0 1625.9H1052.2V1637.2H713.0ZM718.6 1637.2H1046.6V1648.6H718.6ZM729.9 1648.6H1035.3V1659.9H729.9ZM735.6 1659.9H1029.6V1671.2H735.6ZM746.9 1671.2H1018.3V1682.5H746.9ZM763.8 1682.5H1001.4V1693.8H763.8ZM775.2 1693.8H990.0V1705.1H775.2ZM797.8 1705.1H967.4V1716.4H797.8ZM826.1 1716.4H939.1V1727.7H826.1Z" fill="#000"/><rect x="1078.6" y="1496.8" width="4.2" height="66.4" fill="#55aa00"/><rect x="188" y="1508" width="4.6" height="44" fill="#55aa00"/><text x="65.6" y="1900.6" font-size="14.5" fill="#e8e8e8" text-anchor="middle">Y</text><path class="tk" d="M62.4 1097.4V1106.2M70.9 1097.4V1106.2M79.5 1097.4V1106.2M88.0 1088V1106.2M96.5 1097.4V1106.2M105.1 1097.4V1106.2M113.6 1097.4V1106.2M122.2 1097.4V1106.2M130.7 1088V1106.2M139.2 1097.4V1106.2M147.8 1097.4V1106.2M156.3 1097.4V1106.2M164.8 1097.4V1106.2M173.4 1088V1106.2M181.9 1097.4V1106.2M190.5 1097.4V1106.2M199.0 1097.4V1106.2M207.5 1097.4V1106.2M216.1 1088V1106.2M224.6 1097.4V1106.2M233.2 1097.4V1106.2M241.7 1097.4V1106.2M250.2 1097.4V1106.2M258.8 1088V1106.2M267.3 1097.4V1106.2M275.9 1097.4V1106.2M284.4 1097.4V1106.2M292.9 1097.4V1106.2M301.5 1088V1106.2M310.0 1097.4V1106.2M318.5 1097.4V1106.2M327.1 1097.4V1106.2M335.6 1097.4V1106.2M344.2 1088V1106.2M352.7 1097.4V1106.2M361.2 1097.4V1106.2M369.8 1097.4V1106.2M378.3 1097.4V1106.2M386.9 1088V1106.2M395.4 1097.4V1106.2M403.9 1097.4V1106.2M412.5 1097.4V1106.2M421.0 1097.4V1106.2M429.6 1088V1106.2M438.1 1097.4V1106.2M446.6 1097.4V1106.2M455.2 1097.4V1106.2M463.7 1097.4V1106.2M472.2 1088V1106.2M480.8 1097.4V1106.2M489.3 1097.4V1106.2M497.9 1097.4V1106.2M506.4 1097.4V1106.2M514.9 1088V1106.2M523.5 1097.4V1106.2M532.0 1097.4V1106.2M540.6 1097.4V1106.2M549.1 1097.4V1106.2M557.6 1088V1106.2M566.2 1097.4V1106.2M574.7 1097.4V1106.2M583.3 1097.4V1106.2M591.8 1097.4V1106.2M600.3 1088V1106.2M608.9 1097.4V1106.2M617.4 1097.4V1106.2M626.0 1097.4V1106.2M634.5 1097.4V1106.2M643.0 1088V1106.2M651.6 1097.4V1106.2M660.1 1097.4V1106.2M668.6 1097.4V1106.2M677.2 1097.4V1106.2M685.7 1088V1106.2M694.3 1097.4V1106.2M702.8 1097.4V1106.2M711.3 1097.4V1106.2M719.9 1097.4V1106.2M728.4 1088V1106.2M737.0 1097.4V1106.2M745.5 1097.4V1106.2M754.0 1097.4V1106.2M762.6 1097.4V1106.2M771.1 1088V1106.2M779.7 1097.4V1106.2M788.2 1097.4V1106.2M796.7 1097.4V1106.2M805.3 1097.4V1106.2M813.8 1088V1106.2M822.3 1097.4V1106.2M830.9 1097.4V1106.2M839.4 1097.4V1106.2M848.0 1097.4V1106.2M856.5 1088V1106.2M865.0 1097.4V1106.2M873.6 1097.4V1106.2M882.1 1097.4V1106.2M890.7 1097.4V1106.2M899.2 1088V1106.2M907.7 1097.4V1106.2M916.3 1097.4V1106.2M924.8 1097.4V1106.2M933.4 1097.4V1106.2M941.9 1088V1106.2M950.4 1097.4V1106.2M959.0 1097.4V1106.2M967.5 1097.4V1106.2M976.1 1097.4V1106.2M984.6 1088V1106.2M993.1 1097.4V1106.2M1001.7 1097.4V1106.2M1010.2 1097.4V1106.2M1018.7 1097.4V1106.2M1027.3 1088V1106.2M1035.8 1097.4V1106.2M1044.4 1097.4V1106.2M1052.9 1097.4V1106.2M1061.4 1097.4V1106.2M1070.0 1088V1106.2M1078.5 1097.4V1106.2M1087.1 1097.4V1106.2M1095.6 1097.4V1106.2M1104.1 1097.4V1106.2M1112.7 1088V1106.2M1121.2 1097.4V1106.2M1129.8 1097.4V1106.2M1138.3 1097.4V1106.2M1146.8 1097.4V1106.2M1155.4 1088V1106.2M1163.9 1097.4V1106.2M1172.4 1097.4V1106.2M1181.0 1097.4V1106.2M1189.5 1097.4V1106.2M1198.1 1088V1106.2M1206.6 1097.4V1106.2M49.2 1109.6H58.1M49.2 1118.2H58.1M49.2 1126.7H58.1M39.8 1135.2H58.1M49.2 1143.8H58.1M49.2 1152.3H58.1M49.2 1160.9H58.1M49.2 1169.5H58.1M39.8 1178.0H58.1M49.2 1186.5H58.1M49.2 1195.1H58.1M49.2 1203.7H58.1M49.2 1212.2H58.1M39.8 1220.8H58.1M49.2 1229.3H58.1M49.2 1237.8H58.1M49.2 1246.4H58.1M49.2 1255.0H58.1M39.8 1263.5H58.1M49.2 1272.0H58.1M49.2 1280.6H58.1M49.2 1289.2H58.1M49.2 1297.7H58.1M39.8 1306.2H58.1M49.2 1314.8H58.1M49.2 1323.3H58.1M49.2 1331.9H58.1M49.2 1340.5H58.1M39.8 1349.0H58.1M49.2 1357.5H58.1M49.2 1366.1H58.1M49.2 1374.7H58.1M49.2 1383.2H58.1M39.8 1391.8H58.1M49.2 1400.3H58.1M49.2 1408.8H58.1M49.2 1417.4H58.1M49.2 1426.0H58.1M39.8 1434.5H58.1M49.2 1443.0H58.1M49.2 1451.6H58.1M49.2 1460.2H58.1M49.2 1468.7H58.1M39.8 1477.2H58.1M49.2 1485.8H58.1M49.2 1494.3H58.1M49.2 1502.9H58.1M49.2 1511.5H58.1M39.8 1520.0H58.1M49.2 1528.5H58.1M49.2 1537.1H58.1M49.2 1545.7H58.1M49.2 1554.2H58.1M39.8 1562.8H58.1M49.2 1571.3H58.1M49.2 1579.8H58.1M49.2 1588.4H58.1M49.2 1597.0H58.1M39.8 1605.5H58.1M49.2 1614.0H58.1M49.2 1622.6H58.1M49.2 1631.2H58.1M49.2 1639.7H58.1M39.8 1648.2H58.1M49.2 1656.8H58.1M49.2 1665.3H58.1M49.2 1673.9H58.1M49.2 1682.5H58.1M39.8 1691.0H58.1M49.2 1699.5H58.1M49.2 1708.1H58.1M49.2 1716.7H58.1M49.2 1725.2H58.1M39.8 1733.8H58.1M49.2 1742.3H58.1M49.2 1750.8H58.1M49.2 1759.4H58.1M49.2 1768.0H58.1M39.8 1776.5H58.1M49.2 1785.0H58.1M49.2 1793.6H58.1M49.2 1802.2H58.1M49.2 1810.7H58.1M39.8 1819.2H58.1M49.2 1827.8H58.1M49.2 1836.3H58.1M49.2 1844.9H58.1M49.2 1853.5H58.1M39.8 1862.0H58.1M49.2 1870.5H58.1M49.2 1879.1H58.1M49.2 1887.7H58.1M49.2 1896.2H58.1"/><g class="rl"><text x="130.7" y="1086">10</text><text x="216.1" y="1086">20</text><text x="301.5" y="1086">30</text><text x="386.9" y="1086">40</text><text x="472.2" y="1086">50</text><text x="557.6" y="1086">60</text><text x="643.0" y="1086">70</text><text x="728.4" y="1086">80</text><text x="813.8" y="1086">90</text><text x="899.2" y="1086">100</text><text x="984.6" y="1086">110</text><text x="1070.0" y="1086">120</text><text x="1155.4" y="1086">130</text><text transform="translate(37.2,1178.5) rotate(-90)">40</text><text transform="translate(37.2,1264.0) rotate(-90)">30</text><text transform="translate(37.2,1349.5) rotate(-90)">20</text><text transform="translate(37.2,1435.0) rotate(-90)">10</text><text transform="translate(37.2,1520.5) rotate(-90)">0</text><text transform="translate(37.2,1606.0) rotate(-90)">-10</text><text transform="translate(37.2,1691.5) rotate(-90)">-20</text><text transform="translate(37.2,1777.0) rotate(-90)">-30</text><text transform="translate(37.2,1862.5) rotate(-90)">-40</text></g><rect x="24.4" y="1072.4" width="31.4" height="31.399999999999864" fill="#e1e1e1" stroke="#adadad" stroke-width="1.3"/><g transform="translate(24.4,1072.4) scale(0.98125)"><g stroke="#ff1a1a" stroke-width="1.6" fill="#ff1a1a"><line x1="11.5" y1="11.5" x2="6" y2="6.5"/><polygon points="5.4,5.9 11.6,5.9 5.4,12.1" stroke="none"/><line x1="20.5" y1="11.5" x2="26" y2="6.5"/><polygon points="26.6,5.9 20.4,5.9 26.6,12.1" stroke="none"/><line x1="11.5" y1="20.5" x2="6" y2="25.5"/><polygon points="5.4,26.1 11.6,26.1 5.4,19.9" stroke="none"/><line x1="20.5" y1="20.5" x2="26" y2="25.5"/><polygon points="26.6,26.1 20.4,26.1 26.6,19.9" stroke="none"/></g><rect x="12.8" y="13.6" width="6.6" height="4.8" fill="#fff" stroke="#000" stroke-width="1.7"/></g><rect x="1213.6" y="1072.2" width="20.200000000000045" height="31.59999999999991" fill="#e1e1e1" stroke="#adadad" stroke-width="1.3"/><g transform="translate(1223.1,1085.7)"><ellipse cx="0" cy="0" rx="5.6" ry="7.9" fill="#fbfbfb"/><ellipse cx="0" cy="0" rx="5.9" ry="8.2" fill="none" stroke="#5326ad" stroke-width="1.7" stroke-dasharray="6 2.5 7 12.5 7 2.5 8"/><line x1="-4.6" y1="-0.2" x2="2.2" y2="-0.2" stroke="#5326ad" stroke-width="1.7"/><polygon points="3.4,6.2 7.4,7.2 7.0,11.4" fill="#222"/><rect x="3.4" y="5.2" width="2" height="2" fill="#e8d800"/></g><rect x="1213.9" y="1177" width="20.5" height="212" fill="#cdcdcd"/><polyline points="1219.2,1122.9 1224.2,1117.9 1229.2,1122.9" fill="none" stroke="#606060" stroke-width="3.0"/></svg>
<div class="a" style="left:1244.8px;top:1068.6px;width:1216.4px;height:834.4px;background:#7d7d7d;"></div>
<div class="a" style="left:1246.2px;top:1070.0px;width:1214.0px;height:833.0px;background:#f0f0f0;"></div>
<svg style="left:1246.2px;top:1070px" width="1213.9999999999998" height="833" viewBox="1246.2 1070 1213.9999999999998 833"><rect x="1282.5" y="1106.2" width="1153.1999999999998" height="796.8" fill="#000"/><defs><clipPath id="gclip"><path d="M1282.5 1233.1H1789.7V1827.3H1282.5V1762.6H1456.4V1645.0H1486.8V1637.4H1509.6V1629.8H1524.8V1622.2H1532.4V1614.6H1540.0V1607.0H1547.6V1599.4H1555.2V1591.8H1562.8V1584.2H1562.8V1576.6H1570.4V1569.0H1570.4V1561.4H1570.4V1553.8H1578.0V1546.2H1578.0V1538.6H1578.0V1531.0H1578.0V1523.4H1578.0V1515.8H1578.0V1508.2H1570.4V1500.6H1570.4V1493.0H1570.4V1485.4H1562.8V1477.8H1562.8V1470.2H1555.2V1462.6H1547.6V1455.0H1547.6V1447.4H1532.4V1439.8H1524.8V1432.2H1509.6V1424.6H1494.4V1417.0H1471.6V1415.0H1456.4V1296.1H1282.5Z"/></clipPath></defs><path d="M1282.5 1233.1H1789.7V1827.3H1282.5V1762.6H1456.4V1645.0H1486.8V1637.4H1509.6V1629.8H1524.8V1622.2H1532.4V1614.6H1540.0V1607.0H1547.6V1599.4H1555.2V1591.8H1562.8V1584.2H1562.8V1576.6H1570.4V1569.0H1570.4V1561.4H1570.4V1553.8H1578.0V1546.2H1578.0V1538.6H1578.0V1531.0H1578.0V1523.4H1578.0V1515.8H1578.0V1508.2H1570.4V1500.6H1570.4V1493.0H1570.4V1485.4H1562.8V1477.8H1562.8V1470.2H1555.2V1462.6H1547.6V1455.0H1547.6V1447.4H1532.4V1439.8H1524.8V1432.2H1509.6V1424.6H1494.4V1417.0H1471.6V1415.0H1456.4V1296.1H1282.5Z" fill="#55aa00"/><g clip-path="url(#gclip)"><defs><path id="dp6" d="M1282.5 1233.1L1789.7 1233.1M1282.5 1241.0L1789.7 1241.0M1282.5 1287.7L1464.8 1287.7M1282.5 1296.1L1464.8 1296.1M1456.4 1376.5L1781.3 1376.5M1456.4 1384.3L1781.3 1384.3M1487.3 1557.5L1781.3 1557.5M1487.3 1565.9L1781.3 1565.9M1487.3 1574.3L1781.3 1574.3M1487.3 1582.2L1781.3 1582.2M1487.3 1590.1L1781.3 1590.1M1487.3 1597.9L1781.3 1597.9M1487.3 1605.8L1781.3 1605.8M1487.3 1613.7L1781.3 1613.7M1487.3 1621.6L1781.3 1621.6M1487.3 1629.4L1781.3 1629.4M1487.3 1637.3L1781.3 1637.3M1456.4 1644.6L1781.3 1644.6M1456.4 1653.0L1781.3 1653.0M1456.4 1676.6L1781.3 1676.6M1456.4 1685.1L1781.3 1685.1M1282.5 1762.6L1789.7 1762.6M1282.5 1771.1L1789.7 1771.1M1282.5 1818.9L1789.7 1818.9M1282.5 1827.3L1789.7 1827.3M1456.4 1233.1L1456.4 1530.0M1464.8 1233.1L1464.8 1530.0M1480.6 1233.1L1480.6 1530.0M1495.8 1233.1L1495.8 1530.0M1512.6 1233.1L1512.6 1530.0M1521.1 1233.1L1521.1 1530.0M1536.2 1233.1L1536.2 1530.0M1543.5 1233.1L1543.5 1530.0M1552.0 1233.1L1552.0 1530.0M1559.3 1233.1L1559.3 1530.0M1567.2 1233.1L1567.2 1530.0M1575.6 1233.1L1575.6 1562.0M1582.9 1233.1L1582.9 1562.0M1456.4 1644.6L1456.4 1771.1M1464.8 1644.6L1464.8 1771.1M1290.6 1233.1L1290.6 1296.1M1290.6 1762.6L1290.6 1827.3M1781.3 1233.1L1781.3 1827.3M1789.7 1233.1L1789.7 1827.3"/></defs><use href="#dp6" stroke="#fff" stroke-width="1.75" fill="none"/><use href="#dp6" stroke="#000" stroke-width="1.75" fill="none" stroke-dasharray="6 6"/></g><path d="M1456.4 1645.0H1486.8V1637.4H1509.6V1629.8H1524.8V1622.2H1532.4V1614.6H1540.0V1607.0H1547.6V1599.4H1555.2V1591.8H1562.8V1584.2H1562.8V1576.6H1570.4V1569.0H1570.4V1561.4H1570.4V1553.8H1578.0V1546.2H1578.0V1538.6H1578.0V1531.0H1578.0V1523.4H1578.0V1515.8H1578.0V1508.2H1570.4V1500.6H1570.4V1493.0H1570.4V1485.4H1562.8V1477.8H1562.8V1470.2H1555.2V1462.6H1547.6V1455.0H1547.6V1447.4H1532.4V1439.8H1524.8V1432.2H1509.6V1424.6H1494.4V1417.0H1471.6V1415.0H1456.4" fill="none" stroke="#fff" stroke-width="1.75"/><path d="M1456.4 1645.0H1486.8V1637.4H1509.6V1629.8H1524.8V1622.2H1532.4V1614.6H1540.0V1607.0H1547.6V1599.4H1555.2V1591.8H1562.8V1584.2H1562.8V1576.6H1570.4V1569.0H1570.4V1561.4H1570.4V1553.8H1578.0V1546.2H1578.0V1538.6H1578.0V1531.0H1578.0V1523.4H1578.0V1515.8H1578.0V1508.2H1570.4V1500.6H1570.4V1493.0H1570.4V1485.4H1562.8V1477.8H1562.8V1470.2H1555.2V1462.6H1547.6V1455.0H1547.6V1447.4H1532.4V1439.8H1524.8V1432.2H1509.6V1424.6H1494.4V1417.0H1471.6V1415.0H1456.4" fill="none" stroke="#000" stroke-width="1.75" stroke-dasharray="6 6"/><rect x="1777.6" y="1323.9" width="658.0999999999999" height="412.5" fill="#cdcdcd"/><defs><path id="dp7" d="M1783.6 1324.5L2435.7 1324.5M1777.6 1332.0L2435.7 1332.0M1783.6 1341.4L2435.7 1341.4M1777.6 1348.7L2435.7 1348.7M1783.6 1355.9L2435.7 1355.9M1777.6 1363.4L2435.7 1363.4M1783.6 1372.8L2435.7 1372.8M1777.6 1380.1L2435.7 1380.1M1783.6 1387.3L2435.7 1387.3M1777.6 1394.8L2435.7 1394.8M1783.6 1404.2L2435.7 1404.2M1777.6 1411.5L2435.7 1411.5M1783.6 1418.7L2435.7 1418.7M1777.6 1426.2L2435.7 1426.2M1783.6 1435.6L2435.7 1435.6M1777.6 1442.9L2435.7 1442.9M1783.6 1450.1L2435.7 1450.1M1777.6 1457.6L2435.7 1457.6M1783.6 1467.0L2435.7 1467.0M1777.6 1474.3L2435.7 1474.3M1783.6 1481.5L2435.7 1481.5M1777.6 1489.0L2435.7 1489.0M1783.6 1498.4L2435.7 1498.4M1777.6 1505.7L2435.7 1505.7M1783.6 1512.9L2435.7 1512.9M1777.6 1520.4L2435.7 1520.4M1783.6 1529.8L2435.7 1529.8M1777.6 1537.1L2435.7 1537.1M1783.6 1544.3L2435.7 1544.3M1777.6 1551.8L2435.7 1551.8M1783.6 1561.2L2435.7 1561.2M1777.6 1568.5L2435.7 1568.5M1783.6 1575.7L2435.7 1575.7M1777.6 1583.2L2435.7 1583.2M1783.6 1592.6L2435.7 1592.6M1777.6 1599.9L2435.7 1599.9M1783.6 1607.1L2435.7 1607.1M1777.6 1614.6L2435.7 1614.6M1783.6 1624.0L2435.7 1624.0M1777.6 1631.3L2435.7 1631.3M1783.6 1638.5L2435.7 1638.5M1777.6 1646.0L2435.7 1646.0M1783.6 1655.4L2435.7 1655.4M1777.6 1662.7L2435.7 1662.7M1783.6 1669.9L2435.7 1669.9M1777.6 1677.4L2435.7 1677.4M1783.6 1686.8L2435.7 1686.8M1777.6 1694.1L2435.7 1694.1M1783.6 1701.3L2435.7 1701.3M1777.6 1708.8L2435.7 1708.8M1783.6 1718.2L2435.7 1718.2M1777.6 1725.5L2435.7 1725.5M1783.6 1732.7L2435.7 1732.7M1777.6 1735.8L2435.7 1735.8"/></defs><use href="#dp7" stroke="#f4f4f4" stroke-width="2.4" fill="none"/><use href="#dp7" stroke="#161616" stroke-width="1.8" fill="none" stroke-dasharray="5.8 6.1"/><defs><path id="dp8" d="M1778.6 1323.9L1778.6 1736.4M1785.6 1331.9L1785.6 1736.4M1790.2 1323.9L1790.2 1736.4M2427.7 1331.9L2427.7 1736.4M2434.9 1337.9L2434.9 1736.4"/></defs><use href="#dp8" stroke="#fff" stroke-width="1.75" fill="none"/><use href="#dp8" stroke="#000" stroke-width="1.75" fill="none" stroke-dasharray="6 6"/><text x="1289.6" y="1900.4" font-size="14.5" fill="#e8e8e8" text-anchor="middle">Y</text><path class="tk" d="M1295.2 1088V1106.2M1356.3 1088V1106.2M1417.4 1088V1106.2M1478.5 1088V1106.2M1539.6 1088V1106.2M1600.7 1088V1106.2M1661.8 1088V1106.2M1722.9 1088V1106.2M1784.0 1088V1106.2M1845.1 1088V1106.2M1906.2 1088V1106.2M1967.3 1088V1106.2M2028.4 1088V1106.2M2089.5 1088V1106.2M2150.6 1088V1106.2M2211.7 1088V1106.2M2272.8 1088V1106.2M2333.9 1088V1106.2M2395.0 1088V1106.2M1264.6 1157.2H1282.5M1264.6 1218.0H1282.5M1264.6 1278.8H1282.5M1264.6 1339.6H1282.5M1264.6 1400.4H1282.5M1264.6 1461.2H1282.5M1264.6 1522.0H1282.5M1264.6 1582.8H1282.5M1264.6 1643.6H1282.5M1264.6 1704.4H1282.5M1264.6 1765.2H1282.5M1264.6 1826.0H1282.5M1264.6 1886.8H1282.5"/><g class="rl"><text x="1294.7" y="1086">-80</text><text x="1416.9" y="1086">-60</text><text x="1539.1" y="1086">-40</text><text x="1661.3" y="1086">-20</text><text x="1783.5" y="1086">0</text><text x="1905.7" y="1086">20</text><text x="2027.9" y="1086">40</text><text x="2150.1" y="1086">60</text><text x="2272.3" y="1086">80</text><text x="2394.5" y="1086">100</text><text transform="translate(1262,1157.7) rotate(-90)">60</text><text transform="translate(1262,1279.3) rotate(-90)">40</text><text transform="translate(1262,1400.9) rotate(-90)">20</text><text transform="translate(1262,1522.5) rotate(-90)">0</text><text transform="translate(1262,1644.1) rotate(-90)">-20</text><text transform="translate(1262,1765.7) rotate(-90)">-40</text><text transform="translate(1262,1887.3) rotate(-90)">-60</text></g><rect x="1248.4" y="1072.4" width="32.0" height="31.399999999999864" fill="#e1e1e1" stroke="#adadad" stroke-width="1.3"/><g transform="translate(1248.6,1072.4) scale(0.98125)"><g stroke="#ff1a1a" stroke-width="1.6" fill="#ff1a1a"><line x1="11.5" y1="11.5" x2="6" y2="6.5"/><polygon points="5.4,5.9 11.6,5.9 5.4,12.1" stroke="none"/><line x1="20.5" y1="11.5" x2="26" y2="6.5"/><polygon points="26.6,5.9 20.4,5.9 26.6,12.1" stroke="none"/><line x1="11.5" y1="20.5" x2="6" y2="25.5"/><polygon points="5.4,26.1 11.6,26.1 5.4,19.9" stroke="none"/><line x1="20.5" y1="20.5" x2="26" y2="25.5"/><polygon points="26.6,26.1 20.4,26.1 26.6,19.9" stroke="none"/></g><rect x="12.8" y="13.6" width="6.6" height="4.8" fill="#fff" stroke="#000" stroke-width="1.7"/></g><rect x="2438" y="1072.2" width="20" height="31.59999999999991" fill="#e1e1e1" stroke="#adadad" stroke-width="1.3"/><g transform="translate(2447.6,1085.7)"><ellipse cx="0" cy="0" rx="5.6" ry="7.9" fill="#fbfbfb"/><ellipse cx="0" cy="0" rx="5.9" ry="8.2" fill="none" stroke="#5326ad" stroke-width="1.7" stroke-dasharray="6 2.5 7 12.5 7 2.5 8"/><line x1="-4.6" y1="-0.2" x2="2.2" y2="-0.2" stroke="#5326ad" stroke-width="1.7"/><polygon points="3.4,6.2 7.4,7.2 7.0,11.4" fill="#222"/><rect x="3.4" y="5.2" width="2" height="2" fill="#e8d800"/></g><rect x="2437.6" y="1175.2" width="20.8" height="210" fill="#cdcdcd"/><polyline points="2443.0,1121.9 2448,1116.9 2453.0,1121.9" fill="none" stroke="#606060" stroke-width="3.0"/></svg>
<div class="a" style="left:3058.0px;top:80.4px;width:29.0px;height:1821.6px;background:#f0f0f0;"></div>
<div class="a" style="left:3058.0px;top:80.4px;width:1.5px;height:1821.6px;background:#fafafa;"></div>
<div class="a" style="left:3085.8px;top:80.4px;width:1.2px;height:1821.6px;background:#fafafa;"></div>
<div class="a" style="left:3060.2px;top:105.6px;width:23.2px;height:1631.2px;background:#cdcdcd;"></div>
<div class="a" style="left:4.0px;top:1902.0px;width:3083.0px;height:26.0px;background:#f0f0f0;"></div>
<div class="a" style="left:4.0px;top:1902.0px;width:3054.0px;height:1.4px;background:#fafafa;"></div>
<div class="a" style="left:29.0px;top:1904.3px;width:2415.8px;height:21.6px;background:#cdcdcd;"></div>
<div class="a" style="left:1.0px;top:1927.4px;width:3086.0px;height:1.8px;background:#e6e6e6;"></div>
<div class="a" style="left:1.0px;top:1929.2px;width:3086.0px;height:1.4px;background:#ffffff;"></div>
<div class="a" style="left:0.0px;top:1930.6px;width:3088.0px;height:1.4px;background:#14385a;"></div>
<svg style="left:0;top:0" width="3088" height="1932" viewBox="0 0 3088 1932"><polyline points="3065.6,96.05 3071.1,90.55 3076.6,96.05" fill="none" stroke="#606060" stroke-width="3.0"/><polyline points="3065.6,1887.45 3071.1,1892.95 3076.6,1887.45" fill="none" stroke="#606060" stroke-width="3.0"/><polyline points="18.95,1909.5 13.45,1915 18.95,1920.5" fill="none" stroke="#606060" stroke-width="3.0"/><polyline points="3043.35,1909.5 3048.85,1915 3043.35,1920.5" fill="none" stroke="#606060" stroke-width="3.0"/><g fill="#bdbdbd"><rect x="3078.0" y="1923.0" width="2.4" height="2.4"/><rect x="3078.0" y="1918.7" width="2.4" height="2.4"/><rect x="3078.0" y="1914.4" width="2.4" height="2.4"/><rect x="3073.7" y="1923.0" width="2.4" height="2.4"/><rect x="3073.7" y="1918.7" width="2.4" height="2.4"/><rect x="3069.4" y="1923.0" width="2.4" height="2.4"/></g></svg>
</body></html>
